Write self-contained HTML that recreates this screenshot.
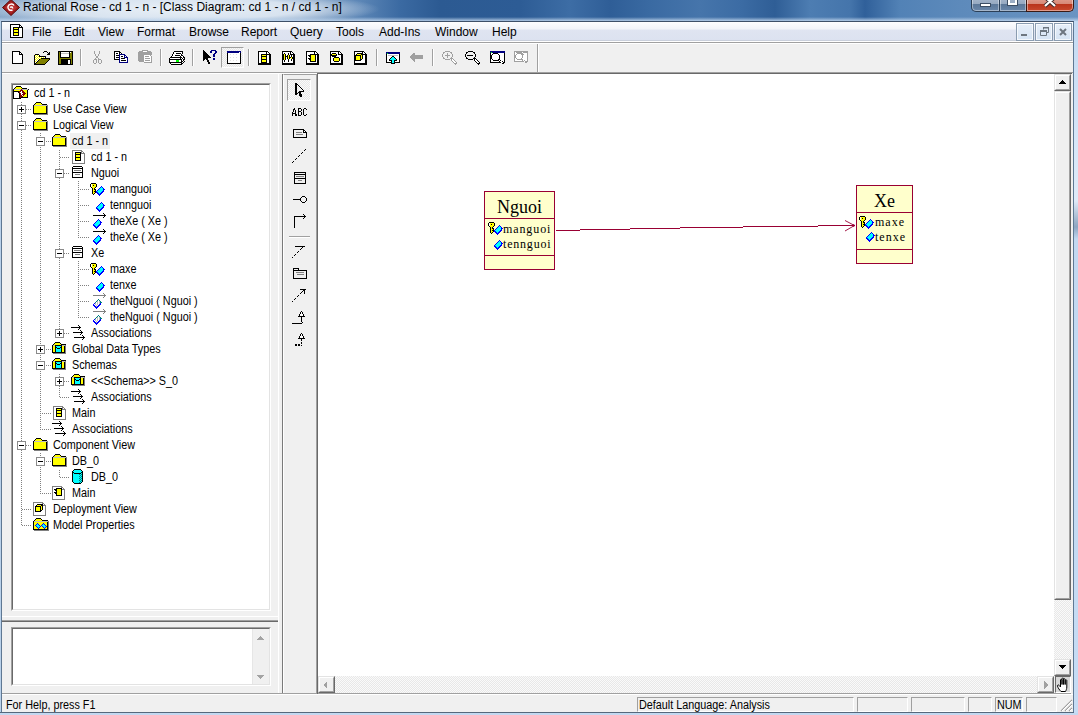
<!DOCTYPE html>
<html><head><meta charset="utf-8">
<style>
*{margin:0;padding:0;box-sizing:border-box}
html,body{width:1078px;height:715px;overflow:hidden;background:#f0f0f0;font-family:"Liberation Sans",sans-serif;position:relative}
.a{position:absolute;display:block}
.t{position:absolute;font-size:12px;line-height:16px;white-space:nowrap;color:#000;transform:scaleX(0.9);transform-origin:0 0}
.mi{position:absolute;top:23px;font-size:12px;line-height:18px;color:#000;white-space:nowrap}
.dot{position:absolute}
</style></head><body>
<div class="a" style="left:0;top:0;width:1078px;height:21px;background:linear-gradient(90deg,#8aa9ca 0px,#7d9ec4 300px,#5c86b6 360px,#3b6aa2 400px,#2c5a92 440px,#2d5c95 520px,#3d6da5 570px,#2f5e97 610px,#3a6aa2 650px,#4675ab 700px,#3c6ca4 740px,#2f5e96 775px,#4d7db2 810px,#4575ab 850px,#30609a 865px,#5282b6 900px,#5d8abb 960px,#6a94c2 1078px)"></div><div class="a" style="left:0;top:0;width:420px;height:21px;background:radial-gradient(ellipse 200px 18px at 180px 9px,rgba(236,242,248,.97) 0%,rgba(225,234,244,.9) 60%,rgba(200,218,238,0) 100%)"></div><div class="a" style="left:0;top:17px;width:1078px;height:4px;background:linear-gradient(rgba(200,220,240,0),rgba(190,212,236,.9))"></div><div class="a" style="left:23px;top:-2px;font-size:12px;line-height:18px;white-space:nowrap;color:#000">Rational Rose - cd 1 - n - [Class Diagram: cd 1 - n / cd 1 - n]</div><svg class="a" style="left:2px;top:-1px" width="18" height="17"><path d="M9 0.5 L17.5 8.5 L9 16.5 L0.5 8.5 Z" fill="#9c1c1c" stroke="#5a0a0a" stroke-width="1"/><path d="M9 3 L15 8.5 L9 14 L3 8.5 Z" fill="#b83030"/><path d="M12 6.5 C11 4.5 7 4.5 6 7.5 C5.3 10 8 12 10.5 11 M8 8.5 C9 7.5 11 8 10.5 9.5" stroke="#fff" stroke-width="1.5" fill="none"/></svg><div class="a" style="left:971px;top:-4px;width:29px;height:16px;border:1px solid #2b3f57;border-top:none;border-radius:0 0 0 5px;background:linear-gradient(#aabbd0 0,#97aac2 50%,#5a7697 52%,#6a87aa 100%);box-shadow:inset 0 0 0 1px rgba(255,255,255,.4)"></div><div class="a" style="left:999px;top:-4px;width:28px;height:16px;border:1px solid #2b3f57;border-top:none;background:linear-gradient(#aabbd0 0,#97aac2 50%,#5a7697 52%,#6a87aa 100%);box-shadow:inset 0 0 0 1px rgba(255,255,255,.4)"></div><div class="a" style="left:1026px;top:-4px;width:48px;height:16px;border:1px solid #3a1a14;border-top:none;border-radius:0 0 5px 0;background:linear-gradient(#e3a597 0,#d88a78 50%,#b8321a 52%,#c84a2e 100%);box-shadow:inset 0 0 0 1px rgba(255,255,255,.45)"></div><div class="a" style="left:980px;top:3px;width:11px;height:4px;background:#fff;border:1px solid #3c4e64"></div><div class="a" style="left:1008px;top:-3px;width:9px;height:8px;border:2px solid #fff;outline:1px solid #3c4e64"></div><svg class="a" style="left:1043px;top:-3px" width="14" height="11"><path d="M2 0 L7 4.5 L12 0 M2 9 L7 4.5 L12 9" stroke="#3a2a2a" stroke-width="4" fill="none"/><path d="M2 0 L7 4.5 L12 0 M2 9 L7 4.5 L12 9" stroke="#fff" stroke-width="2.2" fill="none"/></svg><div class="a" style="left:0;top:21px;width:2px;height:694px;background:linear-gradient(90deg,#b9d1ea 0,#b9d1ea 1px,#5f7893 1px)"></div><div class="a" style="left:1073px;top:21px;width:5px;height:694px;background:linear-gradient(90deg,#5f7893 0,#5f7893 1px,#c6dcf4 1px)"></div><div class="a" style="left:1074px;top:21px;width:4px;height:692px;background:linear-gradient(180deg,#c4daf2 0,#d6e6f8 120px,#dfeaf8 180px,#9fb4cc 200px,#8ea6c2 206px,#c2d8f0 218px,#c6dcf4 100%)"></div><div class="a" style="left:0;top:713px;width:1078px;height:2px;background:#c3d8f0"></div><div class="a" style="left:0;top:712px;width:1074px;height:1px;background:#56687c"></div><div class="a" style="left:1px;top:21px;width:1073px;height:1px;background:#3e5068;border-radius:2px 2px 0 0"></div><div class="a" style="left:2px;top:22px;width:1071px;height:19px;background:linear-gradient(#fdfdfe 0,#f2f4f9 35%,#dfe4f1 45%,#dce2f0 100%)"></div><div class="a" style="left:2px;top:40px;width:1071px;height:1px;background:#c9cfdb"></div><div class="a" style="left:2px;top:41px;width:1071px;height:1px;background:#ffffff"></div><div class="a" style="left:2px;top:42px;width:1071px;height:1px;background:#a0a0a0"></div><div class="a" style="left:2px;top:43px;width:1071px;height:1px;background:#ffffff"></div><svg class="a" style="left:10px;top:24px" width="13" height="14" shape-rendering="crispEdges"><rect x="0" y="0" width="10" height="1" fill="#000000"/><rect x="0" y="1" width="1" height="1" fill="#000000"/><rect x="1" y="1" width="8" height="1" fill="#ffffff"/><rect x="9" y="1" width="2" height="1" fill="#000000"/><rect x="0" y="2" width="1" height="1" fill="#000000"/><rect x="1" y="2" width="8" height="1" fill="#ffffff"/><rect x="9" y="2" width="1" height="1" fill="#000000"/><rect x="10" y="2" width="1" height="1" fill="#ffffff"/><rect x="11" y="2" width="1" height="1" fill="#000000"/><rect x="0" y="3" width="1" height="1" fill="#000000"/><rect x="1" y="3" width="2" height="1" fill="#ffffff"/><rect x="3" y="3" width="10" height="1" fill="#000000"/><rect x="0" y="4" width="1" height="1" fill="#000000"/><rect x="1" y="4" width="2" height="1" fill="#ffffff"/><rect x="3" y="4" width="1" height="1" fill="#000000"/><rect x="4" y="4" width="4" height="1" fill="#ffff00"/><rect x="8" y="4" width="1" height="1" fill="#000000"/><rect x="9" y="4" width="3" height="1" fill="#ffffff"/><rect x="12" y="4" width="1" height="1" fill="#000000"/><rect x="0" y="5" width="1" height="1" fill="#000000"/><rect x="1" y="5" width="2" height="1" fill="#ffffff"/><rect x="3" y="5" width="6" height="1" fill="#000000"/><rect x="9" y="5" width="3" height="1" fill="#ffffff"/><rect x="12" y="5" width="1" height="1" fill="#000000"/><rect x="0" y="6" width="1" height="1" fill="#000000"/><rect x="1" y="6" width="2" height="1" fill="#ffffff"/><rect x="3" y="6" width="1" height="1" fill="#000000"/><rect x="4" y="6" width="4" height="1" fill="#ffff00"/><rect x="8" y="6" width="1" height="1" fill="#000000"/><rect x="9" y="6" width="3" height="1" fill="#ffffff"/><rect x="12" y="6" width="1" height="1" fill="#000000"/><rect x="0" y="7" width="1" height="1" fill="#000000"/><rect x="1" y="7" width="2" height="1" fill="#ffffff"/><rect x="3" y="7" width="1" height="1" fill="#000000"/><rect x="4" y="7" width="4" height="1" fill="#ffff00"/><rect x="8" y="7" width="1" height="1" fill="#000000"/><rect x="9" y="7" width="3" height="1" fill="#ffffff"/><rect x="12" y="7" width="1" height="1" fill="#000000"/><rect x="0" y="8" width="1" height="1" fill="#000000"/><rect x="1" y="8" width="2" height="1" fill="#ffffff"/><rect x="3" y="8" width="6" height="1" fill="#000000"/><rect x="9" y="8" width="3" height="1" fill="#ffffff"/><rect x="12" y="8" width="1" height="1" fill="#000000"/><rect x="0" y="9" width="1" height="1" fill="#000000"/><rect x="1" y="9" width="2" height="1" fill="#ffffff"/><rect x="3" y="9" width="1" height="1" fill="#000000"/><rect x="4" y="9" width="4" height="1" fill="#ffff00"/><rect x="8" y="9" width="1" height="1" fill="#000000"/><rect x="9" y="9" width="3" height="1" fill="#ffffff"/><rect x="12" y="9" width="1" height="1" fill="#000000"/><rect x="0" y="10" width="1" height="1" fill="#000000"/><rect x="1" y="10" width="2" height="1" fill="#ffffff"/><rect x="3" y="10" width="1" height="1" fill="#000000"/><rect x="4" y="10" width="4" height="1" fill="#ffff00"/><rect x="8" y="10" width="1" height="1" fill="#000000"/><rect x="9" y="10" width="3" height="1" fill="#ffffff"/><rect x="12" y="10" width="1" height="1" fill="#000000"/><rect x="0" y="11" width="1" height="1" fill="#000000"/><rect x="1" y="11" width="2" height="1" fill="#ffffff"/><rect x="3" y="11" width="6" height="1" fill="#000000"/><rect x="9" y="11" width="3" height="1" fill="#ffffff"/><rect x="12" y="11" width="1" height="1" fill="#000000"/><rect x="0" y="12" width="1" height="1" fill="#000000"/><rect x="1" y="12" width="11" height="1" fill="#ffffff"/><rect x="12" y="12" width="1" height="1" fill="#000000"/><rect x="0" y="13" width="13" height="1" fill="#000000"/></svg><div class="mi" style="left:32px">File</div><div class="mi" style="left:64px">Edit</div><div class="mi" style="left:98px">View</div><div class="mi" style="left:137px">Format</div><div class="mi" style="left:189px">Browse</div><div class="mi" style="left:241px">Report</div><div class="mi" style="left:290px">Query</div><div class="mi" style="left:336px">Tools</div><div class="mi" style="left:379px">Add-Ins</div><div class="mi" style="left:435px">Window</div><div class="mi" style="left:492px">Help</div><div class="a" style="left:1016px;top:23px;width:18px;height:18px;border:1px solid #8a9cb0;background:linear-gradient(#e6eef8,#d6e4f4);box-shadow:inset 0 0 0 1px rgba(255,255,255,.7)"></div><div class="a" style="left:1035px;top:23px;width:18px;height:18px;border:1px solid #8a9cb0;background:linear-gradient(#e6eef8,#d6e4f4);box-shadow:inset 0 0 0 1px rgba(255,255,255,.7)"></div><div class="a" style="left:1054px;top:23px;width:18px;height:18px;border:1px solid #8a9cb0;background:linear-gradient(#e6eef8,#d6e4f4);box-shadow:inset 0 0 0 1px rgba(255,255,255,.7)"></div><div class="a" style="left:1021px;top:34px;width:6px;height:2px;background:#6d7680"></div><svg class="a" style="left:1040px;top:27px" width="9" height="9"><path d="M3.5 2.5 V0.5 H8.5 V5.5 H6.5 M0.5 3.5 H6.5 V8.5 H0.5 Z M0.5 4.5 H6.5" stroke="#6d7680" fill="none" stroke-width="1"/><rect x="0" y="3" width="7" height="2" fill="#6d7680"/><rect x="3" y="0" width="6" height="1.5" fill="#6d7680"/></svg><svg class="a" style="left:1059px;top:28px" width="8" height="8"><path d="M1 1 L7 7 M7 1 L1 7" stroke="#6d7680" stroke-width="2"/></svg><div class="a" style="left:2px;top:72px;width:1071px;height:1px;background:#a0a0a0"></div><div class="a" style="left:537px;top:44px;width:1px;height:28px;background:#a0a0a0"></div><div class="a" style="left:538px;top:44px;width:1px;height:28px;background:#ffffff"></div><div class="a" style="left:80px;top:49px;width:1px;height:17px;background:#a0a0a0"></div><div class="a" style="left:81px;top:49px;width:1px;height:17px;background:#ffffff"></div><div class="a" style="left:160px;top:49px;width:1px;height:17px;background:#a0a0a0"></div><div class="a" style="left:161px;top:49px;width:1px;height:17px;background:#ffffff"></div><div class="a" style="left:192px;top:49px;width:1px;height:17px;background:#a0a0a0"></div><div class="a" style="left:193px;top:49px;width:1px;height:17px;background:#ffffff"></div><div class="a" style="left:248px;top:49px;width:1px;height:17px;background:#a0a0a0"></div><div class="a" style="left:249px;top:49px;width:1px;height:17px;background:#ffffff"></div><div class="a" style="left:376px;top:49px;width:1px;height:17px;background:#a0a0a0"></div><div class="a" style="left:377px;top:49px;width:1px;height:17px;background:#ffffff"></div><div class="a" style="left:432px;top:49px;width:1px;height:17px;background:#a0a0a0"></div><div class="a" style="left:433px;top:49px;width:1px;height:17px;background:#ffffff"></div><div class="a" style="left:221px;top:47px;width:23px;height:21px;border-top:1px solid #a0a0a0;border-left:1px solid #a0a0a0;border-right:1px solid #fff;border-bottom:1px solid #fff;background-color:#f7f7f7;background-image:linear-gradient(45deg,#e6e6e6 25%,transparent 25%,transparent 75%,#e6e6e6 75%),linear-gradient(45deg,#e6e6e6 25%,transparent 25%,transparent 75%,#e6e6e6 75%);background-size:2px 2px;background-position:0 0,1px 1px"></div><svg class="a" style="left:12px;top:51px" width="11" height="13" shape-rendering="crispEdges"><rect x="0" y="0" width="8" height="1" fill="#000000"/><rect x="0" y="1" width="1" height="1" fill="#000000"/><rect x="1" y="1" width="6" height="1" fill="#ffffff"/><rect x="7" y="1" width="2" height="1" fill="#000000"/><rect x="0" y="2" width="1" height="1" fill="#000000"/><rect x="1" y="2" width="6" height="1" fill="#ffffff"/><rect x="7" y="2" width="1" height="1" fill="#000000"/><rect x="8" y="2" width="1" height="1" fill="#ffffff"/><rect x="9" y="2" width="1" height="1" fill="#000000"/><rect x="0" y="3" width="1" height="1" fill="#000000"/><rect x="1" y="3" width="6" height="1" fill="#ffffff"/><rect x="7" y="3" width="4" height="1" fill="#000000"/><rect x="0" y="4" width="1" height="1" fill="#000000"/><rect x="1" y="4" width="9" height="1" fill="#ffffff"/><rect x="10" y="4" width="1" height="1" fill="#000000"/><rect x="0" y="5" width="1" height="1" fill="#000000"/><rect x="1" y="5" width="9" height="1" fill="#ffffff"/><rect x="10" y="5" width="1" height="1" fill="#000000"/><rect x="0" y="6" width="1" height="1" fill="#000000"/><rect x="1" y="6" width="9" height="1" fill="#ffffff"/><rect x="10" y="6" width="1" height="1" fill="#000000"/><rect x="0" y="7" width="1" height="1" fill="#000000"/><rect x="1" y="7" width="9" height="1" fill="#ffffff"/><rect x="10" y="7" width="1" height="1" fill="#000000"/><rect x="0" y="8" width="1" height="1" fill="#000000"/><rect x="1" y="8" width="9" height="1" fill="#ffffff"/><rect x="10" y="8" width="1" height="1" fill="#000000"/><rect x="0" y="9" width="1" height="1" fill="#000000"/><rect x="1" y="9" width="9" height="1" fill="#ffffff"/><rect x="10" y="9" width="1" height="1" fill="#000000"/><rect x="0" y="10" width="1" height="1" fill="#000000"/><rect x="1" y="10" width="9" height="1" fill="#ffffff"/><rect x="10" y="10" width="1" height="1" fill="#000000"/><rect x="0" y="11" width="1" height="1" fill="#000000"/><rect x="1" y="11" width="9" height="1" fill="#ffffff"/><rect x="10" y="11" width="1" height="1" fill="#000000"/><rect x="0" y="12" width="11" height="1" fill="#000000"/></svg><svg class="a" style="left:34px;top:51px" width="16" height="14" shape-rendering="crispEdges"><rect x="10" y="0" width="3" height="1" fill="#000000"/><rect x="9" y="1" width="1" height="1" fill="#000000"/><rect x="13" y="1" width="1" height="1" fill="#000000"/><rect x="15" y="1" width="1" height="1" fill="#000000"/><rect x="14" y="2" width="2" height="1" fill="#000000"/><rect x="1" y="3" width="4" height="1" fill="#000000"/><rect x="13" y="3" width="3" height="1" fill="#000000"/><rect x="0" y="4" width="1" height="1" fill="#000000"/><rect x="1" y="4" width="1" height="1" fill="#ffff00"/><rect x="2" y="4" width="1" height="1" fill="#ffffff"/><rect x="3" y="4" width="1" height="1" fill="#ffff00"/><rect x="4" y="4" width="1" height="1" fill="#ffffff"/><rect x="5" y="4" width="1" height="1" fill="#000000"/><rect x="0" y="5" width="1" height="1" fill="#000000"/><rect x="1" y="5" width="1" height="1" fill="#ffffff"/><rect x="2" y="5" width="1" height="1" fill="#ffff00"/><rect x="3" y="5" width="1" height="1" fill="#ffffff"/><rect x="4" y="5" width="1" height="1" fill="#ffff00"/><rect x="5" y="5" width="7" height="1" fill="#000000"/><rect x="0" y="6" width="1" height="1" fill="#000000"/><rect x="1" y="6" width="1" height="1" fill="#ffff00"/><rect x="2" y="6" width="1" height="1" fill="#ffffff"/><rect x="3" y="6" width="1" height="1" fill="#ffff00"/><rect x="4" y="6" width="1" height="1" fill="#ffffff"/><rect x="5" y="6" width="1" height="1" fill="#ffff00"/><rect x="6" y="6" width="1" height="1" fill="#ffffff"/><rect x="7" y="6" width="1" height="1" fill="#ffff00"/><rect x="8" y="6" width="1" height="1" fill="#ffffff"/><rect x="9" y="6" width="1" height="1" fill="#ffff00"/><rect x="10" y="6" width="1" height="1" fill="#ffffff"/><rect x="11" y="6" width="1" height="1" fill="#000000"/><rect x="0" y="7" width="1" height="1" fill="#000000"/><rect x="1" y="7" width="1" height="1" fill="#ffffff"/><rect x="2" y="7" width="1" height="1" fill="#ffff00"/><rect x="3" y="7" width="1" height="1" fill="#ffffff"/><rect x="4" y="7" width="1" height="1" fill="#ffff00"/><rect x="5" y="7" width="1" height="1" fill="#ffffff"/><rect x="6" y="7" width="1" height="1" fill="#ffff00"/><rect x="7" y="7" width="9" height="1" fill="#000000"/><rect x="0" y="8" width="1" height="1" fill="#000000"/><rect x="1" y="8" width="1" height="1" fill="#ffff00"/><rect x="2" y="8" width="1" height="1" fill="#ffffff"/><rect x="3" y="8" width="1" height="1" fill="#ffff00"/><rect x="4" y="8" width="1" height="1" fill="#ffffff"/><rect x="5" y="8" width="1" height="1" fill="#000000"/><rect x="6" y="8" width="9" height="1" fill="#808000"/><rect x="15" y="8" width="1" height="1" fill="#000000"/><rect x="0" y="9" width="1" height="1" fill="#000000"/><rect x="1" y="9" width="1" height="1" fill="#ffffff"/><rect x="2" y="9" width="1" height="1" fill="#ffff00"/><rect x="3" y="9" width="1" height="1" fill="#ffffff"/><rect x="4" y="9" width="1" height="1" fill="#000000"/><rect x="5" y="9" width="9" height="1" fill="#808000"/><rect x="14" y="9" width="1" height="1" fill="#000000"/><rect x="0" y="10" width="1" height="1" fill="#000000"/><rect x="1" y="10" width="1" height="1" fill="#ffff00"/><rect x="2" y="10" width="1" height="1" fill="#ffffff"/><rect x="3" y="10" width="1" height="1" fill="#000000"/><rect x="4" y="10" width="9" height="1" fill="#808000"/><rect x="13" y="10" width="1" height="1" fill="#000000"/><rect x="0" y="11" width="1" height="1" fill="#000000"/><rect x="1" y="11" width="1" height="1" fill="#ffffff"/><rect x="2" y="11" width="1" height="1" fill="#000000"/><rect x="3" y="11" width="9" height="1" fill="#808000"/><rect x="12" y="11" width="1" height="1" fill="#000000"/><rect x="0" y="12" width="2" height="1" fill="#000000"/><rect x="2" y="12" width="9" height="1" fill="#808000"/><rect x="11" y="12" width="1" height="1" fill="#000000"/><rect x="0" y="13" width="11" height="1" fill="#000000"/></svg><svg class="a" style="left:58px;top:51px" width="15" height="14" shape-rendering="crispEdges"><rect x="0" y="0" width="15" height="1" fill="#000000"/><rect x="0" y="1" width="1" height="1" fill="#000000"/><rect x="1" y="1" width="1" height="1" fill="#808000"/><rect x="2" y="1" width="1" height="1" fill="#000000"/><rect x="3" y="1" width="8" height="1" fill="#ffffff"/><rect x="11" y="1" width="1" height="1" fill="#000000"/><rect x="12" y="1" width="1" height="1" fill="#ffffff"/><rect x="13" y="1" width="1" height="1" fill="#808000"/><rect x="14" y="1" width="1" height="1" fill="#000000"/><rect x="0" y="2" width="1" height="1" fill="#000000"/><rect x="1" y="2" width="1" height="1" fill="#808000"/><rect x="2" y="2" width="1" height="1" fill="#000000"/><rect x="3" y="2" width="8" height="1" fill="#c0c0c0"/><rect x="11" y="2" width="1" height="1" fill="#000000"/><rect x="12" y="2" width="2" height="1" fill="#808000"/><rect x="14" y="2" width="1" height="1" fill="#000000"/><rect x="0" y="3" width="1" height="1" fill="#000000"/><rect x="1" y="3" width="1" height="1" fill="#808000"/><rect x="2" y="3" width="1" height="1" fill="#000000"/><rect x="3" y="3" width="8" height="1" fill="#ffffff"/><rect x="11" y="3" width="1" height="1" fill="#000000"/><rect x="12" y="3" width="2" height="1" fill="#808000"/><rect x="14" y="3" width="1" height="1" fill="#000000"/><rect x="0" y="4" width="1" height="1" fill="#000000"/><rect x="1" y="4" width="1" height="1" fill="#808000"/><rect x="2" y="4" width="1" height="1" fill="#000000"/><rect x="3" y="4" width="8" height="1" fill="#ffffff"/><rect x="11" y="4" width="1" height="1" fill="#000000"/><rect x="12" y="4" width="2" height="1" fill="#808000"/><rect x="14" y="4" width="1" height="1" fill="#000000"/><rect x="0" y="5" width="1" height="1" fill="#000000"/><rect x="1" y="5" width="1" height="1" fill="#808000"/><rect x="2" y="5" width="1" height="1" fill="#000000"/><rect x="3" y="5" width="8" height="1" fill="#ffffff"/><rect x="11" y="5" width="1" height="1" fill="#000000"/><rect x="12" y="5" width="2" height="1" fill="#808000"/><rect x="14" y="5" width="1" height="1" fill="#000000"/><rect x="0" y="6" width="1" height="1" fill="#000000"/><rect x="1" y="6" width="1" height="1" fill="#808000"/><rect x="2" y="6" width="10" height="1" fill="#000000"/><rect x="12" y="6" width="2" height="1" fill="#808000"/><rect x="14" y="6" width="1" height="1" fill="#000000"/><rect x="0" y="7" width="1" height="1" fill="#000000"/><rect x="1" y="7" width="13" height="1" fill="#808000"/><rect x="14" y="7" width="1" height="1" fill="#000000"/><rect x="0" y="8" width="1" height="1" fill="#000000"/><rect x="1" y="8" width="2" height="1" fill="#808000"/><rect x="3" y="8" width="10" height="1" fill="#000000"/><rect x="13" y="8" width="1" height="1" fill="#808000"/><rect x="14" y="8" width="1" height="1" fill="#000000"/><rect x="0" y="9" width="1" height="1" fill="#000000"/><rect x="1" y="9" width="2" height="1" fill="#808000"/><rect x="3" y="9" width="7" height="1" fill="#000000"/><rect x="10" y="9" width="2" height="1" fill="#ffffff"/><rect x="12" y="9" width="1" height="1" fill="#000000"/><rect x="13" y="9" width="1" height="1" fill="#808000"/><rect x="14" y="9" width="1" height="1" fill="#000000"/><rect x="0" y="10" width="1" height="1" fill="#000000"/><rect x="1" y="10" width="2" height="1" fill="#808000"/><rect x="3" y="10" width="7" height="1" fill="#000000"/><rect x="10" y="10" width="2" height="1" fill="#ffffff"/><rect x="12" y="10" width="1" height="1" fill="#000000"/><rect x="13" y="10" width="1" height="1" fill="#808000"/><rect x="14" y="10" width="1" height="1" fill="#000000"/><rect x="0" y="11" width="1" height="1" fill="#000000"/><rect x="1" y="11" width="2" height="1" fill="#808000"/><rect x="3" y="11" width="7" height="1" fill="#000000"/><rect x="10" y="11" width="2" height="1" fill="#ffffff"/><rect x="12" y="11" width="1" height="1" fill="#000000"/><rect x="13" y="11" width="1" height="1" fill="#808000"/><rect x="14" y="11" width="1" height="1" fill="#000000"/><rect x="0" y="12" width="1" height="1" fill="#000000"/><rect x="1" y="12" width="2" height="1" fill="#808000"/><rect x="3" y="12" width="7" height="1" fill="#000000"/><rect x="10" y="12" width="2" height="1" fill="#ffffff"/><rect x="12" y="12" width="1" height="1" fill="#000000"/><rect x="13" y="12" width="1" height="1" fill="#808000"/><rect x="14" y="12" width="1" height="1" fill="#000000"/><rect x="0" y="13" width="15" height="1" fill="#000000"/></svg><svg class="a" style="left:93px;top:51px" width="9" height="14" shape-rendering="crispEdges"><rect x="1" y="0" width="1" height="1" fill="#a0a0a0"/><rect x="6" y="0" width="1" height="1" fill="#a0a0a0"/><rect x="1" y="1" width="1" height="1" fill="#a0a0a0"/><rect x="6" y="1" width="1" height="1" fill="#a0a0a0"/><rect x="1" y="2" width="1" height="1" fill="#a0a0a0"/><rect x="6" y="2" width="1" height="1" fill="#a0a0a0"/><rect x="2" y="3" width="1" height="1" fill="#a0a0a0"/><rect x="5" y="3" width="1" height="1" fill="#a0a0a0"/><rect x="2" y="4" width="1" height="1" fill="#a0a0a0"/><rect x="5" y="4" width="1" height="1" fill="#a0a0a0"/><rect x="3" y="5" width="2" height="1" fill="#a0a0a0"/><rect x="3" y="6" width="2" height="1" fill="#a0a0a0"/><rect x="2" y="7" width="1" height="1" fill="#a0a0a0"/><rect x="5" y="7" width="1" height="1" fill="#a0a0a0"/><rect x="1" y="8" width="3" height="1" fill="#a0a0a0"/><rect x="5" y="8" width="3" height="1" fill="#a0a0a0"/><rect x="0" y="9" width="1" height="1" fill="#a0a0a0"/><rect x="3" y="9" width="1" height="1" fill="#a0a0a0"/><rect x="5" y="9" width="1" height="1" fill="#a0a0a0"/><rect x="8" y="9" width="1" height="1" fill="#a0a0a0"/><rect x="0" y="10" width="1" height="1" fill="#a0a0a0"/><rect x="3" y="10" width="1" height="1" fill="#a0a0a0"/><rect x="5" y="10" width="1" height="1" fill="#a0a0a0"/><rect x="8" y="10" width="1" height="1" fill="#a0a0a0"/><rect x="0" y="11" width="1" height="1" fill="#a0a0a0"/><rect x="3" y="11" width="1" height="1" fill="#a0a0a0"/><rect x="5" y="11" width="1" height="1" fill="#a0a0a0"/><rect x="8" y="11" width="1" height="1" fill="#a0a0a0"/><rect x="1" y="12" width="2" height="1" fill="#a0a0a0"/><rect x="6" y="12" width="2" height="1" fill="#a0a0a0"/></svg><svg class="a" style="left:114px;top:51px" width="15" height="12" shape-rendering="crispEdges"><rect x="0" y="0" width="6" height="1" fill="#000000"/><rect x="0" y="1" width="1" height="1" fill="#000000"/><rect x="1" y="1" width="4" height="1" fill="#ffffff"/><rect x="5" y="1" width="2" height="1" fill="#000000"/><rect x="0" y="2" width="1" height="1" fill="#000000"/><rect x="1" y="2" width="1" height="1" fill="#ffffff"/><rect x="2" y="2" width="2" height="1" fill="#000000"/><rect x="4" y="2" width="1" height="1" fill="#ffffff"/><rect x="5" y="2" width="1" height="1" fill="#000000"/><rect x="6" y="2" width="1" height="1" fill="#ffffff"/><rect x="7" y="2" width="1" height="1" fill="#000000"/><rect x="0" y="3" width="1" height="1" fill="#000000"/><rect x="1" y="3" width="4" height="1" fill="#ffffff"/><rect x="5" y="3" width="6" height="1" fill="#000080"/><rect x="0" y="4" width="1" height="1" fill="#000000"/><rect x="1" y="4" width="1" height="1" fill="#ffffff"/><rect x="2" y="4" width="3" height="1" fill="#000000"/><rect x="5" y="4" width="1" height="1" fill="#000080"/><rect x="6" y="4" width="4" height="1" fill="#ffffff"/><rect x="10" y="4" width="2" height="1" fill="#000080"/><rect x="0" y="5" width="1" height="1" fill="#000000"/><rect x="1" y="5" width="4" height="1" fill="#ffffff"/><rect x="5" y="5" width="1" height="1" fill="#000080"/><rect x="6" y="5" width="1" height="1" fill="#ffffff"/><rect x="7" y="5" width="2" height="1" fill="#000000"/><rect x="9" y="5" width="1" height="1" fill="#ffffff"/><rect x="10" y="5" width="1" height="1" fill="#000080"/><rect x="11" y="5" width="1" height="1" fill="#ffffff"/><rect x="12" y="5" width="1" height="1" fill="#000080"/><rect x="0" y="6" width="1" height="1" fill="#000000"/><rect x="1" y="6" width="1" height="1" fill="#ffffff"/><rect x="2" y="6" width="3" height="1" fill="#000000"/><rect x="5" y="6" width="1" height="1" fill="#000080"/><rect x="6" y="6" width="4" height="1" fill="#ffffff"/><rect x="10" y="6" width="4" height="1" fill="#000080"/><rect x="0" y="7" width="1" height="1" fill="#000000"/><rect x="1" y="7" width="4" height="1" fill="#ffffff"/><rect x="5" y="7" width="1" height="1" fill="#000080"/><rect x="6" y="7" width="1" height="1" fill="#ffffff"/><rect x="7" y="7" width="4" height="1" fill="#000000"/><rect x="11" y="7" width="2" height="1" fill="#ffffff"/><rect x="13" y="7" width="1" height="1" fill="#000080"/><rect x="0" y="8" width="5" height="1" fill="#000000"/><rect x="5" y="8" width="1" height="1" fill="#000080"/><rect x="6" y="8" width="7" height="1" fill="#ffffff"/><rect x="13" y="8" width="1" height="1" fill="#000080"/><rect x="5" y="9" width="1" height="1" fill="#000080"/><rect x="6" y="9" width="1" height="1" fill="#ffffff"/><rect x="7" y="9" width="5" height="1" fill="#000000"/><rect x="12" y="9" width="1" height="1" fill="#ffffff"/><rect x="13" y="9" width="1" height="1" fill="#000080"/><rect x="5" y="10" width="1" height="1" fill="#000080"/><rect x="6" y="10" width="7" height="1" fill="#ffffff"/><rect x="13" y="10" width="1" height="1" fill="#000080"/><rect x="5" y="11" width="9" height="1" fill="#000080"/></svg><svg class="a" style="left:138px;top:50px" width="15" height="14" shape-rendering="crispEdges"><rect x="4" y="0" width="6" height="1" fill="#a0a0a0"/><rect x="1" y="1" width="4" height="1" fill="#a0a0a0"/><rect x="5" y="1" width="4" height="1" fill="#ffffff"/><rect x="9" y="1" width="4" height="1" fill="#a0a0a0"/><rect x="0" y="2" width="14" height="1" fill="#a0a0a0"/><rect x="0" y="3" width="14" height="1" fill="#a0a0a0"/><rect x="0" y="4" width="14" height="1" fill="#a0a0a0"/><rect x="0" y="5" width="6" height="1" fill="#a0a0a0"/><rect x="6" y="5" width="6" height="1" fill="#ffffff"/><rect x="12" y="5" width="1" height="1" fill="#a0a0a0"/><rect x="0" y="6" width="6" height="1" fill="#a0a0a0"/><rect x="6" y="6" width="1" height="1" fill="#ffffff"/><rect x="7" y="6" width="4" height="1" fill="#a0a0a0"/><rect x="11" y="6" width="2" height="1" fill="#ffffff"/><rect x="13" y="6" width="1" height="1" fill="#a0a0a0"/><rect x="0" y="7" width="6" height="1" fill="#a0a0a0"/><rect x="6" y="7" width="7" height="1" fill="#ffffff"/><rect x="13" y="7" width="1" height="1" fill="#a0a0a0"/><rect x="0" y="8" width="6" height="1" fill="#a0a0a0"/><rect x="6" y="8" width="1" height="1" fill="#ffffff"/><rect x="7" y="8" width="5" height="1" fill="#a0a0a0"/><rect x="12" y="8" width="1" height="1" fill="#ffffff"/><rect x="13" y="8" width="1" height="1" fill="#a0a0a0"/><rect x="0" y="9" width="6" height="1" fill="#a0a0a0"/><rect x="6" y="9" width="7" height="1" fill="#ffffff"/><rect x="13" y="9" width="1" height="1" fill="#a0a0a0"/><rect x="0" y="10" width="6" height="1" fill="#a0a0a0"/><rect x="6" y="10" width="1" height="1" fill="#ffffff"/><rect x="7" y="10" width="5" height="1" fill="#a0a0a0"/><rect x="12" y="10" width="1" height="1" fill="#ffffff"/><rect x="13" y="10" width="1" height="1" fill="#a0a0a0"/><rect x="1" y="11" width="5" height="1" fill="#a0a0a0"/><rect x="6" y="11" width="7" height="1" fill="#ffffff"/><rect x="13" y="11" width="1" height="1" fill="#a0a0a0"/><rect x="6" y="12" width="8" height="1" fill="#a0a0a0"/></svg><svg class="a" style="left:169px;top:51px" width="16" height="14" shape-rendering="crispEdges"><rect x="5" y="0" width="9" height="1" fill="#000000"/><rect x="4" y="1" width="1" height="1" fill="#000000"/><rect x="5" y="1" width="8" height="1" fill="#ffffff"/><rect x="13" y="1" width="1" height="1" fill="#000000"/><rect x="4" y="2" width="1" height="1" fill="#000000"/><rect x="5" y="2" width="2" height="1" fill="#ffffff"/><rect x="7" y="2" width="5" height="1" fill="#000000"/><rect x="12" y="2" width="1" height="1" fill="#ffffff"/><rect x="13" y="2" width="1" height="1" fill="#000000"/><rect x="3" y="3" width="1" height="1" fill="#000000"/><rect x="4" y="3" width="8" height="1" fill="#ffffff"/><rect x="12" y="3" width="1" height="1" fill="#000000"/><rect x="3" y="4" width="1" height="1" fill="#000000"/><rect x="4" y="4" width="2" height="1" fill="#ffffff"/><rect x="6" y="4" width="5" height="1" fill="#000000"/><rect x="11" y="4" width="1" height="1" fill="#ffffff"/><rect x="12" y="4" width="2" height="1" fill="#000000"/><rect x="2" y="5" width="1" height="1" fill="#000000"/><rect x="3" y="5" width="8" height="1" fill="#ffffff"/><rect x="11" y="5" width="1" height="1" fill="#000000"/><rect x="12" y="5" width="2" height="1" fill="#ffffff"/><rect x="14" y="5" width="1" height="1" fill="#000000"/><rect x="1" y="6" width="12" height="1" fill="#000000"/><rect x="13" y="6" width="1" height="1" fill="#ffffff"/><rect x="14" y="6" width="2" height="1" fill="#000000"/><rect x="0" y="7" width="1" height="1" fill="#000000"/><rect x="1" y="7" width="10" height="1" fill="#ffffff"/><rect x="11" y="7" width="1" height="1" fill="#000000"/><rect x="12" y="7" width="1" height="1" fill="#ffffff"/><rect x="13" y="7" width="1" height="1" fill="#000000"/><rect x="14" y="7" width="1" height="1" fill="#ffffff"/><rect x="15" y="7" width="1" height="1" fill="#000000"/><rect x="0" y="8" width="13" height="1" fill="#000000"/><rect x="13" y="8" width="1" height="1" fill="#ffffff"/><rect x="14" y="8" width="2" height="1" fill="#000000"/><rect x="0" y="9" width="1" height="1" fill="#000000"/><rect x="1" y="9" width="6" height="1" fill="#ffffff"/><rect x="7" y="9" width="3" height="1" fill="#00ff00"/><rect x="10" y="9" width="2" height="1" fill="#ffffff"/><rect x="12" y="9" width="1" height="1" fill="#000000"/><rect x="13" y="9" width="1" height="1" fill="#ffffff"/><rect x="14" y="9" width="1" height="1" fill="#000000"/><rect x="0" y="10" width="1" height="1" fill="#000000"/><rect x="1" y="10" width="6" height="1" fill="#ffffff"/><rect x="7" y="10" width="3" height="1" fill="#00ff00"/><rect x="10" y="10" width="2" height="1" fill="#ffffff"/><rect x="12" y="10" width="2" height="1" fill="#000000"/><rect x="14" y="10" width="1" height="1" fill="#ffffff"/><rect x="15" y="10" width="1" height="1" fill="#000000"/><rect x="0" y="11" width="13" height="1" fill="#000000"/><rect x="13" y="11" width="1" height="1" fill="#ffffff"/><rect x="14" y="11" width="1" height="1" fill="#000000"/><rect x="1" y="12" width="1" height="1" fill="#000000"/><rect x="2" y="12" width="10" height="1" fill="#ffffff"/><rect x="12" y="12" width="2" height="1" fill="#000000"/><rect x="2" y="13" width="11" height="1" fill="#000000"/></svg><svg class="a" style="left:203px;top:50px" width="15" height="14" shape-rendering="crispEdges"><rect x="0" y="0" width="1" height="1" fill="#000000"/><rect x="8" y="0" width="5" height="1" fill="#000080"/><rect x="0" y="1" width="2" height="1" fill="#000000"/><rect x="7" y="1" width="2" height="1" fill="#000080"/><rect x="12" y="1" width="2" height="1" fill="#000080"/><rect x="0" y="2" width="3" height="1" fill="#000000"/><rect x="7" y="2" width="2" height="1" fill="#000080"/><rect x="12" y="2" width="2" height="1" fill="#000080"/><rect x="0" y="3" width="4" height="1" fill="#000000"/><rect x="11" y="3" width="2" height="1" fill="#000080"/><rect x="0" y="4" width="5" height="1" fill="#000000"/><rect x="10" y="4" width="2" height="1" fill="#000080"/><rect x="0" y="5" width="6" height="1" fill="#000000"/><rect x="10" y="5" width="2" height="1" fill="#000080"/><rect x="0" y="6" width="7" height="1" fill="#000000"/><rect x="10" y="6" width="2" height="1" fill="#000080"/><rect x="0" y="7" width="8" height="1" fill="#000000"/><rect x="0" y="8" width="5" height="1" fill="#000000"/><rect x="10" y="8" width="2" height="1" fill="#000080"/><rect x="0" y="9" width="2" height="1" fill="#000000"/><rect x="3" y="9" width="2" height="1" fill="#000000"/><rect x="10" y="9" width="2" height="1" fill="#000080"/><rect x="0" y="10" width="1" height="1" fill="#000000"/><rect x="4" y="10" width="2" height="1" fill="#000000"/><rect x="4" y="11" width="2" height="1" fill="#000000"/><rect x="5" y="12" width="2" height="1" fill="#000000"/><rect x="5" y="13" width="2" height="1" fill="#000000"/></svg><svg class="a" style="left:227px;top:51px" width="14" height="13" shape-rendering="crispEdges"><rect x="0" y="0" width="14" height="1" fill="#000080"/><rect x="0" y="1" width="12" height="1" fill="#000080"/><rect x="12" y="1" width="1" height="1" fill="#ffffff"/><rect x="13" y="1" width="1" height="1" fill="#000080"/><rect x="0" y="2" width="1" height="1" fill="#000000"/><rect x="1" y="2" width="12" height="1" fill="#ffffff"/><rect x="13" y="2" width="1" height="1" fill="#000000"/><rect x="0" y="3" width="1" height="1" fill="#000000"/><rect x="1" y="3" width="2" height="1" fill="#ffffff"/><rect x="3" y="3" width="1" height="1" fill="#e0e0e0"/><rect x="4" y="3" width="2" height="1" fill="#ffffff"/><rect x="6" y="3" width="1" height="1" fill="#e0e0e0"/><rect x="7" y="3" width="2" height="1" fill="#ffffff"/><rect x="9" y="3" width="1" height="1" fill="#e0e0e0"/><rect x="10" y="3" width="3" height="1" fill="#ffffff"/><rect x="13" y="3" width="1" height="1" fill="#000000"/><rect x="0" y="4" width="1" height="1" fill="#000000"/><rect x="1" y="4" width="12" height="1" fill="#ffffff"/><rect x="13" y="4" width="1" height="1" fill="#000000"/><rect x="0" y="5" width="1" height="1" fill="#000000"/><rect x="1" y="5" width="12" height="1" fill="#ffffff"/><rect x="13" y="5" width="1" height="1" fill="#000000"/><rect x="0" y="6" width="1" height="1" fill="#000000"/><rect x="1" y="6" width="2" height="1" fill="#ffffff"/><rect x="3" y="6" width="1" height="1" fill="#e0e0e0"/><rect x="4" y="6" width="2" height="1" fill="#ffffff"/><rect x="6" y="6" width="1" height="1" fill="#e0e0e0"/><rect x="7" y="6" width="2" height="1" fill="#ffffff"/><rect x="9" y="6" width="1" height="1" fill="#e0e0e0"/><rect x="10" y="6" width="3" height="1" fill="#ffffff"/><rect x="13" y="6" width="1" height="1" fill="#000000"/><rect x="0" y="7" width="1" height="1" fill="#000000"/><rect x="1" y="7" width="12" height="1" fill="#ffffff"/><rect x="13" y="7" width="1" height="1" fill="#000000"/><rect x="0" y="8" width="1" height="1" fill="#000000"/><rect x="1" y="8" width="12" height="1" fill="#ffffff"/><rect x="13" y="8" width="1" height="1" fill="#000000"/><rect x="0" y="9" width="1" height="1" fill="#000000"/><rect x="1" y="9" width="2" height="1" fill="#ffffff"/><rect x="3" y="9" width="1" height="1" fill="#e0e0e0"/><rect x="4" y="9" width="2" height="1" fill="#ffffff"/><rect x="6" y="9" width="1" height="1" fill="#e0e0e0"/><rect x="7" y="9" width="2" height="1" fill="#ffffff"/><rect x="9" y="9" width="1" height="1" fill="#e0e0e0"/><rect x="10" y="9" width="3" height="1" fill="#ffffff"/><rect x="13" y="9" width="1" height="1" fill="#000000"/><rect x="0" y="10" width="1" height="1" fill="#000000"/><rect x="1" y="10" width="12" height="1" fill="#ffffff"/><rect x="13" y="10" width="1" height="1" fill="#000000"/><rect x="0" y="11" width="1" height="1" fill="#000000"/><rect x="1" y="11" width="12" height="1" fill="#ffffff"/><rect x="13" y="11" width="1" height="1" fill="#000000"/><rect x="0" y="12" width="14" height="1" fill="#000000"/></svg><svg class="a" style="left:258px;top:51px" width="13" height="14" shape-rendering="crispEdges"><rect x="0" y="0" width="10" height="1" fill="#000000"/><rect x="0" y="1" width="1" height="1" fill="#000000"/><rect x="1" y="1" width="7" height="1" fill="#ffffff"/><rect x="8" y="1" width="1" height="1" fill="#000000"/><rect x="9" y="1" width="1" height="1" fill="#ffffff"/><rect x="10" y="1" width="1" height="1" fill="#000000"/><rect x="0" y="2" width="1" height="1" fill="#000000"/><rect x="1" y="2" width="7" height="1" fill="#ffffff"/><rect x="8" y="2" width="1" height="1" fill="#000000"/><rect x="9" y="2" width="2" height="1" fill="#ffffff"/><rect x="11" y="2" width="1" height="1" fill="#000000"/><rect x="0" y="3" width="1" height="1" fill="#000000"/><rect x="1" y="3" width="2" height="1" fill="#ffffff"/><rect x="3" y="3" width="10" height="1" fill="#000000"/><rect x="0" y="4" width="1" height="1" fill="#000000"/><rect x="1" y="4" width="2" height="1" fill="#ffffff"/><rect x="3" y="4" width="1" height="1" fill="#000000"/><rect x="4" y="4" width="4" height="1" fill="#ffff00"/><rect x="8" y="4" width="1" height="1" fill="#000000"/><rect x="9" y="4" width="2" height="1" fill="#ffffff"/><rect x="11" y="4" width="2" height="1" fill="#000000"/><rect x="0" y="5" width="1" height="1" fill="#000000"/><rect x="1" y="5" width="2" height="1" fill="#ffffff"/><rect x="3" y="5" width="6" height="1" fill="#000000"/><rect x="9" y="5" width="2" height="1" fill="#ffffff"/><rect x="11" y="5" width="2" height="1" fill="#000000"/><rect x="0" y="6" width="1" height="1" fill="#000000"/><rect x="1" y="6" width="2" height="1" fill="#ffffff"/><rect x="3" y="6" width="1" height="1" fill="#000000"/><rect x="4" y="6" width="4" height="1" fill="#ffff00"/><rect x="8" y="6" width="1" height="1" fill="#000000"/><rect x="9" y="6" width="2" height="1" fill="#ffffff"/><rect x="11" y="6" width="2" height="1" fill="#000000"/><rect x="0" y="7" width="1" height="1" fill="#000000"/><rect x="1" y="7" width="2" height="1" fill="#ffffff"/><rect x="3" y="7" width="1" height="1" fill="#000000"/><rect x="4" y="7" width="4" height="1" fill="#ffff00"/><rect x="8" y="7" width="1" height="1" fill="#000000"/><rect x="9" y="7" width="2" height="1" fill="#ffffff"/><rect x="11" y="7" width="2" height="1" fill="#000000"/><rect x="0" y="8" width="1" height="1" fill="#000000"/><rect x="1" y="8" width="2" height="1" fill="#ffffff"/><rect x="3" y="8" width="6" height="1" fill="#000000"/><rect x="9" y="8" width="2" height="1" fill="#ffffff"/><rect x="11" y="8" width="2" height="1" fill="#000000"/><rect x="0" y="9" width="1" height="1" fill="#000000"/><rect x="1" y="9" width="2" height="1" fill="#ffffff"/><rect x="3" y="9" width="1" height="1" fill="#000000"/><rect x="4" y="9" width="4" height="1" fill="#ffff00"/><rect x="8" y="9" width="1" height="1" fill="#000000"/><rect x="9" y="9" width="2" height="1" fill="#ffffff"/><rect x="11" y="9" width="2" height="1" fill="#000000"/><rect x="0" y="10" width="1" height="1" fill="#000000"/><rect x="1" y="10" width="2" height="1" fill="#ffffff"/><rect x="3" y="10" width="1" height="1" fill="#000000"/><rect x="4" y="10" width="4" height="1" fill="#ffff00"/><rect x="8" y="10" width="1" height="1" fill="#000000"/><rect x="9" y="10" width="2" height="1" fill="#ffffff"/><rect x="11" y="10" width="2" height="1" fill="#000000"/><rect x="0" y="11" width="1" height="1" fill="#000000"/><rect x="1" y="11" width="2" height="1" fill="#ffffff"/><rect x="3" y="11" width="6" height="1" fill="#000000"/><rect x="9" y="11" width="2" height="1" fill="#ffffff"/><rect x="11" y="11" width="2" height="1" fill="#000000"/><rect x="0" y="12" width="13" height="1" fill="#000000"/><rect x="0" y="13" width="13" height="1" fill="#000000"/></svg><svg class="a" style="left:282px;top:51px" width="13" height="14" shape-rendering="crispEdges"><rect x="0" y="0" width="10" height="1" fill="#000000"/><rect x="0" y="1" width="1" height="1" fill="#000000"/><rect x="1" y="1" width="7" height="1" fill="#ffffff"/><rect x="8" y="1" width="1" height="1" fill="#000000"/><rect x="9" y="1" width="1" height="1" fill="#ffffff"/><rect x="10" y="1" width="1" height="1" fill="#000000"/><rect x="0" y="2" width="1" height="1" fill="#000000"/><rect x="1" y="2" width="1" height="1" fill="#ffffff"/><rect x="2" y="2" width="1" height="1" fill="#000000"/><rect x="3" y="2" width="3" height="1" fill="#ffffff"/><rect x="6" y="2" width="1" height="1" fill="#000000"/><rect x="7" y="2" width="1" height="1" fill="#ffffff"/><rect x="8" y="2" width="1" height="1" fill="#000000"/><rect x="9" y="2" width="2" height="1" fill="#ffffff"/><rect x="11" y="2" width="1" height="1" fill="#000000"/><rect x="0" y="3" width="2" height="1" fill="#000000"/><rect x="2" y="3" width="1" height="1" fill="#ffff00"/><rect x="3" y="3" width="1" height="1" fill="#000000"/><rect x="4" y="3" width="2" height="1" fill="#ffffff"/><rect x="6" y="3" width="1" height="1" fill="#000000"/><rect x="7" y="3" width="1" height="1" fill="#ffffff"/><rect x="8" y="3" width="5" height="1" fill="#000000"/><rect x="0" y="4" width="2" height="1" fill="#000000"/><rect x="2" y="4" width="1" height="1" fill="#ffff00"/><rect x="3" y="4" width="1" height="1" fill="#000000"/><rect x="4" y="4" width="1" height="1" fill="#ffffff"/><rect x="5" y="4" width="1" height="1" fill="#000000"/><rect x="6" y="4" width="1" height="1" fill="#ffff00"/><rect x="7" y="4" width="1" height="1" fill="#000000"/><rect x="8" y="4" width="1" height="1" fill="#ffffff"/><rect x="9" y="4" width="1" height="1" fill="#000000"/><rect x="10" y="4" width="1" height="1" fill="#ffffff"/><rect x="11" y="4" width="2" height="1" fill="#000000"/><rect x="0" y="5" width="2" height="1" fill="#000000"/><rect x="2" y="5" width="1" height="1" fill="#ffff00"/><rect x="3" y="5" width="3" height="1" fill="#000000"/><rect x="6" y="5" width="1" height="1" fill="#ffff00"/><rect x="7" y="5" width="1" height="1" fill="#000000"/><rect x="8" y="5" width="1" height="1" fill="#ffffff"/><rect x="9" y="5" width="1" height="1" fill="#000000"/><rect x="10" y="5" width="1" height="1" fill="#ffffff"/><rect x="11" y="5" width="2" height="1" fill="#000000"/><rect x="0" y="6" width="2" height="1" fill="#000000"/><rect x="2" y="6" width="1" height="1" fill="#ffff00"/><rect x="3" y="6" width="1" height="1" fill="#000000"/><rect x="4" y="6" width="1" height="1" fill="#ffffff"/><rect x="5" y="6" width="1" height="1" fill="#000000"/><rect x="6" y="6" width="1" height="1" fill="#ffff00"/><rect x="7" y="6" width="2" height="1" fill="#000000"/><rect x="9" y="6" width="1" height="1" fill="#ffff00"/><rect x="10" y="6" width="3" height="1" fill="#000000"/><rect x="0" y="7" width="2" height="1" fill="#000000"/><rect x="2" y="7" width="1" height="1" fill="#ffff00"/><rect x="3" y="7" width="1" height="1" fill="#000000"/><rect x="4" y="7" width="1" height="1" fill="#ffffff"/><rect x="5" y="7" width="1" height="1" fill="#000000"/><rect x="6" y="7" width="1" height="1" fill="#ffff00"/><rect x="7" y="7" width="1" height="1" fill="#000000"/><rect x="8" y="7" width="1" height="1" fill="#ffffff"/><rect x="9" y="7" width="1" height="1" fill="#ffff00"/><rect x="10" y="7" width="3" height="1" fill="#000000"/><rect x="0" y="8" width="2" height="1" fill="#000000"/><rect x="2" y="8" width="1" height="1" fill="#ffff00"/><rect x="3" y="8" width="1" height="1" fill="#000000"/><rect x="4" y="8" width="2" height="1" fill="#ffffff"/><rect x="6" y="8" width="1" height="1" fill="#000000"/><rect x="7" y="8" width="2" height="1" fill="#ffffff"/><rect x="9" y="8" width="1" height="1" fill="#000000"/><rect x="10" y="8" width="1" height="1" fill="#ffffff"/><rect x="11" y="8" width="2" height="1" fill="#000000"/><rect x="0" y="9" width="1" height="1" fill="#000000"/><rect x="1" y="9" width="1" height="1" fill="#ffffff"/><rect x="2" y="9" width="1" height="1" fill="#000000"/><rect x="3" y="9" width="3" height="1" fill="#ffffff"/><rect x="6" y="9" width="1" height="1" fill="#000000"/><rect x="7" y="9" width="2" height="1" fill="#ffffff"/><rect x="9" y="9" width="1" height="1" fill="#000000"/><rect x="10" y="9" width="1" height="1" fill="#ffffff"/><rect x="11" y="9" width="2" height="1" fill="#000000"/><rect x="0" y="10" width="1" height="1" fill="#000000"/><rect x="1" y="10" width="1" height="1" fill="#ffffff"/><rect x="2" y="10" width="1" height="1" fill="#000000"/><rect x="3" y="10" width="3" height="1" fill="#ffffff"/><rect x="6" y="10" width="1" height="1" fill="#000000"/><rect x="7" y="10" width="4" height="1" fill="#ffffff"/><rect x="11" y="10" width="2" height="1" fill="#000000"/><rect x="0" y="11" width="1" height="1" fill="#000000"/><rect x="1" y="11" width="10" height="1" fill="#ffffff"/><rect x="11" y="11" width="2" height="1" fill="#000000"/><rect x="0" y="12" width="13" height="1" fill="#000000"/><rect x="0" y="13" width="13" height="1" fill="#000000"/></svg><svg class="a" style="left:306px;top:51px" width="13" height="14" shape-rendering="crispEdges"><rect x="0" y="0" width="10" height="1" fill="#000000"/><rect x="0" y="1" width="1" height="1" fill="#000000"/><rect x="1" y="1" width="7" height="1" fill="#ffffff"/><rect x="8" y="1" width="1" height="1" fill="#000000"/><rect x="9" y="1" width="1" height="1" fill="#ffffff"/><rect x="10" y="1" width="1" height="1" fill="#000000"/><rect x="0" y="2" width="1" height="1" fill="#000000"/><rect x="1" y="2" width="7" height="1" fill="#ffffff"/><rect x="8" y="2" width="1" height="1" fill="#000000"/><rect x="9" y="2" width="2" height="1" fill="#ffffff"/><rect x="11" y="2" width="1" height="1" fill="#000000"/><rect x="0" y="3" width="1" height="1" fill="#000000"/><rect x="1" y="3" width="3" height="1" fill="#ffffff"/><rect x="4" y="3" width="9" height="1" fill="#000000"/><rect x="0" y="4" width="1" height="1" fill="#000000"/><rect x="1" y="4" width="1" height="1" fill="#ffffff"/><rect x="2" y="4" width="3" height="1" fill="#000000"/><rect x="5" y="4" width="4" height="1" fill="#ffff00"/><rect x="9" y="4" width="1" height="1" fill="#000000"/><rect x="10" y="4" width="1" height="1" fill="#ffffff"/><rect x="11" y="4" width="2" height="1" fill="#000000"/><rect x="0" y="5" width="1" height="1" fill="#000000"/><rect x="1" y="5" width="2" height="1" fill="#ffffff"/><rect x="3" y="5" width="2" height="1" fill="#000000"/><rect x="5" y="5" width="4" height="1" fill="#ffff00"/><rect x="9" y="5" width="1" height="1" fill="#000000"/><rect x="10" y="5" width="1" height="1" fill="#ffffff"/><rect x="11" y="5" width="2" height="1" fill="#000000"/><rect x="0" y="6" width="1" height="1" fill="#000000"/><rect x="1" y="6" width="3" height="1" fill="#ffffff"/><rect x="4" y="6" width="1" height="1" fill="#000000"/><rect x="5" y="6" width="4" height="1" fill="#ffff00"/><rect x="9" y="6" width="1" height="1" fill="#000000"/><rect x="10" y="6" width="1" height="1" fill="#ffffff"/><rect x="11" y="6" width="2" height="1" fill="#000000"/><rect x="0" y="7" width="1" height="1" fill="#000000"/><rect x="1" y="7" width="1" height="1" fill="#ffffff"/><rect x="2" y="7" width="3" height="1" fill="#000000"/><rect x="5" y="7" width="4" height="1" fill="#ffff00"/><rect x="9" y="7" width="1" height="1" fill="#000000"/><rect x="10" y="7" width="1" height="1" fill="#ffffff"/><rect x="11" y="7" width="2" height="1" fill="#000000"/><rect x="0" y="8" width="1" height="1" fill="#000000"/><rect x="1" y="8" width="2" height="1" fill="#ffffff"/><rect x="3" y="8" width="2" height="1" fill="#000000"/><rect x="5" y="8" width="4" height="1" fill="#ffff00"/><rect x="9" y="8" width="1" height="1" fill="#000000"/><rect x="10" y="8" width="1" height="1" fill="#ffffff"/><rect x="11" y="8" width="2" height="1" fill="#000000"/><rect x="0" y="9" width="1" height="1" fill="#000000"/><rect x="1" y="9" width="3" height="1" fill="#ffffff"/><rect x="4" y="9" width="1" height="1" fill="#000000"/><rect x="5" y="9" width="4" height="1" fill="#ffff00"/><rect x="9" y="9" width="1" height="1" fill="#000000"/><rect x="10" y="9" width="1" height="1" fill="#ffffff"/><rect x="11" y="9" width="2" height="1" fill="#000000"/><rect x="0" y="10" width="1" height="1" fill="#000000"/><rect x="1" y="10" width="3" height="1" fill="#ffffff"/><rect x="4" y="10" width="6" height="1" fill="#000000"/><rect x="10" y="10" width="1" height="1" fill="#ffffff"/><rect x="11" y="10" width="2" height="1" fill="#000000"/><rect x="0" y="11" width="1" height="1" fill="#000000"/><rect x="1" y="11" width="10" height="1" fill="#ffffff"/><rect x="11" y="11" width="2" height="1" fill="#000000"/><rect x="0" y="12" width="13" height="1" fill="#000000"/><rect x="0" y="13" width="13" height="1" fill="#000000"/></svg><svg class="a" style="left:330px;top:51px" width="13" height="14" shape-rendering="crispEdges"><rect x="0" y="0" width="10" height="1" fill="#000000"/><rect x="0" y="1" width="1" height="1" fill="#000000"/><rect x="1" y="1" width="7" height="1" fill="#ffffff"/><rect x="8" y="1" width="1" height="1" fill="#000000"/><rect x="9" y="1" width="1" height="1" fill="#ffffff"/><rect x="10" y="1" width="1" height="1" fill="#000000"/><rect x="0" y="2" width="1" height="1" fill="#000000"/><rect x="1" y="2" width="1" height="1" fill="#ffffff"/><rect x="2" y="2" width="4" height="1" fill="#000000"/><rect x="6" y="2" width="2" height="1" fill="#ffffff"/><rect x="8" y="2" width="1" height="1" fill="#000000"/><rect x="9" y="2" width="2" height="1" fill="#ffffff"/><rect x="11" y="2" width="1" height="1" fill="#000000"/><rect x="0" y="3" width="2" height="1" fill="#000000"/><rect x="2" y="3" width="4" height="1" fill="#ffff00"/><rect x="6" y="3" width="1" height="1" fill="#000000"/><rect x="7" y="3" width="1" height="1" fill="#ffffff"/><rect x="8" y="3" width="5" height="1" fill="#000000"/><rect x="0" y="4" width="7" height="1" fill="#000000"/><rect x="7" y="4" width="4" height="1" fill="#ffffff"/><rect x="11" y="4" width="2" height="1" fill="#000000"/><rect x="0" y="5" width="1" height="1" fill="#000000"/><rect x="1" y="5" width="1" height="1" fill="#ffffff"/><rect x="2" y="5" width="4" height="1" fill="#000000"/><rect x="6" y="5" width="5" height="1" fill="#ffffff"/><rect x="11" y="5" width="2" height="1" fill="#000000"/><rect x="0" y="6" width="1" height="1" fill="#000000"/><rect x="1" y="6" width="3" height="1" fill="#ffffff"/><rect x="4" y="6" width="5" height="1" fill="#000000"/><rect x="9" y="6" width="2" height="1" fill="#ffffff"/><rect x="11" y="6" width="2" height="1" fill="#000000"/><rect x="0" y="7" width="1" height="1" fill="#000000"/><rect x="1" y="7" width="2" height="1" fill="#ffffff"/><rect x="3" y="7" width="1" height="1" fill="#000000"/><rect x="4" y="7" width="5" height="1" fill="#ffff00"/><rect x="9" y="7" width="1" height="1" fill="#000000"/><rect x="10" y="7" width="1" height="1" fill="#ffffff"/><rect x="11" y="7" width="2" height="1" fill="#000000"/><rect x="0" y="8" width="1" height="1" fill="#000000"/><rect x="1" y="8" width="2" height="1" fill="#ffffff"/><rect x="3" y="8" width="1" height="1" fill="#000000"/><rect x="4" y="8" width="5" height="1" fill="#ffff00"/><rect x="9" y="8" width="1" height="1" fill="#000000"/><rect x="10" y="8" width="1" height="1" fill="#ffffff"/><rect x="11" y="8" width="2" height="1" fill="#000000"/><rect x="0" y="9" width="1" height="1" fill="#000000"/><rect x="1" y="9" width="2" height="1" fill="#ffffff"/><rect x="3" y="9" width="1" height="1" fill="#000000"/><rect x="4" y="9" width="5" height="1" fill="#ffff00"/><rect x="9" y="9" width="1" height="1" fill="#000000"/><rect x="10" y="9" width="1" height="1" fill="#ffffff"/><rect x="11" y="9" width="2" height="1" fill="#000000"/><rect x="0" y="10" width="1" height="1" fill="#000000"/><rect x="1" y="10" width="3" height="1" fill="#ffffff"/><rect x="4" y="10" width="5" height="1" fill="#000000"/><rect x="9" y="10" width="2" height="1" fill="#ffffff"/><rect x="11" y="10" width="2" height="1" fill="#000000"/><rect x="0" y="11" width="1" height="1" fill="#000000"/><rect x="1" y="11" width="10" height="1" fill="#ffffff"/><rect x="11" y="11" width="2" height="1" fill="#000000"/><rect x="0" y="12" width="13" height="1" fill="#000000"/><rect x="0" y="13" width="13" height="1" fill="#000000"/></svg><svg class="a" style="left:354px;top:51px" width="13" height="14" shape-rendering="crispEdges"><rect x="0" y="0" width="10" height="1" fill="#000000"/><rect x="0" y="1" width="1" height="1" fill="#000000"/><rect x="1" y="1" width="7" height="1" fill="#ffffff"/><rect x="8" y="1" width="1" height="1" fill="#000000"/><rect x="9" y="1" width="1" height="1" fill="#ffffff"/><rect x="10" y="1" width="1" height="1" fill="#000000"/><rect x="0" y="2" width="1" height="1" fill="#000000"/><rect x="1" y="2" width="2" height="1" fill="#ffffff"/><rect x="3" y="2" width="6" height="1" fill="#000000"/><rect x="9" y="2" width="2" height="1" fill="#ffffff"/><rect x="11" y="2" width="1" height="1" fill="#000000"/><rect x="0" y="3" width="1" height="1" fill="#000000"/><rect x="1" y="3" width="1" height="1" fill="#ffffff"/><rect x="2" y="3" width="1" height="1" fill="#000000"/><rect x="3" y="3" width="4" height="1" fill="#ffff00"/><rect x="7" y="3" width="6" height="1" fill="#000000"/><rect x="0" y="4" width="7" height="1" fill="#000000"/><rect x="7" y="4" width="1" height="1" fill="#ffff00"/><rect x="8" y="4" width="1" height="1" fill="#000000"/><rect x="9" y="4" width="2" height="1" fill="#ffffff"/><rect x="11" y="4" width="2" height="1" fill="#000000"/><rect x="0" y="5" width="2" height="1" fill="#000000"/><rect x="2" y="5" width="4" height="1" fill="#ffff00"/><rect x="6" y="5" width="1" height="1" fill="#000000"/><rect x="7" y="5" width="1" height="1" fill="#ffff00"/><rect x="8" y="5" width="1" height="1" fill="#000000"/><rect x="9" y="5" width="2" height="1" fill="#ffffff"/><rect x="11" y="5" width="2" height="1" fill="#000000"/><rect x="0" y="6" width="2" height="1" fill="#000000"/><rect x="2" y="6" width="4" height="1" fill="#ffff00"/><rect x="6" y="6" width="1" height="1" fill="#000000"/><rect x="7" y="6" width="1" height="1" fill="#ffff00"/><rect x="8" y="6" width="1" height="1" fill="#000000"/><rect x="9" y="6" width="2" height="1" fill="#ffffff"/><rect x="11" y="6" width="2" height="1" fill="#000000"/><rect x="0" y="7" width="2" height="1" fill="#000000"/><rect x="2" y="7" width="4" height="1" fill="#ffff00"/><rect x="6" y="7" width="1" height="1" fill="#000000"/><rect x="7" y="7" width="1" height="1" fill="#ffff00"/><rect x="8" y="7" width="1" height="1" fill="#000000"/><rect x="9" y="7" width="2" height="1" fill="#ffffff"/><rect x="11" y="7" width="2" height="1" fill="#000000"/><rect x="0" y="8" width="2" height="1" fill="#000000"/><rect x="2" y="8" width="4" height="1" fill="#ffff00"/><rect x="6" y="8" width="2" height="1" fill="#000000"/><rect x="8" y="8" width="3" height="1" fill="#ffffff"/><rect x="11" y="8" width="2" height="1" fill="#000000"/><rect x="0" y="9" width="7" height="1" fill="#000000"/><rect x="7" y="9" width="4" height="1" fill="#ffffff"/><rect x="11" y="9" width="2" height="1" fill="#000000"/><rect x="0" y="10" width="1" height="1" fill="#000000"/><rect x="1" y="10" width="10" height="1" fill="#ffffff"/><rect x="11" y="10" width="2" height="1" fill="#000000"/><rect x="0" y="11" width="1" height="1" fill="#000000"/><rect x="1" y="11" width="10" height="1" fill="#ffffff"/><rect x="11" y="11" width="2" height="1" fill="#000000"/><rect x="0" y="12" width="13" height="1" fill="#000000"/><rect x="0" y="13" width="13" height="1" fill="#000000"/></svg><svg class="a" style="left:386px;top:52px" width="14" height="12" shape-rendering="crispEdges"><rect x="0" y="0" width="14" height="1" fill="#000080"/><rect x="0" y="1" width="1" height="1" fill="#000080"/><rect x="1" y="1" width="1" height="1" fill="#00ff00"/><rect x="2" y="1" width="12" height="1" fill="#000080"/><rect x="0" y="2" width="1" height="1" fill="#000000"/><rect x="1" y="2" width="12" height="1" fill="#ffffff"/><rect x="13" y="2" width="1" height="1" fill="#000000"/><rect x="0" y="3" width="1" height="1" fill="#000000"/><rect x="1" y="3" width="1" height="1" fill="#ffffff"/><rect x="2" y="3" width="10" height="1" fill="#c0c0c0"/><rect x="12" y="3" width="1" height="1" fill="#ffffff"/><rect x="13" y="3" width="1" height="1" fill="#000000"/><rect x="0" y="4" width="1" height="1" fill="#000000"/><rect x="1" y="4" width="5" height="1" fill="#ffffff"/><rect x="6" y="4" width="2" height="1" fill="#000000"/><rect x="8" y="4" width="5" height="1" fill="#ffffff"/><rect x="13" y="4" width="1" height="1" fill="#000000"/><rect x="0" y="5" width="1" height="1" fill="#000000"/><rect x="1" y="5" width="4" height="1" fill="#ffffff"/><rect x="5" y="5" width="1" height="1" fill="#000000"/><rect x="6" y="5" width="2" height="1" fill="#00ffff"/><rect x="8" y="5" width="1" height="1" fill="#000000"/><rect x="9" y="5" width="4" height="1" fill="#ffffff"/><rect x="13" y="5" width="1" height="1" fill="#000000"/><rect x="0" y="6" width="1" height="1" fill="#000000"/><rect x="1" y="6" width="3" height="1" fill="#ffffff"/><rect x="4" y="6" width="1" height="1" fill="#000000"/><rect x="5" y="6" width="4" height="1" fill="#00ffff"/><rect x="9" y="6" width="1" height="1" fill="#000000"/><rect x="10" y="6" width="3" height="1" fill="#ffffff"/><rect x="13" y="6" width="1" height="1" fill="#000000"/><rect x="0" y="7" width="1" height="1" fill="#000000"/><rect x="1" y="7" width="2" height="1" fill="#ffffff"/><rect x="3" y="7" width="1" height="1" fill="#000000"/><rect x="4" y="7" width="6" height="1" fill="#00ffff"/><rect x="10" y="7" width="1" height="1" fill="#000000"/><rect x="11" y="7" width="2" height="1" fill="#ffffff"/><rect x="13" y="7" width="1" height="1" fill="#000000"/><rect x="0" y="8" width="1" height="1" fill="#000000"/><rect x="1" y="8" width="2" height="1" fill="#ffffff"/><rect x="3" y="8" width="3" height="1" fill="#000000"/><rect x="6" y="8" width="2" height="1" fill="#00ffff"/><rect x="8" y="8" width="3" height="1" fill="#000000"/><rect x="11" y="8" width="2" height="1" fill="#ffffff"/><rect x="13" y="8" width="1" height="1" fill="#000000"/><rect x="0" y="9" width="1" height="1" fill="#000000"/><rect x="1" y="9" width="4" height="1" fill="#ffffff"/><rect x="5" y="9" width="1" height="1" fill="#000000"/><rect x="6" y="9" width="2" height="1" fill="#00ffff"/><rect x="8" y="9" width="1" height="1" fill="#000000"/><rect x="9" y="9" width="4" height="1" fill="#ffffff"/><rect x="13" y="9" width="1" height="1" fill="#000000"/><rect x="0" y="10" width="6" height="1" fill="#000000"/><rect x="6" y="10" width="2" height="1" fill="#00ffff"/><rect x="8" y="10" width="6" height="1" fill="#000000"/><rect x="5" y="11" width="4" height="1" fill="#000000"/></svg><svg class="a" style="left:410px;top:53px" width="13" height="9" shape-rendering="crispEdges"><rect x="3" y="0" width="2" height="1" fill="#a0a0a0"/><rect x="2" y="1" width="3" height="1" fill="#a0a0a0"/><rect x="1" y="2" width="12" height="1" fill="#a0a0a0"/><rect x="0" y="3" width="13" height="1" fill="#a0a0a0"/><rect x="0" y="4" width="13" height="1" fill="#a0a0a0"/><rect x="1" y="5" width="12" height="1" fill="#a0a0a0"/><rect x="2" y="6" width="3" height="1" fill="#a0a0a0"/><rect x="3" y="7" width="2" height="1" fill="#a0a0a0"/><rect x="4" y="8" width="1" height="1" fill="#a0a0a0"/></svg><svg class="a" style="left:442px;top:51px" width="16" height="14" shape-rendering="crispEdges"><rect x="3" y="0" width="5" height="1" fill="#a0a0a0"/><rect x="1" y="1" width="2" height="1" fill="#a0a0a0"/><rect x="8" y="1" width="2" height="1" fill="#a0a0a0"/><rect x="1" y="2" width="1" height="1" fill="#a0a0a0"/><rect x="5" y="2" width="1" height="1" fill="#a0a0a0"/><rect x="9" y="2" width="1" height="1" fill="#a0a0a0"/><rect x="0" y="3" width="1" height="1" fill="#a0a0a0"/><rect x="5" y="3" width="1" height="1" fill="#a0a0a0"/><rect x="10" y="3" width="1" height="1" fill="#a0a0a0"/><rect x="0" y="4" width="1" height="1" fill="#a0a0a0"/><rect x="3" y="4" width="5" height="1" fill="#a0a0a0"/><rect x="10" y="4" width="1" height="1" fill="#a0a0a0"/><rect x="0" y="5" width="1" height="1" fill="#a0a0a0"/><rect x="5" y="5" width="1" height="1" fill="#a0a0a0"/><rect x="10" y="5" width="1" height="1" fill="#a0a0a0"/><rect x="1" y="6" width="1" height="1" fill="#a0a0a0"/><rect x="5" y="6" width="1" height="1" fill="#a0a0a0"/><rect x="9" y="6" width="1" height="1" fill="#a0a0a0"/><rect x="1" y="7" width="2" height="1" fill="#a0a0a0"/><rect x="8" y="7" width="3" height="1" fill="#a0a0a0"/><rect x="3" y="8" width="5" height="1" fill="#a0a0a0"/><rect x="9" y="8" width="1" height="1" fill="#a0a0a0"/><rect x="10" y="8" width="1" height="1" fill="#ffffff"/><rect x="11" y="8" width="1" height="1" fill="#a0a0a0"/><rect x="9" y="9" width="1" height="1" fill="#a0a0a0"/><rect x="10" y="9" width="2" height="1" fill="#ffffff"/><rect x="12" y="9" width="1" height="1" fill="#a0a0a0"/><rect x="10" y="10" width="1" height="1" fill="#a0a0a0"/><rect x="11" y="10" width="2" height="1" fill="#ffffff"/><rect x="13" y="10" width="1" height="1" fill="#a0a0a0"/><rect x="11" y="11" width="1" height="1" fill="#a0a0a0"/><rect x="12" y="11" width="2" height="1" fill="#ffffff"/><rect x="14" y="11" width="1" height="1" fill="#a0a0a0"/><rect x="12" y="12" width="3" height="1" fill="#a0a0a0"/><rect x="13" y="13" width="1" height="1" fill="#a0a0a0"/></svg><svg class="a" style="left:465px;top:51px" width="16" height="14" shape-rendering="crispEdges"><rect x="3" y="0" width="5" height="1" fill="#000000"/><rect x="1" y="1" width="2" height="1" fill="#000000"/><rect x="8" y="1" width="2" height="1" fill="#000000"/><rect x="1" y="2" width="1" height="1" fill="#000000"/><rect x="9" y="2" width="1" height="1" fill="#000000"/><rect x="0" y="3" width="1" height="1" fill="#000000"/><rect x="10" y="3" width="1" height="1" fill="#000000"/><rect x="0" y="4" width="1" height="1" fill="#000000"/><rect x="2" y="4" width="6" height="1" fill="#000000"/><rect x="10" y="4" width="1" height="1" fill="#000000"/><rect x="0" y="5" width="1" height="1" fill="#000000"/><rect x="10" y="5" width="1" height="1" fill="#000000"/><rect x="1" y="6" width="1" height="1" fill="#000000"/><rect x="9" y="6" width="1" height="1" fill="#000000"/><rect x="1" y="7" width="2" height="1" fill="#000000"/><rect x="8" y="7" width="3" height="1" fill="#000000"/><rect x="3" y="8" width="5" height="1" fill="#000000"/><rect x="9" y="8" width="1" height="1" fill="#000000"/><rect x="10" y="8" width="1" height="1" fill="#ffffff"/><rect x="11" y="8" width="1" height="1" fill="#000000"/><rect x="9" y="9" width="1" height="1" fill="#000000"/><rect x="10" y="9" width="2" height="1" fill="#ffffff"/><rect x="12" y="9" width="1" height="1" fill="#000000"/><rect x="10" y="10" width="1" height="1" fill="#000000"/><rect x="11" y="10" width="2" height="1" fill="#ffffff"/><rect x="13" y="10" width="1" height="1" fill="#000000"/><rect x="11" y="11" width="1" height="1" fill="#000000"/><rect x="12" y="11" width="2" height="1" fill="#ffffff"/><rect x="14" y="11" width="1" height="1" fill="#000000"/><rect x="12" y="12" width="3" height="1" fill="#000000"/><rect x="13" y="13" width="1" height="1" fill="#000000"/></svg><svg class="a" style="left:490px;top:51px" width="15" height="13" shape-rendering="crispEdges"><rect x="0" y="0" width="15" height="1" fill="#000080"/><rect x="0" y="1" width="1" height="1" fill="#000080"/><rect x="1" y="1" width="1" height="1" fill="#00ff00"/><rect x="2" y="1" width="13" height="1" fill="#000080"/><rect x="0" y="2" width="1" height="1" fill="#000000"/><rect x="1" y="2" width="2" height="1" fill="#ffffff"/><rect x="3" y="2" width="5" height="1" fill="#000000"/><rect x="8" y="2" width="6" height="1" fill="#ffffff"/><rect x="14" y="2" width="1" height="1" fill="#000000"/><rect x="0" y="3" width="1" height="1" fill="#000000"/><rect x="1" y="3" width="1" height="1" fill="#ffffff"/><rect x="2" y="3" width="1" height="1" fill="#000000"/><rect x="3" y="3" width="5" height="1" fill="#ffffff"/><rect x="8" y="3" width="1" height="1" fill="#000000"/><rect x="9" y="3" width="5" height="1" fill="#ffffff"/><rect x="14" y="3" width="1" height="1" fill="#000000"/><rect x="0" y="4" width="2" height="1" fill="#000000"/><rect x="2" y="4" width="7" height="1" fill="#ffffff"/><rect x="9" y="4" width="1" height="1" fill="#000000"/><rect x="10" y="4" width="4" height="1" fill="#ffffff"/><rect x="14" y="4" width="1" height="1" fill="#000000"/><rect x="0" y="5" width="2" height="1" fill="#000000"/><rect x="2" y="5" width="7" height="1" fill="#ffffff"/><rect x="9" y="5" width="1" height="1" fill="#000000"/><rect x="10" y="5" width="4" height="1" fill="#ffffff"/><rect x="14" y="5" width="1" height="1" fill="#000000"/><rect x="0" y="6" width="2" height="1" fill="#000000"/><rect x="2" y="6" width="7" height="1" fill="#ffffff"/><rect x="9" y="6" width="1" height="1" fill="#000000"/><rect x="10" y="6" width="4" height="1" fill="#ffffff"/><rect x="14" y="6" width="1" height="1" fill="#000000"/><rect x="0" y="7" width="2" height="1" fill="#000000"/><rect x="2" y="7" width="7" height="1" fill="#ffffff"/><rect x="9" y="7" width="1" height="1" fill="#000000"/><rect x="10" y="7" width="4" height="1" fill="#ffffff"/><rect x="14" y="7" width="1" height="1" fill="#000000"/><rect x="0" y="8" width="1" height="1" fill="#000000"/><rect x="1" y="8" width="1" height="1" fill="#ffffff"/><rect x="2" y="8" width="1" height="1" fill="#000000"/><rect x="3" y="8" width="5" height="1" fill="#ffffff"/><rect x="8" y="8" width="2" height="1" fill="#000000"/><rect x="10" y="8" width="4" height="1" fill="#ffffff"/><rect x="14" y="8" width="1" height="1" fill="#000000"/><rect x="0" y="9" width="1" height="1" fill="#000000"/><rect x="1" y="9" width="2" height="1" fill="#ffffff"/><rect x="3" y="9" width="6" height="1" fill="#000000"/><rect x="9" y="9" width="1" height="1" fill="#ffffff"/><rect x="10" y="9" width="1" height="1" fill="#000000"/><rect x="11" y="9" width="3" height="1" fill="#ffffff"/><rect x="14" y="9" width="1" height="1" fill="#000000"/><rect x="0" y="10" width="1" height="1" fill="#000000"/><rect x="1" y="10" width="8" height="1" fill="#ffffff"/><rect x="9" y="10" width="1" height="1" fill="#000000"/><rect x="10" y="10" width="2" height="1" fill="#ffffff"/><rect x="12" y="10" width="1" height="1" fill="#000000"/><rect x="13" y="10" width="1" height="1" fill="#ffffff"/><rect x="14" y="10" width="1" height="1" fill="#000000"/><rect x="0" y="11" width="11" height="1" fill="#000000"/><rect x="11" y="11" width="2" height="1" fill="#ffffff"/><rect x="13" y="11" width="2" height="1" fill="#000000"/><rect x="12" y="12" width="2" height="1" fill="#000000"/></svg><svg class="a" style="left:514px;top:51px" width="14" height="12" shape-rendering="crispEdges"><rect x="0" y="0" width="14" height="1" fill="#a0a0a0"/><rect x="0" y="1" width="1" height="1" fill="#a0a0a0"/><rect x="1" y="1" width="1" height="1" fill="#ffffff"/><rect x="2" y="1" width="6" height="1" fill="#a0a0a0"/><rect x="8" y="1" width="1" height="1" fill="#ffffff"/><rect x="9" y="1" width="5" height="1" fill="#a0a0a0"/><rect x="0" y="2" width="1" height="1" fill="#a0a0a0"/><rect x="1" y="2" width="2" height="1" fill="#ffffff"/><rect x="3" y="2" width="6" height="1" fill="#a0a0a0"/><rect x="9" y="2" width="4" height="1" fill="#ffffff"/><rect x="13" y="2" width="1" height="1" fill="#a0a0a0"/><rect x="0" y="3" width="1" height="1" fill="#a0a0a0"/><rect x="1" y="3" width="1" height="1" fill="#ffffff"/><rect x="2" y="3" width="1" height="1" fill="#a0a0a0"/><rect x="3" y="3" width="4" height="1" fill="#ffffff"/><rect x="7" y="3" width="3" height="1" fill="#a0a0a0"/><rect x="10" y="3" width="3" height="1" fill="#ffffff"/><rect x="13" y="3" width="1" height="1" fill="#a0a0a0"/><rect x="0" y="4" width="2" height="1" fill="#a0a0a0"/><rect x="2" y="4" width="6" height="1" fill="#ffffff"/><rect x="8" y="4" width="1" height="1" fill="#a0a0a0"/><rect x="9" y="4" width="4" height="1" fill="#ffffff"/><rect x="13" y="4" width="1" height="1" fill="#a0a0a0"/><rect x="0" y="5" width="2" height="1" fill="#a0a0a0"/><rect x="2" y="5" width="6" height="1" fill="#ffffff"/><rect x="8" y="5" width="1" height="1" fill="#a0a0a0"/><rect x="9" y="5" width="4" height="1" fill="#ffffff"/><rect x="13" y="5" width="1" height="1" fill="#a0a0a0"/><rect x="0" y="6" width="2" height="1" fill="#a0a0a0"/><rect x="2" y="6" width="6" height="1" fill="#ffffff"/><rect x="8" y="6" width="1" height="1" fill="#a0a0a0"/><rect x="9" y="6" width="4" height="1" fill="#ffffff"/><rect x="13" y="6" width="1" height="1" fill="#a0a0a0"/><rect x="0" y="7" width="1" height="1" fill="#a0a0a0"/><rect x="1" y="7" width="1" height="1" fill="#ffffff"/><rect x="2" y="7" width="1" height="1" fill="#a0a0a0"/><rect x="3" y="7" width="4" height="1" fill="#ffffff"/><rect x="7" y="7" width="1" height="1" fill="#a0a0a0"/><rect x="8" y="7" width="5" height="1" fill="#ffffff"/><rect x="13" y="7" width="1" height="1" fill="#a0a0a0"/><rect x="0" y="8" width="1" height="1" fill="#a0a0a0"/><rect x="1" y="8" width="2" height="1" fill="#ffffff"/><rect x="3" y="8" width="6" height="1" fill="#a0a0a0"/><rect x="9" y="8" width="4" height="1" fill="#ffffff"/><rect x="13" y="8" width="1" height="1" fill="#a0a0a0"/><rect x="0" y="9" width="1" height="1" fill="#a0a0a0"/><rect x="1" y="9" width="7" height="1" fill="#ffffff"/><rect x="8" y="9" width="1" height="1" fill="#a0a0a0"/><rect x="9" y="9" width="1" height="1" fill="#ffffff"/><rect x="10" y="9" width="1" height="1" fill="#a0a0a0"/><rect x="11" y="9" width="2" height="1" fill="#ffffff"/><rect x="13" y="9" width="1" height="1" fill="#a0a0a0"/><rect x="0" y="10" width="10" height="1" fill="#a0a0a0"/><rect x="10" y="10" width="1" height="1" fill="#ffffff"/><rect x="11" y="10" width="3" height="1" fill="#a0a0a0"/><rect x="11" y="11" width="2" height="1" fill="#a0a0a0"/></svg><div class="a" style="left:11px;top:83px;width:260px;height:528px;border-top:1px solid #a0a0a0;border-left:1px solid #a0a0a0;border-right:1px solid #fff;border-bottom:1px solid #fff"></div><div class="a" style="left:12px;top:84px;width:258px;height:526px;background:#fff;border-top:1px solid #696969;border-left:1px solid #696969;border-right:1px solid #e3e3e3;border-bottom:1px solid #e3e3e3"></div><div class="a" style="left:70px;top:133px;width:40px;height:16px;background:#f0f0f0"></div><div class="a" style="left:21px;top:102px;width:1px;height:15px;background:repeating-linear-gradient(180deg,#808080 0 1px,transparent 1px 2px)"></div><div class="a" style="left:22px;top:109px;width:10px;height:1px;background:repeating-linear-gradient(90deg,#808080 0 1px,transparent 1px 2px)"></div><div class="a" style="left:21px;top:118px;width:1px;height:15px;background:repeating-linear-gradient(180deg,#808080 0 1px,transparent 1px 2px)"></div><div class="a" style="left:22px;top:125px;width:10px;height:1px;background:repeating-linear-gradient(90deg,#808080 0 1px,transparent 1px 2px)"></div><div class="a" style="left:40px;top:133px;width:1px;height:16px;background:repeating-linear-gradient(180deg,#808080 0 1px,transparent 1px 2px)"></div><div class="a" style="left:42px;top:141px;width:9px;height:1px;background:repeating-linear-gradient(90deg,#808080 0 1px,transparent 1px 2px)"></div><div class="a" style="left:59px;top:150px;width:1px;height:15px;background:repeating-linear-gradient(180deg,#808080 0 1px,transparent 1px 2px)"></div><div class="a" style="left:60px;top:157px;width:10px;height:1px;background:repeating-linear-gradient(90deg,#808080 0 1px,transparent 1px 2px)"></div><div class="a" style="left:59px;top:166px;width:1px;height:15px;background:repeating-linear-gradient(180deg,#808080 0 1px,transparent 1px 2px)"></div><div class="a" style="left:60px;top:173px;width:10px;height:1px;background:repeating-linear-gradient(90deg,#808080 0 1px,transparent 1px 2px)"></div><div class="a" style="left:78px;top:181px;width:1px;height:16px;background:repeating-linear-gradient(180deg,#808080 0 1px,transparent 1px 2px)"></div><div class="a" style="left:80px;top:189px;width:9px;height:1px;background:repeating-linear-gradient(90deg,#808080 0 1px,transparent 1px 2px)"></div><div class="a" style="left:78px;top:197px;width:1px;height:16px;background:repeating-linear-gradient(180deg,#808080 0 1px,transparent 1px 2px)"></div><div class="a" style="left:80px;top:205px;width:10px;height:1px;background:repeating-linear-gradient(90deg,#808080 0 1px,transparent 1px 2px)"></div><div class="a" style="left:78px;top:213px;width:1px;height:16px;background:repeating-linear-gradient(180deg,#808080 0 1px,transparent 1px 2px)"></div><div class="a" style="left:80px;top:221px;width:10px;height:1px;background:repeating-linear-gradient(90deg,#808080 0 1px,transparent 1px 2px)"></div><div class="a" style="left:78px;top:229px;width:1px;height:9px;background:repeating-linear-gradient(180deg,#808080 0 1px,transparent 1px 2px)"></div><div class="a" style="left:80px;top:237px;width:10px;height:1px;background:repeating-linear-gradient(90deg,#808080 0 1px,transparent 1px 2px)"></div><div class="a" style="left:59px;top:246px;width:1px;height:15px;background:repeating-linear-gradient(180deg,#808080 0 1px,transparent 1px 2px)"></div><div class="a" style="left:60px;top:253px;width:10px;height:1px;background:repeating-linear-gradient(90deg,#808080 0 1px,transparent 1px 2px)"></div><div class="a" style="left:78px;top:261px;width:1px;height:16px;background:repeating-linear-gradient(180deg,#808080 0 1px,transparent 1px 2px)"></div><div class="a" style="left:80px;top:269px;width:9px;height:1px;background:repeating-linear-gradient(90deg,#808080 0 1px,transparent 1px 2px)"></div><div class="a" style="left:78px;top:277px;width:1px;height:16px;background:repeating-linear-gradient(180deg,#808080 0 1px,transparent 1px 2px)"></div><div class="a" style="left:80px;top:285px;width:10px;height:1px;background:repeating-linear-gradient(90deg,#808080 0 1px,transparent 1px 2px)"></div><div class="a" style="left:78px;top:293px;width:1px;height:16px;background:repeating-linear-gradient(180deg,#808080 0 1px,transparent 1px 2px)"></div><div class="a" style="left:80px;top:301px;width:10px;height:1px;background:repeating-linear-gradient(90deg,#808080 0 1px,transparent 1px 2px)"></div><div class="a" style="left:78px;top:309px;width:1px;height:9px;background:repeating-linear-gradient(180deg,#808080 0 1px,transparent 1px 2px)"></div><div class="a" style="left:80px;top:317px;width:10px;height:1px;background:repeating-linear-gradient(90deg,#808080 0 1px,transparent 1px 2px)"></div><div class="a" style="left:59px;top:326px;width:1px;height:8px;background:repeating-linear-gradient(180deg,#808080 0 1px,transparent 1px 2px)"></div><div class="a" style="left:60px;top:333px;width:10px;height:1px;background:repeating-linear-gradient(90deg,#808080 0 1px,transparent 1px 2px)"></div><div class="a" style="left:40px;top:341px;width:1px;height:16px;background:repeating-linear-gradient(180deg,#808080 0 1px,transparent 1px 2px)"></div><div class="a" style="left:42px;top:349px;width:9px;height:1px;background:repeating-linear-gradient(90deg,#808080 0 1px,transparent 1px 2px)"></div><div class="a" style="left:40px;top:357px;width:1px;height:16px;background:repeating-linear-gradient(180deg,#808080 0 1px,transparent 1px 2px)"></div><div class="a" style="left:42px;top:365px;width:9px;height:1px;background:repeating-linear-gradient(90deg,#808080 0 1px,transparent 1px 2px)"></div><div class="a" style="left:59px;top:374px;width:1px;height:15px;background:repeating-linear-gradient(180deg,#808080 0 1px,transparent 1px 2px)"></div><div class="a" style="left:60px;top:381px;width:10px;height:1px;background:repeating-linear-gradient(90deg,#808080 0 1px,transparent 1px 2px)"></div><div class="a" style="left:59px;top:390px;width:1px;height:8px;background:repeating-linear-gradient(180deg,#808080 0 1px,transparent 1px 2px)"></div><div class="a" style="left:60px;top:397px;width:10px;height:1px;background:repeating-linear-gradient(90deg,#808080 0 1px,transparent 1px 2px)"></div><div class="a" style="left:40px;top:405px;width:1px;height:16px;background:repeating-linear-gradient(180deg,#808080 0 1px,transparent 1px 2px)"></div><div class="a" style="left:42px;top:413px;width:9px;height:1px;background:repeating-linear-gradient(90deg,#808080 0 1px,transparent 1px 2px)"></div><div class="a" style="left:40px;top:421px;width:1px;height:9px;background:repeating-linear-gradient(180deg,#808080 0 1px,transparent 1px 2px)"></div><div class="a" style="left:42px;top:429px;width:9px;height:1px;background:repeating-linear-gradient(90deg,#808080 0 1px,transparent 1px 2px)"></div><div class="a" style="left:21px;top:438px;width:1px;height:15px;background:repeating-linear-gradient(180deg,#808080 0 1px,transparent 1px 2px)"></div><div class="a" style="left:22px;top:445px;width:10px;height:1px;background:repeating-linear-gradient(90deg,#808080 0 1px,transparent 1px 2px)"></div><div class="a" style="left:40px;top:453px;width:1px;height:16px;background:repeating-linear-gradient(180deg,#808080 0 1px,transparent 1px 2px)"></div><div class="a" style="left:42px;top:461px;width:9px;height:1px;background:repeating-linear-gradient(90deg,#808080 0 1px,transparent 1px 2px)"></div><div class="a" style="left:59px;top:470px;width:1px;height:8px;background:repeating-linear-gradient(180deg,#808080 0 1px,transparent 1px 2px)"></div><div class="a" style="left:60px;top:477px;width:10px;height:1px;background:repeating-linear-gradient(90deg,#808080 0 1px,transparent 1px 2px)"></div><div class="a" style="left:40px;top:485px;width:1px;height:9px;background:repeating-linear-gradient(180deg,#808080 0 1px,transparent 1px 2px)"></div><div class="a" style="left:42px;top:493px;width:9px;height:1px;background:repeating-linear-gradient(90deg,#808080 0 1px,transparent 1px 2px)"></div><div class="a" style="left:21px;top:502px;width:1px;height:15px;background:repeating-linear-gradient(180deg,#808080 0 1px,transparent 1px 2px)"></div><div class="a" style="left:22px;top:509px;width:10px;height:1px;background:repeating-linear-gradient(90deg,#808080 0 1px,transparent 1px 2px)"></div><div class="a" style="left:21px;top:518px;width:1px;height:8px;background:repeating-linear-gradient(180deg,#808080 0 1px,transparent 1px 2px)"></div><div class="a" style="left:22px;top:525px;width:10px;height:1px;background:repeating-linear-gradient(90deg,#808080 0 1px,transparent 1px 2px)"></div><div class="a" style="left:21px;top:134px;width:1px;height:303px;background:repeating-linear-gradient(180deg,#808080 0 1px,transparent 1px 2px)"></div><div class="a" style="left:40px;top:149px;width:1px;height:192px;background:repeating-linear-gradient(180deg,#808080 0 1px,transparent 1px 2px)"></div><div class="a" style="left:59px;top:182px;width:1px;height:63px;background:repeating-linear-gradient(180deg,#808080 0 1px,transparent 1px 2px)"></div><div class="a" style="left:59px;top:262px;width:1px;height:63px;background:repeating-linear-gradient(180deg,#808080 0 1px,transparent 1px 2px)"></div><div class="a" style="left:40px;top:373px;width:1px;height:32px;background:repeating-linear-gradient(180deg,#808080 0 1px,transparent 1px 2px)"></div><div class="a" style="left:21px;top:454px;width:1px;height:47px;background:repeating-linear-gradient(180deg,#808080 0 1px,transparent 1px 2px)"></div><div class="a" style="left:40px;top:469px;width:1px;height:16px;background:repeating-linear-gradient(180deg,#808080 0 1px,transparent 1px 2px)"></div><svg class="a" style="left:13px;top:86px" width="16" height="13" shape-rendering="crispEdges"><rect x="3" y="0" width="5" height="1" fill="#000000"/><rect x="2" y="1" width="1" height="1" fill="#000000"/><rect x="3" y="1" width="5" height="1" fill="#ffff00"/><rect x="8" y="1" width="1" height="1" fill="#000000"/><rect x="1" y="2" width="1" height="1" fill="#000000"/><rect x="2" y="2" width="7" height="1" fill="#ffff00"/><rect x="9" y="2" width="5" height="1" fill="#000000"/><rect x="0" y="3" width="1" height="1" fill="#000000"/><rect x="1" y="3" width="7" height="1" fill="#c0c0c0"/><rect x="8" y="3" width="1" height="1" fill="#800000"/><rect x="9" y="3" width="6" height="1" fill="#c0c0c0"/><rect x="15" y="3" width="1" height="1" fill="#000000"/><rect x="0" y="4" width="1" height="1" fill="#000000"/><rect x="1" y="4" width="6" height="1" fill="#ffff00"/><rect x="7" y="4" width="3" height="1" fill="#800000"/><rect x="10" y="4" width="4" height="1" fill="#ffff00"/><rect x="14" y="4" width="1" height="1" fill="#000000"/><rect x="0" y="5" width="6" height="1" fill="#000000"/><rect x="6" y="5" width="2" height="1" fill="#800000"/><rect x="8" y="5" width="1" height="1" fill="#ffffff"/><rect x="9" y="5" width="2" height="1" fill="#800000"/><rect x="11" y="5" width="3" height="1" fill="#ffff00"/><rect x="14" y="5" width="1" height="1" fill="#000000"/><rect x="0" y="6" width="1" height="1" fill="#000000"/><rect x="1" y="6" width="4" height="1" fill="#ffffff"/><rect x="5" y="6" width="1" height="1" fill="#000000"/><rect x="6" y="6" width="1" height="1" fill="#800000"/><rect x="7" y="6" width="2" height="1" fill="#ffffff"/><rect x="9" y="6" width="3" height="1" fill="#800000"/><rect x="12" y="6" width="2" height="1" fill="#ffff00"/><rect x="14" y="6" width="1" height="1" fill="#000000"/><rect x="0" y="7" width="1" height="1" fill="#000000"/><rect x="1" y="7" width="5" height="1" fill="#ffffff"/><rect x="6" y="7" width="1" height="1" fill="#000000"/><rect x="7" y="7" width="1" height="1" fill="#800000"/><rect x="8" y="7" width="2" height="1" fill="#ffffff"/><rect x="10" y="7" width="3" height="1" fill="#800000"/><rect x="13" y="7" width="1" height="1" fill="#ffff00"/><rect x="14" y="7" width="1" height="1" fill="#000000"/><rect x="0" y="8" width="1" height="1" fill="#000000"/><rect x="1" y="8" width="5" height="1" fill="#ffffff"/><rect x="6" y="8" width="1" height="1" fill="#000000"/><rect x="7" y="8" width="1" height="1" fill="#800000"/><rect x="8" y="8" width="1" height="1" fill="#ffffff"/><rect x="9" y="8" width="3" height="1" fill="#800000"/><rect x="12" y="8" width="2" height="1" fill="#ffff00"/><rect x="14" y="8" width="1" height="1" fill="#000000"/><rect x="0" y="9" width="1" height="1" fill="#000000"/><rect x="1" y="9" width="5" height="1" fill="#ffffff"/><rect x="6" y="9" width="1" height="1" fill="#000000"/><rect x="7" y="9" width="2" height="1" fill="#800000"/><rect x="9" y="9" width="1" height="1" fill="#ffffff"/><rect x="10" y="9" width="1" height="1" fill="#800000"/><rect x="11" y="9" width="3" height="1" fill="#ffff00"/><rect x="14" y="9" width="1" height="1" fill="#000000"/><rect x="0" y="10" width="1" height="1" fill="#000000"/><rect x="1" y="10" width="5" height="1" fill="#ffffff"/><rect x="6" y="10" width="1" height="1" fill="#000000"/><rect x="7" y="10" width="3" height="1" fill="#800000"/><rect x="10" y="10" width="4" height="1" fill="#ffff00"/><rect x="14" y="10" width="1" height="1" fill="#000000"/><rect x="0" y="11" width="1" height="1" fill="#000000"/><rect x="1" y="11" width="5" height="1" fill="#ffffff"/><rect x="6" y="11" width="1" height="1" fill="#000000"/><rect x="7" y="11" width="1" height="1" fill="#800000"/><rect x="8" y="11" width="7" height="1" fill="#000000"/><rect x="0" y="12" width="8" height="1" fill="#000000"/></svg><div class="t" style="left:34px;top:85px">cd 1 - n</div><div class="a" style="left:17px;top:105px;width:9px;height:9px;background:#fff;border:1px solid #8a8a8a"></div><div class="a" style="left:19px;top:109px;width:5px;height:1px;background:#000"></div><div class="a" style="left:21px;top:107px;width:1px;height:5px;background:#000"></div><svg class="a" style="left:33px;top:102px" width="15" height="13" shape-rendering="crispEdges"><rect x="3" y="0" width="5" height="1" fill="#000000"/><rect x="2" y="1" width="1" height="1" fill="#000000"/><rect x="3" y="1" width="5" height="1" fill="#ffff00"/><rect x="8" y="1" width="1" height="1" fill="#000000"/><rect x="1" y="2" width="1" height="1" fill="#000000"/><rect x="2" y="2" width="7" height="1" fill="#ffff00"/><rect x="9" y="2" width="5" height="1" fill="#000000"/><rect x="0" y="3" width="1" height="1" fill="#000000"/><rect x="1" y="3" width="13" height="1" fill="#c0c0c0"/><rect x="14" y="3" width="1" height="1" fill="#808080"/><rect x="0" y="4" width="1" height="1" fill="#000000"/><rect x="1" y="4" width="12" height="1" fill="#ffff00"/><rect x="13" y="4" width="1" height="1" fill="#000000"/><rect x="14" y="4" width="1" height="1" fill="#808080"/><rect x="0" y="5" width="1" height="1" fill="#000000"/><rect x="1" y="5" width="12" height="1" fill="#ffff00"/><rect x="13" y="5" width="1" height="1" fill="#000000"/><rect x="14" y="5" width="1" height="1" fill="#808080"/><rect x="0" y="6" width="1" height="1" fill="#000000"/><rect x="1" y="6" width="12" height="1" fill="#ffff00"/><rect x="13" y="6" width="1" height="1" fill="#000000"/><rect x="14" y="6" width="1" height="1" fill="#808080"/><rect x="0" y="7" width="1" height="1" fill="#000000"/><rect x="1" y="7" width="12" height="1" fill="#ffff00"/><rect x="13" y="7" width="1" height="1" fill="#000000"/><rect x="14" y="7" width="1" height="1" fill="#808080"/><rect x="0" y="8" width="1" height="1" fill="#000000"/><rect x="1" y="8" width="12" height="1" fill="#ffff00"/><rect x="13" y="8" width="1" height="1" fill="#000000"/><rect x="14" y="8" width="1" height="1" fill="#808080"/><rect x="0" y="9" width="1" height="1" fill="#000000"/><rect x="1" y="9" width="12" height="1" fill="#ffff00"/><rect x="13" y="9" width="1" height="1" fill="#000000"/><rect x="14" y="9" width="1" height="1" fill="#808080"/><rect x="0" y="10" width="1" height="1" fill="#000000"/><rect x="1" y="10" width="12" height="1" fill="#ffff00"/><rect x="13" y="10" width="1" height="1" fill="#000000"/><rect x="14" y="10" width="1" height="1" fill="#808080"/><rect x="0" y="11" width="14" height="1" fill="#000000"/><rect x="14" y="11" width="1" height="1" fill="#808080"/><rect x="1" y="12" width="14" height="1" fill="#808080"/></svg><div class="t" style="left:53px;top:101px">Use Case View</div><div class="a" style="left:17px;top:121px;width:9px;height:9px;background:#fff;border:1px solid #8a8a8a"></div><div class="a" style="left:19px;top:125px;width:5px;height:1px;background:#000"></div><svg class="a" style="left:33px;top:118px" width="15" height="13" shape-rendering="crispEdges"><rect x="3" y="0" width="5" height="1" fill="#000000"/><rect x="2" y="1" width="1" height="1" fill="#000000"/><rect x="3" y="1" width="5" height="1" fill="#ffff00"/><rect x="8" y="1" width="1" height="1" fill="#000000"/><rect x="1" y="2" width="1" height="1" fill="#000000"/><rect x="2" y="2" width="7" height="1" fill="#ffff00"/><rect x="9" y="2" width="5" height="1" fill="#000000"/><rect x="0" y="3" width="1" height="1" fill="#000000"/><rect x="1" y="3" width="13" height="1" fill="#c0c0c0"/><rect x="14" y="3" width="1" height="1" fill="#808080"/><rect x="0" y="4" width="1" height="1" fill="#000000"/><rect x="1" y="4" width="12" height="1" fill="#ffff00"/><rect x="13" y="4" width="1" height="1" fill="#000000"/><rect x="14" y="4" width="1" height="1" fill="#808080"/><rect x="0" y="5" width="1" height="1" fill="#000000"/><rect x="1" y="5" width="12" height="1" fill="#ffff00"/><rect x="13" y="5" width="1" height="1" fill="#000000"/><rect x="14" y="5" width="1" height="1" fill="#808080"/><rect x="0" y="6" width="1" height="1" fill="#000000"/><rect x="1" y="6" width="12" height="1" fill="#ffff00"/><rect x="13" y="6" width="1" height="1" fill="#000000"/><rect x="14" y="6" width="1" height="1" fill="#808080"/><rect x="0" y="7" width="1" height="1" fill="#000000"/><rect x="1" y="7" width="12" height="1" fill="#ffff00"/><rect x="13" y="7" width="1" height="1" fill="#000000"/><rect x="14" y="7" width="1" height="1" fill="#808080"/><rect x="0" y="8" width="1" height="1" fill="#000000"/><rect x="1" y="8" width="12" height="1" fill="#ffff00"/><rect x="13" y="8" width="1" height="1" fill="#000000"/><rect x="14" y="8" width="1" height="1" fill="#808080"/><rect x="0" y="9" width="1" height="1" fill="#000000"/><rect x="1" y="9" width="12" height="1" fill="#ffff00"/><rect x="13" y="9" width="1" height="1" fill="#000000"/><rect x="14" y="9" width="1" height="1" fill="#808080"/><rect x="0" y="10" width="1" height="1" fill="#000000"/><rect x="1" y="10" width="12" height="1" fill="#ffff00"/><rect x="13" y="10" width="1" height="1" fill="#000000"/><rect x="14" y="10" width="1" height="1" fill="#808080"/><rect x="0" y="11" width="14" height="1" fill="#000000"/><rect x="14" y="11" width="1" height="1" fill="#808080"/><rect x="1" y="12" width="14" height="1" fill="#808080"/></svg><div class="t" style="left:53px;top:117px">Logical View</div><div class="a" style="left:36px;top:137px;width:9px;height:9px;background:#fff;border:1px solid #8a8a8a"></div><div class="a" style="left:38px;top:141px;width:5px;height:1px;background:#000"></div><svg class="a" style="left:52px;top:134px" width="15" height="13" shape-rendering="crispEdges"><rect x="3" y="0" width="5" height="1" fill="#000000"/><rect x="2" y="1" width="1" height="1" fill="#000000"/><rect x="3" y="1" width="5" height="1" fill="#ffff00"/><rect x="8" y="1" width="1" height="1" fill="#000000"/><rect x="1" y="2" width="1" height="1" fill="#000000"/><rect x="2" y="2" width="7" height="1" fill="#ffff00"/><rect x="9" y="2" width="5" height="1" fill="#000000"/><rect x="0" y="3" width="1" height="1" fill="#000000"/><rect x="1" y="3" width="13" height="1" fill="#c0c0c0"/><rect x="14" y="3" width="1" height="1" fill="#808080"/><rect x="0" y="4" width="1" height="1" fill="#000000"/><rect x="1" y="4" width="12" height="1" fill="#ffff00"/><rect x="13" y="4" width="1" height="1" fill="#000000"/><rect x="14" y="4" width="1" height="1" fill="#808080"/><rect x="0" y="5" width="1" height="1" fill="#000000"/><rect x="1" y="5" width="12" height="1" fill="#ffff00"/><rect x="13" y="5" width="1" height="1" fill="#000000"/><rect x="14" y="5" width="1" height="1" fill="#808080"/><rect x="0" y="6" width="1" height="1" fill="#000000"/><rect x="1" y="6" width="12" height="1" fill="#ffff00"/><rect x="13" y="6" width="1" height="1" fill="#000000"/><rect x="14" y="6" width="1" height="1" fill="#808080"/><rect x="0" y="7" width="1" height="1" fill="#000000"/><rect x="1" y="7" width="12" height="1" fill="#ffff00"/><rect x="13" y="7" width="1" height="1" fill="#000000"/><rect x="14" y="7" width="1" height="1" fill="#808080"/><rect x="0" y="8" width="1" height="1" fill="#000000"/><rect x="1" y="8" width="12" height="1" fill="#ffff00"/><rect x="13" y="8" width="1" height="1" fill="#000000"/><rect x="14" y="8" width="1" height="1" fill="#808080"/><rect x="0" y="9" width="1" height="1" fill="#000000"/><rect x="1" y="9" width="12" height="1" fill="#ffff00"/><rect x="13" y="9" width="1" height="1" fill="#000000"/><rect x="14" y="9" width="1" height="1" fill="#808080"/><rect x="0" y="10" width="1" height="1" fill="#000000"/><rect x="1" y="10" width="12" height="1" fill="#ffff00"/><rect x="13" y="10" width="1" height="1" fill="#000000"/><rect x="14" y="10" width="1" height="1" fill="#808080"/><rect x="0" y="11" width="14" height="1" fill="#000000"/><rect x="14" y="11" width="1" height="1" fill="#808080"/><rect x="1" y="12" width="14" height="1" fill="#808080"/></svg><div class="t" style="left:72px;top:133px">cd 1 - n</div><svg class="a" style="left:72px;top:150px" width="13" height="14" shape-rendering="crispEdges"><rect x="0" y="0" width="10" height="1" fill="#808080"/><rect x="0" y="1" width="1" height="1" fill="#808080"/><rect x="1" y="1" width="8" height="1" fill="#ffffff"/><rect x="9" y="1" width="2" height="1" fill="#808080"/><rect x="0" y="2" width="1" height="1" fill="#808080"/><rect x="1" y="2" width="2" height="1" fill="#ffffff"/><rect x="3" y="2" width="6" height="1" fill="#000000"/><rect x="9" y="2" width="1" height="1" fill="#808080"/><rect x="10" y="2" width="1" height="1" fill="#ffffff"/><rect x="11" y="2" width="1" height="1" fill="#808080"/><rect x="0" y="3" width="1" height="1" fill="#808080"/><rect x="1" y="3" width="2" height="1" fill="#ffffff"/><rect x="3" y="3" width="1" height="1" fill="#000000"/><rect x="4" y="3" width="4" height="1" fill="#ffff00"/><rect x="8" y="3" width="1" height="1" fill="#000000"/><rect x="9" y="3" width="4" height="1" fill="#808080"/><rect x="0" y="4" width="1" height="1" fill="#808080"/><rect x="1" y="4" width="2" height="1" fill="#ffffff"/><rect x="3" y="4" width="6" height="1" fill="#000000"/><rect x="9" y="4" width="3" height="1" fill="#ffffff"/><rect x="12" y="4" width="1" height="1" fill="#808080"/><rect x="0" y="5" width="1" height="1" fill="#808080"/><rect x="1" y="5" width="2" height="1" fill="#ffffff"/><rect x="3" y="5" width="1" height="1" fill="#000000"/><rect x="4" y="5" width="4" height="1" fill="#ffff00"/><rect x="8" y="5" width="1" height="1" fill="#000000"/><rect x="9" y="5" width="3" height="1" fill="#ffffff"/><rect x="12" y="5" width="1" height="1" fill="#808080"/><rect x="0" y="6" width="1" height="1" fill="#808080"/><rect x="1" y="6" width="2" height="1" fill="#ffffff"/><rect x="3" y="6" width="1" height="1" fill="#000000"/><rect x="4" y="6" width="4" height="1" fill="#ffff00"/><rect x="8" y="6" width="1" height="1" fill="#000000"/><rect x="9" y="6" width="3" height="1" fill="#ffffff"/><rect x="12" y="6" width="1" height="1" fill="#808080"/><rect x="0" y="7" width="1" height="1" fill="#808080"/><rect x="1" y="7" width="2" height="1" fill="#ffffff"/><rect x="3" y="7" width="6" height="1" fill="#000000"/><rect x="9" y="7" width="3" height="1" fill="#ffffff"/><rect x="12" y="7" width="1" height="1" fill="#808080"/><rect x="0" y="8" width="1" height="1" fill="#808080"/><rect x="1" y="8" width="2" height="1" fill="#ffffff"/><rect x="3" y="8" width="1" height="1" fill="#000000"/><rect x="4" y="8" width="4" height="1" fill="#ffff00"/><rect x="8" y="8" width="1" height="1" fill="#000000"/><rect x="9" y="8" width="3" height="1" fill="#ffffff"/><rect x="12" y="8" width="1" height="1" fill="#808080"/><rect x="0" y="9" width="1" height="1" fill="#808080"/><rect x="1" y="9" width="2" height="1" fill="#ffffff"/><rect x="3" y="9" width="1" height="1" fill="#000000"/><rect x="4" y="9" width="4" height="1" fill="#ffff00"/><rect x="8" y="9" width="1" height="1" fill="#000000"/><rect x="9" y="9" width="3" height="1" fill="#ffffff"/><rect x="12" y="9" width="1" height="1" fill="#808080"/><rect x="0" y="10" width="1" height="1" fill="#808080"/><rect x="1" y="10" width="2" height="1" fill="#ffffff"/><rect x="3" y="10" width="6" height="1" fill="#000000"/><rect x="9" y="10" width="3" height="1" fill="#ffffff"/><rect x="12" y="10" width="1" height="1" fill="#808080"/><rect x="0" y="11" width="1" height="1" fill="#808080"/><rect x="1" y="11" width="11" height="1" fill="#ffffff"/><rect x="12" y="11" width="1" height="1" fill="#808080"/><rect x="0" y="12" width="1" height="1" fill="#808080"/><rect x="1" y="12" width="11" height="1" fill="#ffffff"/><rect x="12" y="12" width="1" height="1" fill="#808080"/><rect x="0" y="13" width="13" height="1" fill="#808080"/></svg><div class="t" style="left:91px;top:149px">cd 1 - n</div><div class="a" style="left:55px;top:169px;width:9px;height:9px;background:#fff;border:1px solid #8a8a8a"></div><div class="a" style="left:57px;top:173px;width:5px;height:1px;background:#000"></div><svg class="a" style="left:72px;top:166px" width="11" height="12" shape-rendering="crispEdges"><rect x="1" y="0" width="9" height="1" fill="#000000"/><rect x="0" y="1" width="1" height="1" fill="#000000"/><rect x="10" y="1" width="1" height="1" fill="#000000"/><rect x="0" y="2" width="11" height="1" fill="#000000"/><rect x="0" y="3" width="1" height="1" fill="#000000"/><rect x="10" y="3" width="1" height="1" fill="#000000"/><rect x="0" y="4" width="1" height="1" fill="#000000"/><rect x="2" y="4" width="7" height="1" fill="#808080"/><rect x="10" y="4" width="1" height="1" fill="#000000"/><rect x="0" y="5" width="1" height="1" fill="#000000"/><rect x="10" y="5" width="1" height="1" fill="#000000"/><rect x="0" y="6" width="11" height="1" fill="#000000"/><rect x="0" y="7" width="1" height="1" fill="#000000"/><rect x="10" y="7" width="1" height="1" fill="#000000"/><rect x="0" y="8" width="1" height="1" fill="#000000"/><rect x="3" y="8" width="5" height="1" fill="#808080"/><rect x="10" y="8" width="1" height="1" fill="#000000"/><rect x="0" y="9" width="1" height="1" fill="#000000"/><rect x="10" y="9" width="1" height="1" fill="#000000"/><rect x="0" y="10" width="1" height="1" fill="#000000"/><rect x="10" y="10" width="1" height="1" fill="#000000"/><rect x="0" y="11" width="11" height="1" fill="#000000"/></svg><div class="t" style="left:91px;top:165px">Nguoi</div><svg class="a" style="left:90px;top:183px" width="15" height="13" shape-rendering="crispEdges"><rect x="1" y="0" width="5" height="1" fill="#000000"/><rect x="0" y="1" width="1" height="1" fill="#000000"/><rect x="1" y="1" width="1" height="1" fill="#ffffff"/><rect x="2" y="1" width="4" height="1" fill="#ffff00"/><rect x="6" y="1" width="1" height="1" fill="#000000"/><rect x="0" y="2" width="1" height="1" fill="#000000"/><rect x="1" y="2" width="1" height="1" fill="#ffffff"/><rect x="2" y="2" width="1" height="1" fill="#ffff00"/><rect x="3" y="2" width="1" height="1" fill="#000000"/><rect x="4" y="2" width="2" height="1" fill="#ffff00"/><rect x="6" y="2" width="1" height="1" fill="#000000"/><rect x="0" y="3" width="1" height="1" fill="#000000"/><rect x="1" y="3" width="1" height="1" fill="#ffffff"/><rect x="2" y="3" width="4" height="1" fill="#ffff00"/><rect x="6" y="3" width="1" height="1" fill="#000000"/><rect x="11" y="3" width="1" height="1" fill="#0000ff"/><rect x="1" y="4" width="1" height="1" fill="#000000"/><rect x="2" y="4" width="3" height="1" fill="#ffff00"/><rect x="5" y="4" width="1" height="1" fill="#000000"/><rect x="10" y="4" width="1" height="1" fill="#0000ff"/><rect x="11" y="4" width="1" height="1" fill="#00ffff"/><rect x="12" y="4" width="1" height="1" fill="#0000ff"/><rect x="2" y="5" width="1" height="1" fill="#000000"/><rect x="3" y="5" width="1" height="1" fill="#ffff00"/><rect x="4" y="5" width="1" height="1" fill="#000000"/><rect x="9" y="5" width="1" height="1" fill="#0000ff"/><rect x="10" y="5" width="3" height="1" fill="#00ffff"/><rect x="13" y="5" width="1" height="1" fill="#0000ff"/><rect x="2" y="6" width="1" height="1" fill="#000000"/><rect x="3" y="6" width="1" height="1" fill="#ffff00"/><rect x="4" y="6" width="2" height="1" fill="#000000"/><rect x="8" y="6" width="1" height="1" fill="#0000ff"/><rect x="9" y="6" width="4" height="1" fill="#00ffff"/><rect x="13" y="6" width="2" height="1" fill="#0000ff"/><rect x="2" y="7" width="1" height="1" fill="#000000"/><rect x="3" y="7" width="2" height="1" fill="#ffff00"/><rect x="5" y="7" width="1" height="1" fill="#000000"/><rect x="7" y="7" width="1" height="1" fill="#0000ff"/><rect x="8" y="7" width="5" height="1" fill="#00ffff"/><rect x="13" y="7" width="1" height="1" fill="#0000ff"/><rect x="2" y="8" width="1" height="1" fill="#000000"/><rect x="3" y="8" width="1" height="1" fill="#ffff00"/><rect x="4" y="8" width="2" height="1" fill="#000000"/><rect x="6" y="8" width="1" height="1" fill="#0000ff"/><rect x="7" y="8" width="5" height="1" fill="#00ffff"/><rect x="12" y="8" width="2" height="1" fill="#0000ff"/><rect x="2" y="9" width="1" height="1" fill="#000000"/><rect x="3" y="9" width="2" height="1" fill="#ffff00"/><rect x="5" y="9" width="1" height="1" fill="#000000"/><rect x="6" y="9" width="2" height="1" fill="#0000ff"/><rect x="8" y="9" width="3" height="1" fill="#00ffff"/><rect x="11" y="9" width="2" height="1" fill="#0000ff"/><rect x="2" y="10" width="1" height="1" fill="#000000"/><rect x="3" y="10" width="1" height="1" fill="#ffff00"/><rect x="4" y="10" width="1" height="1" fill="#000000"/><rect x="7" y="10" width="2" height="1" fill="#0000ff"/><rect x="9" y="10" width="1" height="1" fill="#00ffff"/><rect x="10" y="10" width="2" height="1" fill="#0000ff"/><rect x="3" y="11" width="1" height="1" fill="#000000"/><rect x="8" y="11" width="3" height="1" fill="#0000ff"/><rect x="9" y="12" width="1" height="1" fill="#0000ff"/></svg><div class="t" style="left:110px;top:181px">manguoi</div><svg class="a" style="left:96px;top:202px" width="9" height="10" shape-rendering="crispEdges"><rect x="5" y="0" width="1" height="1" fill="#0000ff"/><rect x="4" y="1" width="1" height="1" fill="#0000ff"/><rect x="5" y="1" width="1" height="1" fill="#00ffff"/><rect x="6" y="1" width="1" height="1" fill="#0000ff"/><rect x="3" y="2" width="1" height="1" fill="#0000ff"/><rect x="4" y="2" width="3" height="1" fill="#00ffff"/><rect x="7" y="2" width="1" height="1" fill="#0000ff"/><rect x="2" y="3" width="1" height="1" fill="#0000ff"/><rect x="3" y="3" width="4" height="1" fill="#00ffff"/><rect x="7" y="3" width="2" height="1" fill="#0000ff"/><rect x="1" y="4" width="1" height="1" fill="#0000ff"/><rect x="2" y="4" width="5" height="1" fill="#00ffff"/><rect x="7" y="4" width="1" height="1" fill="#0000ff"/><rect x="0" y="5" width="1" height="1" fill="#0000ff"/><rect x="1" y="5" width="5" height="1" fill="#00ffff"/><rect x="6" y="5" width="2" height="1" fill="#0000ff"/><rect x="0" y="6" width="2" height="1" fill="#0000ff"/><rect x="2" y="6" width="3" height="1" fill="#00ffff"/><rect x="5" y="6" width="2" height="1" fill="#0000ff"/><rect x="1" y="7" width="2" height="1" fill="#0000ff"/><rect x="3" y="7" width="1" height="1" fill="#00ffff"/><rect x="4" y="7" width="2" height="1" fill="#0000ff"/><rect x="2" y="8" width="3" height="1" fill="#0000ff"/><rect x="3" y="9" width="1" height="1" fill="#0000ff"/></svg><div class="t" style="left:110px;top:197px">tennguoi</div><svg class="a" style="left:93px;top:213px" width="13" height="16" shape-rendering="crispEdges"><rect x="10" y="0" width="1" height="1" fill="#000000"/><rect x="11" y="1" width="1" height="1" fill="#000000"/><rect x="0" y="2" width="13" height="1" fill="#000000"/><rect x="11" y="3" width="1" height="1" fill="#000000"/><rect x="10" y="4" width="1" height="1" fill="#000000"/><rect x="5" y="6" width="1" height="1" fill="#0000ff"/><rect x="4" y="7" width="1" height="1" fill="#0000ff"/><rect x="5" y="7" width="1" height="1" fill="#00ffff"/><rect x="6" y="7" width="1" height="1" fill="#0000ff"/><rect x="3" y="8" width="1" height="1" fill="#0000ff"/><rect x="4" y="8" width="3" height="1" fill="#00ffff"/><rect x="7" y="8" width="1" height="1" fill="#0000ff"/><rect x="2" y="9" width="1" height="1" fill="#0000ff"/><rect x="3" y="9" width="4" height="1" fill="#00ffff"/><rect x="7" y="9" width="2" height="1" fill="#0000ff"/><rect x="1" y="10" width="1" height="1" fill="#0000ff"/><rect x="2" y="10" width="5" height="1" fill="#00ffff"/><rect x="7" y="10" width="1" height="1" fill="#0000ff"/><rect x="0" y="11" width="1" height="1" fill="#0000ff"/><rect x="1" y="11" width="5" height="1" fill="#00ffff"/><rect x="6" y="11" width="2" height="1" fill="#0000ff"/><rect x="0" y="12" width="2" height="1" fill="#0000ff"/><rect x="2" y="12" width="3" height="1" fill="#00ffff"/><rect x="5" y="12" width="2" height="1" fill="#0000ff"/><rect x="1" y="13" width="2" height="1" fill="#0000ff"/><rect x="3" y="13" width="1" height="1" fill="#00ffff"/><rect x="4" y="13" width="2" height="1" fill="#0000ff"/><rect x="2" y="14" width="3" height="1" fill="#0000ff"/><rect x="3" y="15" width="1" height="1" fill="#0000ff"/></svg><div class="t" style="left:110px;top:213px">theXe ( Xe )</div><svg class="a" style="left:93px;top:229px" width="13" height="16" shape-rendering="crispEdges"><rect x="10" y="0" width="1" height="1" fill="#000000"/><rect x="11" y="1" width="1" height="1" fill="#000000"/><rect x="0" y="2" width="13" height="1" fill="#000000"/><rect x="11" y="3" width="1" height="1" fill="#000000"/><rect x="10" y="4" width="1" height="1" fill="#000000"/><rect x="5" y="6" width="1" height="1" fill="#0000ff"/><rect x="4" y="7" width="1" height="1" fill="#0000ff"/><rect x="5" y="7" width="1" height="1" fill="#00ffff"/><rect x="6" y="7" width="1" height="1" fill="#0000ff"/><rect x="3" y="8" width="1" height="1" fill="#0000ff"/><rect x="4" y="8" width="3" height="1" fill="#00ffff"/><rect x="7" y="8" width="1" height="1" fill="#0000ff"/><rect x="2" y="9" width="1" height="1" fill="#0000ff"/><rect x="3" y="9" width="4" height="1" fill="#00ffff"/><rect x="7" y="9" width="2" height="1" fill="#0000ff"/><rect x="1" y="10" width="1" height="1" fill="#0000ff"/><rect x="2" y="10" width="5" height="1" fill="#00ffff"/><rect x="7" y="10" width="1" height="1" fill="#0000ff"/><rect x="0" y="11" width="1" height="1" fill="#0000ff"/><rect x="1" y="11" width="5" height="1" fill="#00ffff"/><rect x="6" y="11" width="2" height="1" fill="#0000ff"/><rect x="0" y="12" width="2" height="1" fill="#0000ff"/><rect x="2" y="12" width="3" height="1" fill="#00ffff"/><rect x="5" y="12" width="2" height="1" fill="#0000ff"/><rect x="1" y="13" width="2" height="1" fill="#0000ff"/><rect x="3" y="13" width="1" height="1" fill="#00ffff"/><rect x="4" y="13" width="2" height="1" fill="#0000ff"/><rect x="2" y="14" width="3" height="1" fill="#0000ff"/><rect x="3" y="15" width="1" height="1" fill="#0000ff"/></svg><div class="t" style="left:110px;top:229px">theXe ( Xe )</div><div class="a" style="left:55px;top:249px;width:9px;height:9px;background:#fff;border:1px solid #8a8a8a"></div><div class="a" style="left:57px;top:253px;width:5px;height:1px;background:#000"></div><svg class="a" style="left:72px;top:246px" width="11" height="12" shape-rendering="crispEdges"><rect x="1" y="0" width="9" height="1" fill="#000000"/><rect x="0" y="1" width="1" height="1" fill="#000000"/><rect x="10" y="1" width="1" height="1" fill="#000000"/><rect x="0" y="2" width="11" height="1" fill="#000000"/><rect x="0" y="3" width="1" height="1" fill="#000000"/><rect x="10" y="3" width="1" height="1" fill="#000000"/><rect x="0" y="4" width="1" height="1" fill="#000000"/><rect x="2" y="4" width="7" height="1" fill="#808080"/><rect x="10" y="4" width="1" height="1" fill="#000000"/><rect x="0" y="5" width="1" height="1" fill="#000000"/><rect x="10" y="5" width="1" height="1" fill="#000000"/><rect x="0" y="6" width="11" height="1" fill="#000000"/><rect x="0" y="7" width="1" height="1" fill="#000000"/><rect x="10" y="7" width="1" height="1" fill="#000000"/><rect x="0" y="8" width="1" height="1" fill="#000000"/><rect x="3" y="8" width="5" height="1" fill="#808080"/><rect x="10" y="8" width="1" height="1" fill="#000000"/><rect x="0" y="9" width="1" height="1" fill="#000000"/><rect x="10" y="9" width="1" height="1" fill="#000000"/><rect x="0" y="10" width="1" height="1" fill="#000000"/><rect x="10" y="10" width="1" height="1" fill="#000000"/><rect x="0" y="11" width="11" height="1" fill="#000000"/></svg><div class="t" style="left:91px;top:245px">Xe</div><svg class="a" style="left:90px;top:263px" width="15" height="13" shape-rendering="crispEdges"><rect x="1" y="0" width="5" height="1" fill="#000000"/><rect x="0" y="1" width="1" height="1" fill="#000000"/><rect x="1" y="1" width="1" height="1" fill="#ffffff"/><rect x="2" y="1" width="4" height="1" fill="#ffff00"/><rect x="6" y="1" width="1" height="1" fill="#000000"/><rect x="0" y="2" width="1" height="1" fill="#000000"/><rect x="1" y="2" width="1" height="1" fill="#ffffff"/><rect x="2" y="2" width="1" height="1" fill="#ffff00"/><rect x="3" y="2" width="1" height="1" fill="#000000"/><rect x="4" y="2" width="2" height="1" fill="#ffff00"/><rect x="6" y="2" width="1" height="1" fill="#000000"/><rect x="0" y="3" width="1" height="1" fill="#000000"/><rect x="1" y="3" width="1" height="1" fill="#ffffff"/><rect x="2" y="3" width="4" height="1" fill="#ffff00"/><rect x="6" y="3" width="1" height="1" fill="#000000"/><rect x="11" y="3" width="1" height="1" fill="#0000ff"/><rect x="1" y="4" width="1" height="1" fill="#000000"/><rect x="2" y="4" width="3" height="1" fill="#ffff00"/><rect x="5" y="4" width="1" height="1" fill="#000000"/><rect x="10" y="4" width="1" height="1" fill="#0000ff"/><rect x="11" y="4" width="1" height="1" fill="#00ffff"/><rect x="12" y="4" width="1" height="1" fill="#0000ff"/><rect x="2" y="5" width="1" height="1" fill="#000000"/><rect x="3" y="5" width="1" height="1" fill="#ffff00"/><rect x="4" y="5" width="1" height="1" fill="#000000"/><rect x="9" y="5" width="1" height="1" fill="#0000ff"/><rect x="10" y="5" width="3" height="1" fill="#00ffff"/><rect x="13" y="5" width="1" height="1" fill="#0000ff"/><rect x="2" y="6" width="1" height="1" fill="#000000"/><rect x="3" y="6" width="1" height="1" fill="#ffff00"/><rect x="4" y="6" width="2" height="1" fill="#000000"/><rect x="8" y="6" width="1" height="1" fill="#0000ff"/><rect x="9" y="6" width="4" height="1" fill="#00ffff"/><rect x="13" y="6" width="2" height="1" fill="#0000ff"/><rect x="2" y="7" width="1" height="1" fill="#000000"/><rect x="3" y="7" width="2" height="1" fill="#ffff00"/><rect x="5" y="7" width="1" height="1" fill="#000000"/><rect x="7" y="7" width="1" height="1" fill="#0000ff"/><rect x="8" y="7" width="5" height="1" fill="#00ffff"/><rect x="13" y="7" width="1" height="1" fill="#0000ff"/><rect x="2" y="8" width="1" height="1" fill="#000000"/><rect x="3" y="8" width="1" height="1" fill="#ffff00"/><rect x="4" y="8" width="2" height="1" fill="#000000"/><rect x="6" y="8" width="1" height="1" fill="#0000ff"/><rect x="7" y="8" width="5" height="1" fill="#00ffff"/><rect x="12" y="8" width="2" height="1" fill="#0000ff"/><rect x="2" y="9" width="1" height="1" fill="#000000"/><rect x="3" y="9" width="2" height="1" fill="#ffff00"/><rect x="5" y="9" width="1" height="1" fill="#000000"/><rect x="6" y="9" width="2" height="1" fill="#0000ff"/><rect x="8" y="9" width="3" height="1" fill="#00ffff"/><rect x="11" y="9" width="2" height="1" fill="#0000ff"/><rect x="2" y="10" width="1" height="1" fill="#000000"/><rect x="3" y="10" width="1" height="1" fill="#ffff00"/><rect x="4" y="10" width="1" height="1" fill="#000000"/><rect x="7" y="10" width="2" height="1" fill="#0000ff"/><rect x="9" y="10" width="1" height="1" fill="#00ffff"/><rect x="10" y="10" width="2" height="1" fill="#0000ff"/><rect x="3" y="11" width="1" height="1" fill="#000000"/><rect x="8" y="11" width="3" height="1" fill="#0000ff"/><rect x="9" y="12" width="1" height="1" fill="#0000ff"/></svg><div class="t" style="left:110px;top:261px">maxe</div><svg class="a" style="left:96px;top:282px" width="9" height="10" shape-rendering="crispEdges"><rect x="5" y="0" width="1" height="1" fill="#0000ff"/><rect x="4" y="1" width="1" height="1" fill="#0000ff"/><rect x="5" y="1" width="1" height="1" fill="#00ffff"/><rect x="6" y="1" width="1" height="1" fill="#0000ff"/><rect x="3" y="2" width="1" height="1" fill="#0000ff"/><rect x="4" y="2" width="3" height="1" fill="#00ffff"/><rect x="7" y="2" width="1" height="1" fill="#0000ff"/><rect x="2" y="3" width="1" height="1" fill="#0000ff"/><rect x="3" y="3" width="4" height="1" fill="#00ffff"/><rect x="7" y="3" width="2" height="1" fill="#0000ff"/><rect x="1" y="4" width="1" height="1" fill="#0000ff"/><rect x="2" y="4" width="5" height="1" fill="#00ffff"/><rect x="7" y="4" width="1" height="1" fill="#0000ff"/><rect x="0" y="5" width="1" height="1" fill="#0000ff"/><rect x="1" y="5" width="5" height="1" fill="#00ffff"/><rect x="6" y="5" width="2" height="1" fill="#0000ff"/><rect x="0" y="6" width="2" height="1" fill="#0000ff"/><rect x="2" y="6" width="3" height="1" fill="#00ffff"/><rect x="5" y="6" width="2" height="1" fill="#0000ff"/><rect x="1" y="7" width="2" height="1" fill="#0000ff"/><rect x="3" y="7" width="1" height="1" fill="#00ffff"/><rect x="4" y="7" width="2" height="1" fill="#0000ff"/><rect x="2" y="8" width="3" height="1" fill="#0000ff"/><rect x="3" y="9" width="1" height="1" fill="#0000ff"/></svg><div class="t" style="left:110px;top:277px">tenxe</div><svg class="a" style="left:93px;top:293px" width="13" height="16" shape-rendering="crispEdges"><rect x="10" y="0" width="1" height="1" fill="#808080"/><rect x="11" y="1" width="1" height="1" fill="#808080"/><rect x="0" y="2" width="13" height="1" fill="#808080"/><rect x="11" y="3" width="1" height="1" fill="#808080"/><rect x="10" y="4" width="1" height="1" fill="#808080"/><rect x="5" y="6" width="1" height="1" fill="#008080"/><rect x="4" y="7" width="1" height="1" fill="#008080"/><rect x="5" y="7" width="1" height="1" fill="#ffffff"/><rect x="6" y="7" width="1" height="1" fill="#008080"/><rect x="3" y="8" width="1" height="1" fill="#008080"/><rect x="4" y="8" width="1" height="1" fill="#c0c0c0"/><rect x="5" y="8" width="1" height="1" fill="#ffffff"/><rect x="6" y="8" width="1" height="1" fill="#c0c0c0"/><rect x="7" y="8" width="1" height="1" fill="#008080"/><rect x="2" y="9" width="1" height="1" fill="#008080"/><rect x="3" y="9" width="1" height="1" fill="#ffffff"/><rect x="4" y="9" width="1" height="1" fill="#c0c0c0"/><rect x="5" y="9" width="1" height="1" fill="#ffffff"/><rect x="6" y="9" width="1" height="1" fill="#c0c0c0"/><rect x="7" y="9" width="2" height="1" fill="#008080"/><rect x="1" y="10" width="1" height="1" fill="#0000ff"/><rect x="2" y="10" width="1" height="1" fill="#c0c0c0"/><rect x="3" y="10" width="1" height="1" fill="#ffffff"/><rect x="4" y="10" width="1" height="1" fill="#c0c0c0"/><rect x="5" y="10" width="1" height="1" fill="#ffffff"/><rect x="6" y="10" width="1" height="1" fill="#c0c0c0"/><rect x="7" y="10" width="1" height="1" fill="#0000ff"/><rect x="0" y="11" width="1" height="1" fill="#0000ff"/><rect x="1" y="11" width="1" height="1" fill="#ffffff"/><rect x="2" y="11" width="1" height="1" fill="#c0c0c0"/><rect x="3" y="11" width="1" height="1" fill="#ffffff"/><rect x="4" y="11" width="1" height="1" fill="#c0c0c0"/><rect x="5" y="11" width="1" height="1" fill="#ffffff"/><rect x="6" y="11" width="2" height="1" fill="#0000ff"/><rect x="0" y="12" width="2" height="1" fill="#0000ff"/><rect x="2" y="12" width="1" height="1" fill="#ffffff"/><rect x="3" y="12" width="1" height="1" fill="#c0c0c0"/><rect x="4" y="12" width="1" height="1" fill="#ffffff"/><rect x="5" y="12" width="2" height="1" fill="#0000ff"/><rect x="1" y="13" width="2" height="1" fill="#0000ff"/><rect x="3" y="13" width="1" height="1" fill="#c0c0c0"/><rect x="4" y="13" width="2" height="1" fill="#0000ff"/><rect x="2" y="14" width="3" height="1" fill="#0000ff"/><rect x="3" y="15" width="1" height="1" fill="#0000ff"/></svg><div class="t" style="left:110px;top:293px">theNguoi ( Nguoi )</div><svg class="a" style="left:93px;top:309px" width="13" height="16" shape-rendering="crispEdges"><rect x="10" y="0" width="1" height="1" fill="#808080"/><rect x="11" y="1" width="1" height="1" fill="#808080"/><rect x="0" y="2" width="13" height="1" fill="#808080"/><rect x="11" y="3" width="1" height="1" fill="#808080"/><rect x="10" y="4" width="1" height="1" fill="#808080"/><rect x="5" y="6" width="1" height="1" fill="#008080"/><rect x="4" y="7" width="1" height="1" fill="#008080"/><rect x="5" y="7" width="1" height="1" fill="#ffffff"/><rect x="6" y="7" width="1" height="1" fill="#008080"/><rect x="3" y="8" width="1" height="1" fill="#008080"/><rect x="4" y="8" width="1" height="1" fill="#c0c0c0"/><rect x="5" y="8" width="1" height="1" fill="#ffffff"/><rect x="6" y="8" width="1" height="1" fill="#c0c0c0"/><rect x="7" y="8" width="1" height="1" fill="#008080"/><rect x="2" y="9" width="1" height="1" fill="#008080"/><rect x="3" y="9" width="1" height="1" fill="#ffffff"/><rect x="4" y="9" width="1" height="1" fill="#c0c0c0"/><rect x="5" y="9" width="1" height="1" fill="#ffffff"/><rect x="6" y="9" width="1" height="1" fill="#c0c0c0"/><rect x="7" y="9" width="2" height="1" fill="#008080"/><rect x="1" y="10" width="1" height="1" fill="#0000ff"/><rect x="2" y="10" width="1" height="1" fill="#c0c0c0"/><rect x="3" y="10" width="1" height="1" fill="#ffffff"/><rect x="4" y="10" width="1" height="1" fill="#c0c0c0"/><rect x="5" y="10" width="1" height="1" fill="#ffffff"/><rect x="6" y="10" width="1" height="1" fill="#c0c0c0"/><rect x="7" y="10" width="1" height="1" fill="#0000ff"/><rect x="0" y="11" width="1" height="1" fill="#0000ff"/><rect x="1" y="11" width="1" height="1" fill="#ffffff"/><rect x="2" y="11" width="1" height="1" fill="#c0c0c0"/><rect x="3" y="11" width="1" height="1" fill="#ffffff"/><rect x="4" y="11" width="1" height="1" fill="#c0c0c0"/><rect x="5" y="11" width="1" height="1" fill="#ffffff"/><rect x="6" y="11" width="2" height="1" fill="#0000ff"/><rect x="0" y="12" width="2" height="1" fill="#0000ff"/><rect x="2" y="12" width="1" height="1" fill="#ffffff"/><rect x="3" y="12" width="1" height="1" fill="#c0c0c0"/><rect x="4" y="12" width="1" height="1" fill="#ffffff"/><rect x="5" y="12" width="2" height="1" fill="#0000ff"/><rect x="1" y="13" width="2" height="1" fill="#0000ff"/><rect x="3" y="13" width="1" height="1" fill="#c0c0c0"/><rect x="4" y="13" width="2" height="1" fill="#0000ff"/><rect x="2" y="14" width="3" height="1" fill="#0000ff"/><rect x="3" y="15" width="1" height="1" fill="#0000ff"/></svg><div class="t" style="left:110px;top:309px">theNguoi ( Nguoi )</div><div class="a" style="left:55px;top:329px;width:9px;height:9px;background:#fff;border:1px solid #8a8a8a"></div><div class="a" style="left:57px;top:333px;width:5px;height:1px;background:#000"></div><div class="a" style="left:59px;top:331px;width:1px;height:5px;background:#000"></div><svg class="a" style="left:71px;top:325px" width="14" height="15" shape-rendering="crispEdges"><rect x="7" y="0" width="1" height="1" fill="#000000"/><rect x="8" y="1" width="1" height="1" fill="#000000"/><rect x="0" y="2" width="10" height="1" fill="#000000"/><rect x="8" y="3" width="1" height="1" fill="#000000"/><rect x="7" y="4" width="1" height="1" fill="#000000"/><rect x="9" y="5" width="1" height="1" fill="#000000"/><rect x="10" y="6" width="1" height="1" fill="#000000"/><rect x="2" y="7" width="10" height="1" fill="#000000"/><rect x="10" y="8" width="1" height="1" fill="#000000"/><rect x="9" y="9" width="1" height="1" fill="#000000"/><rect x="11" y="10" width="1" height="1" fill="#000000"/><rect x="12" y="11" width="1" height="1" fill="#000000"/><rect x="3" y="12" width="11" height="1" fill="#000000"/><rect x="12" y="13" width="1" height="1" fill="#000000"/><rect x="11" y="14" width="1" height="1" fill="#000000"/></svg><div class="t" style="left:91px;top:325px">Associations</div><div class="a" style="left:36px;top:345px;width:9px;height:9px;background:#fff;border:1px solid #8a8a8a"></div><div class="a" style="left:38px;top:349px;width:5px;height:1px;background:#000"></div><div class="a" style="left:40px;top:347px;width:1px;height:5px;background:#000"></div><svg class="a" style="left:52px;top:342px" width="14" height="12" shape-rendering="crispEdges"><rect x="3" y="0" width="5" height="1" fill="#000000"/><rect x="2" y="1" width="1" height="1" fill="#000000"/><rect x="3" y="1" width="5" height="1" fill="#ffff00"/><rect x="8" y="1" width="1" height="1" fill="#000000"/><rect x="1" y="2" width="1" height="1" fill="#000000"/><rect x="2" y="2" width="7" height="1" fill="#ffff00"/><rect x="9" y="2" width="5" height="1" fill="#000000"/><rect x="0" y="3" width="1" height="1" fill="#000000"/><rect x="1" y="3" width="2" height="1" fill="#c0c0c0"/><rect x="3" y="3" width="7" height="1" fill="#000000"/><rect x="10" y="3" width="3" height="1" fill="#c0c0c0"/><rect x="13" y="3" width="1" height="1" fill="#808080"/><rect x="0" y="4" width="1" height="1" fill="#000000"/><rect x="1" y="4" width="2" height="1" fill="#ffff00"/><rect x="3" y="4" width="1" height="1" fill="#000000"/><rect x="4" y="4" width="5" height="1" fill="#00ffff"/><rect x="9" y="4" width="1" height="1" fill="#000000"/><rect x="10" y="4" width="2" height="1" fill="#ffff00"/><rect x="12" y="4" width="1" height="1" fill="#000000"/><rect x="13" y="4" width="1" height="1" fill="#808080"/><rect x="0" y="5" width="1" height="1" fill="#000000"/><rect x="1" y="5" width="2" height="1" fill="#ffff00"/><rect x="3" y="5" width="2" height="1" fill="#000000"/><rect x="5" y="5" width="3" height="1" fill="#00ffff"/><rect x="8" y="5" width="2" height="1" fill="#000000"/><rect x="10" y="5" width="2" height="1" fill="#ffff00"/><rect x="12" y="5" width="1" height="1" fill="#000000"/><rect x="13" y="5" width="1" height="1" fill="#808080"/><rect x="0" y="6" width="1" height="1" fill="#000000"/><rect x="1" y="6" width="2" height="1" fill="#ffff00"/><rect x="3" y="6" width="1" height="1" fill="#000000"/><rect x="4" y="6" width="1" height="1" fill="#00ffff"/><rect x="5" y="6" width="3" height="1" fill="#000000"/><rect x="8" y="6" width="1" height="1" fill="#00ffff"/><rect x="9" y="6" width="1" height="1" fill="#000000"/><rect x="10" y="6" width="2" height="1" fill="#ffff00"/><rect x="12" y="6" width="1" height="1" fill="#000000"/><rect x="13" y="6" width="1" height="1" fill="#808080"/><rect x="0" y="7" width="1" height="1" fill="#000000"/><rect x="1" y="7" width="2" height="1" fill="#ffff00"/><rect x="3" y="7" width="1" height="1" fill="#000000"/><rect x="4" y="7" width="5" height="1" fill="#00ffff"/><rect x="9" y="7" width="1" height="1" fill="#000000"/><rect x="10" y="7" width="2" height="1" fill="#ffff00"/><rect x="12" y="7" width="1" height="1" fill="#000000"/><rect x="13" y="7" width="1" height="1" fill="#808080"/><rect x="0" y="8" width="1" height="1" fill="#000000"/><rect x="1" y="8" width="2" height="1" fill="#ffff00"/><rect x="3" y="8" width="1" height="1" fill="#000000"/><rect x="4" y="8" width="5" height="1" fill="#00ffff"/><rect x="9" y="8" width="1" height="1" fill="#000000"/><rect x="10" y="8" width="2" height="1" fill="#ffff00"/><rect x="12" y="8" width="1" height="1" fill="#000000"/><rect x="13" y="8" width="1" height="1" fill="#808080"/><rect x="0" y="9" width="1" height="1" fill="#000000"/><rect x="1" y="9" width="2" height="1" fill="#ffff00"/><rect x="3" y="9" width="1" height="1" fill="#000000"/><rect x="4" y="9" width="5" height="1" fill="#00ffff"/><rect x="9" y="9" width="1" height="1" fill="#000000"/><rect x="10" y="9" width="2" height="1" fill="#ffff00"/><rect x="12" y="9" width="1" height="1" fill="#000000"/><rect x="13" y="9" width="1" height="1" fill="#808080"/><rect x="0" y="10" width="13" height="1" fill="#000000"/><rect x="13" y="10" width="1" height="1" fill="#808080"/><rect x="1" y="11" width="13" height="1" fill="#808080"/></svg><div class="t" style="left:72px;top:341px">Global Data Types</div><div class="a" style="left:36px;top:361px;width:9px;height:9px;background:#fff;border:1px solid #8a8a8a"></div><div class="a" style="left:38px;top:365px;width:5px;height:1px;background:#000"></div><svg class="a" style="left:52px;top:358px" width="14" height="12" shape-rendering="crispEdges"><rect x="3" y="0" width="5" height="1" fill="#000000"/><rect x="2" y="1" width="1" height="1" fill="#000000"/><rect x="3" y="1" width="5" height="1" fill="#ffff00"/><rect x="8" y="1" width="1" height="1" fill="#000000"/><rect x="1" y="2" width="1" height="1" fill="#000000"/><rect x="2" y="2" width="7" height="1" fill="#ffff00"/><rect x="9" y="2" width="5" height="1" fill="#000000"/><rect x="0" y="3" width="1" height="1" fill="#000000"/><rect x="1" y="3" width="2" height="1" fill="#c0c0c0"/><rect x="3" y="3" width="7" height="1" fill="#000000"/><rect x="10" y="3" width="3" height="1" fill="#c0c0c0"/><rect x="13" y="3" width="1" height="1" fill="#808080"/><rect x="0" y="4" width="1" height="1" fill="#000000"/><rect x="1" y="4" width="2" height="1" fill="#ffff00"/><rect x="3" y="4" width="1" height="1" fill="#000000"/><rect x="4" y="4" width="5" height="1" fill="#00ffff"/><rect x="9" y="4" width="1" height="1" fill="#000000"/><rect x="10" y="4" width="2" height="1" fill="#ffff00"/><rect x="12" y="4" width="1" height="1" fill="#000000"/><rect x="13" y="4" width="1" height="1" fill="#808080"/><rect x="0" y="5" width="1" height="1" fill="#000000"/><rect x="1" y="5" width="2" height="1" fill="#ffff00"/><rect x="3" y="5" width="2" height="1" fill="#000000"/><rect x="5" y="5" width="3" height="1" fill="#00ffff"/><rect x="8" y="5" width="2" height="1" fill="#000000"/><rect x="10" y="5" width="2" height="1" fill="#ffff00"/><rect x="12" y="5" width="1" height="1" fill="#000000"/><rect x="13" y="5" width="1" height="1" fill="#808080"/><rect x="0" y="6" width="1" height="1" fill="#000000"/><rect x="1" y="6" width="2" height="1" fill="#ffff00"/><rect x="3" y="6" width="1" height="1" fill="#000000"/><rect x="4" y="6" width="1" height="1" fill="#00ffff"/><rect x="5" y="6" width="3" height="1" fill="#000000"/><rect x="8" y="6" width="1" height="1" fill="#00ffff"/><rect x="9" y="6" width="1" height="1" fill="#000000"/><rect x="10" y="6" width="2" height="1" fill="#ffff00"/><rect x="12" y="6" width="1" height="1" fill="#000000"/><rect x="13" y="6" width="1" height="1" fill="#808080"/><rect x="0" y="7" width="1" height="1" fill="#000000"/><rect x="1" y="7" width="2" height="1" fill="#ffff00"/><rect x="3" y="7" width="1" height="1" fill="#000000"/><rect x="4" y="7" width="5" height="1" fill="#00ffff"/><rect x="9" y="7" width="1" height="1" fill="#000000"/><rect x="10" y="7" width="2" height="1" fill="#ffff00"/><rect x="12" y="7" width="1" height="1" fill="#000000"/><rect x="13" y="7" width="1" height="1" fill="#808080"/><rect x="0" y="8" width="1" height="1" fill="#000000"/><rect x="1" y="8" width="2" height="1" fill="#ffff00"/><rect x="3" y="8" width="1" height="1" fill="#000000"/><rect x="4" y="8" width="5" height="1" fill="#00ffff"/><rect x="9" y="8" width="1" height="1" fill="#000000"/><rect x="10" y="8" width="2" height="1" fill="#ffff00"/><rect x="12" y="8" width="1" height="1" fill="#000000"/><rect x="13" y="8" width="1" height="1" fill="#808080"/><rect x="0" y="9" width="1" height="1" fill="#000000"/><rect x="1" y="9" width="2" height="1" fill="#ffff00"/><rect x="3" y="9" width="1" height="1" fill="#000000"/><rect x="4" y="9" width="5" height="1" fill="#00ffff"/><rect x="9" y="9" width="1" height="1" fill="#000000"/><rect x="10" y="9" width="2" height="1" fill="#ffff00"/><rect x="12" y="9" width="1" height="1" fill="#000000"/><rect x="13" y="9" width="1" height="1" fill="#808080"/><rect x="0" y="10" width="13" height="1" fill="#000000"/><rect x="13" y="10" width="1" height="1" fill="#808080"/><rect x="1" y="11" width="13" height="1" fill="#808080"/></svg><div class="t" style="left:72px;top:357px">Schemas</div><div class="a" style="left:55px;top:377px;width:9px;height:9px;background:#fff;border:1px solid #8a8a8a"></div><div class="a" style="left:57px;top:381px;width:5px;height:1px;background:#000"></div><div class="a" style="left:59px;top:379px;width:1px;height:5px;background:#000"></div><svg class="a" style="left:71px;top:374px" width="14" height="12" shape-rendering="crispEdges"><rect x="3" y="0" width="5" height="1" fill="#000000"/><rect x="2" y="1" width="1" height="1" fill="#000000"/><rect x="3" y="1" width="5" height="1" fill="#ffff00"/><rect x="8" y="1" width="1" height="1" fill="#000000"/><rect x="1" y="2" width="1" height="1" fill="#000000"/><rect x="2" y="2" width="7" height="1" fill="#ffff00"/><rect x="9" y="2" width="5" height="1" fill="#000000"/><rect x="0" y="3" width="1" height="1" fill="#000000"/><rect x="1" y="3" width="2" height="1" fill="#c0c0c0"/><rect x="3" y="3" width="7" height="1" fill="#000000"/><rect x="10" y="3" width="3" height="1" fill="#c0c0c0"/><rect x="13" y="3" width="1" height="1" fill="#808080"/><rect x="0" y="4" width="1" height="1" fill="#000000"/><rect x="1" y="4" width="2" height="1" fill="#ffff00"/><rect x="3" y="4" width="1" height="1" fill="#000000"/><rect x="4" y="4" width="5" height="1" fill="#00ffff"/><rect x="9" y="4" width="1" height="1" fill="#000000"/><rect x="10" y="4" width="2" height="1" fill="#ffff00"/><rect x="12" y="4" width="1" height="1" fill="#000000"/><rect x="13" y="4" width="1" height="1" fill="#808080"/><rect x="0" y="5" width="1" height="1" fill="#000000"/><rect x="1" y="5" width="2" height="1" fill="#ffff00"/><rect x="3" y="5" width="2" height="1" fill="#000000"/><rect x="5" y="5" width="3" height="1" fill="#00ffff"/><rect x="8" y="5" width="2" height="1" fill="#000000"/><rect x="10" y="5" width="2" height="1" fill="#ffff00"/><rect x="12" y="5" width="1" height="1" fill="#000000"/><rect x="13" y="5" width="1" height="1" fill="#808080"/><rect x="0" y="6" width="1" height="1" fill="#000000"/><rect x="1" y="6" width="2" height="1" fill="#ffff00"/><rect x="3" y="6" width="1" height="1" fill="#000000"/><rect x="4" y="6" width="1" height="1" fill="#00ffff"/><rect x="5" y="6" width="3" height="1" fill="#000000"/><rect x="8" y="6" width="1" height="1" fill="#00ffff"/><rect x="9" y="6" width="1" height="1" fill="#000000"/><rect x="10" y="6" width="2" height="1" fill="#ffff00"/><rect x="12" y="6" width="1" height="1" fill="#000000"/><rect x="13" y="6" width="1" height="1" fill="#808080"/><rect x="0" y="7" width="1" height="1" fill="#000000"/><rect x="1" y="7" width="2" height="1" fill="#ffff00"/><rect x="3" y="7" width="1" height="1" fill="#000000"/><rect x="4" y="7" width="5" height="1" fill="#00ffff"/><rect x="9" y="7" width="1" height="1" fill="#000000"/><rect x="10" y="7" width="2" height="1" fill="#ffff00"/><rect x="12" y="7" width="1" height="1" fill="#000000"/><rect x="13" y="7" width="1" height="1" fill="#808080"/><rect x="0" y="8" width="1" height="1" fill="#000000"/><rect x="1" y="8" width="2" height="1" fill="#ffff00"/><rect x="3" y="8" width="1" height="1" fill="#000000"/><rect x="4" y="8" width="5" height="1" fill="#00ffff"/><rect x="9" y="8" width="1" height="1" fill="#000000"/><rect x="10" y="8" width="2" height="1" fill="#ffff00"/><rect x="12" y="8" width="1" height="1" fill="#000000"/><rect x="13" y="8" width="1" height="1" fill="#808080"/><rect x="0" y="9" width="1" height="1" fill="#000000"/><rect x="1" y="9" width="2" height="1" fill="#ffff00"/><rect x="3" y="9" width="1" height="1" fill="#000000"/><rect x="4" y="9" width="5" height="1" fill="#00ffff"/><rect x="9" y="9" width="1" height="1" fill="#000000"/><rect x="10" y="9" width="2" height="1" fill="#ffff00"/><rect x="12" y="9" width="1" height="1" fill="#000000"/><rect x="13" y="9" width="1" height="1" fill="#808080"/><rect x="0" y="10" width="13" height="1" fill="#000000"/><rect x="13" y="10" width="1" height="1" fill="#808080"/><rect x="1" y="11" width="13" height="1" fill="#808080"/></svg><div class="t" style="left:91px;top:373px">&lt;&lt;Schema&gt;&gt; S_0</div><svg class="a" style="left:71px;top:389px" width="14" height="15" shape-rendering="crispEdges"><rect x="7" y="0" width="1" height="1" fill="#000000"/><rect x="8" y="1" width="1" height="1" fill="#000000"/><rect x="0" y="2" width="10" height="1" fill="#000000"/><rect x="8" y="3" width="1" height="1" fill="#000000"/><rect x="7" y="4" width="1" height="1" fill="#000000"/><rect x="9" y="5" width="1" height="1" fill="#000000"/><rect x="10" y="6" width="1" height="1" fill="#000000"/><rect x="2" y="7" width="10" height="1" fill="#000000"/><rect x="10" y="8" width="1" height="1" fill="#000000"/><rect x="9" y="9" width="1" height="1" fill="#000000"/><rect x="11" y="10" width="1" height="1" fill="#000000"/><rect x="12" y="11" width="1" height="1" fill="#000000"/><rect x="3" y="12" width="11" height="1" fill="#000000"/><rect x="12" y="13" width="1" height="1" fill="#000000"/><rect x="11" y="14" width="1" height="1" fill="#000000"/></svg><div class="t" style="left:91px;top:389px">Associations</div><svg class="a" style="left:53px;top:406px" width="13" height="14" shape-rendering="crispEdges"><rect x="0" y="0" width="10" height="1" fill="#808080"/><rect x="0" y="1" width="1" height="1" fill="#808080"/><rect x="1" y="1" width="8" height="1" fill="#ffffff"/><rect x="9" y="1" width="2" height="1" fill="#808080"/><rect x="0" y="2" width="1" height="1" fill="#808080"/><rect x="1" y="2" width="2" height="1" fill="#ffffff"/><rect x="3" y="2" width="6" height="1" fill="#000000"/><rect x="9" y="2" width="1" height="1" fill="#808080"/><rect x="10" y="2" width="1" height="1" fill="#ffffff"/><rect x="11" y="2" width="1" height="1" fill="#808080"/><rect x="0" y="3" width="1" height="1" fill="#808080"/><rect x="1" y="3" width="2" height="1" fill="#ffffff"/><rect x="3" y="3" width="1" height="1" fill="#000000"/><rect x="4" y="3" width="4" height="1" fill="#ffff00"/><rect x="8" y="3" width="1" height="1" fill="#000000"/><rect x="9" y="3" width="4" height="1" fill="#808080"/><rect x="0" y="4" width="1" height="1" fill="#808080"/><rect x="1" y="4" width="2" height="1" fill="#ffffff"/><rect x="3" y="4" width="6" height="1" fill="#000000"/><rect x="9" y="4" width="3" height="1" fill="#ffffff"/><rect x="12" y="4" width="1" height="1" fill="#808080"/><rect x="0" y="5" width="1" height="1" fill="#808080"/><rect x="1" y="5" width="2" height="1" fill="#ffffff"/><rect x="3" y="5" width="1" height="1" fill="#000000"/><rect x="4" y="5" width="4" height="1" fill="#ffff00"/><rect x="8" y="5" width="1" height="1" fill="#000000"/><rect x="9" y="5" width="3" height="1" fill="#ffffff"/><rect x="12" y="5" width="1" height="1" fill="#808080"/><rect x="0" y="6" width="1" height="1" fill="#808080"/><rect x="1" y="6" width="2" height="1" fill="#ffffff"/><rect x="3" y="6" width="1" height="1" fill="#000000"/><rect x="4" y="6" width="4" height="1" fill="#ffff00"/><rect x="8" y="6" width="1" height="1" fill="#000000"/><rect x="9" y="6" width="3" height="1" fill="#ffffff"/><rect x="12" y="6" width="1" height="1" fill="#808080"/><rect x="0" y="7" width="1" height="1" fill="#808080"/><rect x="1" y="7" width="2" height="1" fill="#ffffff"/><rect x="3" y="7" width="6" height="1" fill="#000000"/><rect x="9" y="7" width="3" height="1" fill="#ffffff"/><rect x="12" y="7" width="1" height="1" fill="#808080"/><rect x="0" y="8" width="1" height="1" fill="#808080"/><rect x="1" y="8" width="2" height="1" fill="#ffffff"/><rect x="3" y="8" width="1" height="1" fill="#000000"/><rect x="4" y="8" width="4" height="1" fill="#ffff00"/><rect x="8" y="8" width="1" height="1" fill="#000000"/><rect x="9" y="8" width="3" height="1" fill="#ffffff"/><rect x="12" y="8" width="1" height="1" fill="#808080"/><rect x="0" y="9" width="1" height="1" fill="#808080"/><rect x="1" y="9" width="2" height="1" fill="#ffffff"/><rect x="3" y="9" width="1" height="1" fill="#000000"/><rect x="4" y="9" width="4" height="1" fill="#ffff00"/><rect x="8" y="9" width="1" height="1" fill="#000000"/><rect x="9" y="9" width="3" height="1" fill="#ffffff"/><rect x="12" y="9" width="1" height="1" fill="#808080"/><rect x="0" y="10" width="1" height="1" fill="#808080"/><rect x="1" y="10" width="2" height="1" fill="#ffffff"/><rect x="3" y="10" width="6" height="1" fill="#000000"/><rect x="9" y="10" width="3" height="1" fill="#ffffff"/><rect x="12" y="10" width="1" height="1" fill="#808080"/><rect x="0" y="11" width="1" height="1" fill="#808080"/><rect x="1" y="11" width="11" height="1" fill="#ffffff"/><rect x="12" y="11" width="1" height="1" fill="#808080"/><rect x="0" y="12" width="1" height="1" fill="#808080"/><rect x="1" y="12" width="11" height="1" fill="#ffffff"/><rect x="12" y="12" width="1" height="1" fill="#808080"/><rect x="0" y="13" width="13" height="1" fill="#808080"/></svg><div class="t" style="left:72px;top:405px">Main</div><svg class="a" style="left:52px;top:421px" width="14" height="15" shape-rendering="crispEdges"><rect x="7" y="0" width="1" height="1" fill="#000000"/><rect x="8" y="1" width="1" height="1" fill="#000000"/><rect x="0" y="2" width="10" height="1" fill="#000000"/><rect x="8" y="3" width="1" height="1" fill="#000000"/><rect x="7" y="4" width="1" height="1" fill="#000000"/><rect x="9" y="5" width="1" height="1" fill="#000000"/><rect x="10" y="6" width="1" height="1" fill="#000000"/><rect x="2" y="7" width="10" height="1" fill="#000000"/><rect x="10" y="8" width="1" height="1" fill="#000000"/><rect x="9" y="9" width="1" height="1" fill="#000000"/><rect x="11" y="10" width="1" height="1" fill="#000000"/><rect x="12" y="11" width="1" height="1" fill="#000000"/><rect x="3" y="12" width="11" height="1" fill="#000000"/><rect x="12" y="13" width="1" height="1" fill="#000000"/><rect x="11" y="14" width="1" height="1" fill="#000000"/></svg><div class="t" style="left:72px;top:421px">Associations</div><div class="a" style="left:17px;top:441px;width:9px;height:9px;background:#fff;border:1px solid #8a8a8a"></div><div class="a" style="left:19px;top:445px;width:5px;height:1px;background:#000"></div><svg class="a" style="left:33px;top:438px" width="15" height="13" shape-rendering="crispEdges"><rect x="3" y="0" width="5" height="1" fill="#000000"/><rect x="2" y="1" width="1" height="1" fill="#000000"/><rect x="3" y="1" width="5" height="1" fill="#ffff00"/><rect x="8" y="1" width="1" height="1" fill="#000000"/><rect x="1" y="2" width="1" height="1" fill="#000000"/><rect x="2" y="2" width="7" height="1" fill="#ffff00"/><rect x="9" y="2" width="5" height="1" fill="#000000"/><rect x="0" y="3" width="1" height="1" fill="#000000"/><rect x="1" y="3" width="13" height="1" fill="#c0c0c0"/><rect x="14" y="3" width="1" height="1" fill="#808080"/><rect x="0" y="4" width="1" height="1" fill="#000000"/><rect x="1" y="4" width="12" height="1" fill="#ffff00"/><rect x="13" y="4" width="1" height="1" fill="#000000"/><rect x="14" y="4" width="1" height="1" fill="#808080"/><rect x="0" y="5" width="1" height="1" fill="#000000"/><rect x="1" y="5" width="12" height="1" fill="#ffff00"/><rect x="13" y="5" width="1" height="1" fill="#000000"/><rect x="14" y="5" width="1" height="1" fill="#808080"/><rect x="0" y="6" width="1" height="1" fill="#000000"/><rect x="1" y="6" width="12" height="1" fill="#ffff00"/><rect x="13" y="6" width="1" height="1" fill="#000000"/><rect x="14" y="6" width="1" height="1" fill="#808080"/><rect x="0" y="7" width="1" height="1" fill="#000000"/><rect x="1" y="7" width="12" height="1" fill="#ffff00"/><rect x="13" y="7" width="1" height="1" fill="#000000"/><rect x="14" y="7" width="1" height="1" fill="#808080"/><rect x="0" y="8" width="1" height="1" fill="#000000"/><rect x="1" y="8" width="12" height="1" fill="#ffff00"/><rect x="13" y="8" width="1" height="1" fill="#000000"/><rect x="14" y="8" width="1" height="1" fill="#808080"/><rect x="0" y="9" width="1" height="1" fill="#000000"/><rect x="1" y="9" width="12" height="1" fill="#ffff00"/><rect x="13" y="9" width="1" height="1" fill="#000000"/><rect x="14" y="9" width="1" height="1" fill="#808080"/><rect x="0" y="10" width="1" height="1" fill="#000000"/><rect x="1" y="10" width="12" height="1" fill="#ffff00"/><rect x="13" y="10" width="1" height="1" fill="#000000"/><rect x="14" y="10" width="1" height="1" fill="#808080"/><rect x="0" y="11" width="14" height="1" fill="#000000"/><rect x="14" y="11" width="1" height="1" fill="#808080"/><rect x="1" y="12" width="14" height="1" fill="#808080"/></svg><div class="t" style="left:53px;top:437px">Component View</div><div class="a" style="left:36px;top:457px;width:9px;height:9px;background:#fff;border:1px solid #8a8a8a"></div><div class="a" style="left:38px;top:461px;width:5px;height:1px;background:#000"></div><svg class="a" style="left:52px;top:454px" width="15" height="13" shape-rendering="crispEdges"><rect x="3" y="0" width="5" height="1" fill="#000000"/><rect x="2" y="1" width="1" height="1" fill="#000000"/><rect x="3" y="1" width="5" height="1" fill="#ffff00"/><rect x="8" y="1" width="1" height="1" fill="#000000"/><rect x="1" y="2" width="1" height="1" fill="#000000"/><rect x="2" y="2" width="7" height="1" fill="#ffff00"/><rect x="9" y="2" width="5" height="1" fill="#000000"/><rect x="0" y="3" width="1" height="1" fill="#000000"/><rect x="1" y="3" width="13" height="1" fill="#c0c0c0"/><rect x="14" y="3" width="1" height="1" fill="#808080"/><rect x="0" y="4" width="1" height="1" fill="#000000"/><rect x="1" y="4" width="12" height="1" fill="#ffff00"/><rect x="13" y="4" width="1" height="1" fill="#000000"/><rect x="14" y="4" width="1" height="1" fill="#808080"/><rect x="0" y="5" width="1" height="1" fill="#000000"/><rect x="1" y="5" width="12" height="1" fill="#ffff00"/><rect x="13" y="5" width="1" height="1" fill="#000000"/><rect x="14" y="5" width="1" height="1" fill="#808080"/><rect x="0" y="6" width="1" height="1" fill="#000000"/><rect x="1" y="6" width="12" height="1" fill="#ffff00"/><rect x="13" y="6" width="1" height="1" fill="#000000"/><rect x="14" y="6" width="1" height="1" fill="#808080"/><rect x="0" y="7" width="1" height="1" fill="#000000"/><rect x="1" y="7" width="12" height="1" fill="#ffff00"/><rect x="13" y="7" width="1" height="1" fill="#000000"/><rect x="14" y="7" width="1" height="1" fill="#808080"/><rect x="0" y="8" width="1" height="1" fill="#000000"/><rect x="1" y="8" width="12" height="1" fill="#ffff00"/><rect x="13" y="8" width="1" height="1" fill="#000000"/><rect x="14" y="8" width="1" height="1" fill="#808080"/><rect x="0" y="9" width="1" height="1" fill="#000000"/><rect x="1" y="9" width="12" height="1" fill="#ffff00"/><rect x="13" y="9" width="1" height="1" fill="#000000"/><rect x="14" y="9" width="1" height="1" fill="#808080"/><rect x="0" y="10" width="1" height="1" fill="#000000"/><rect x="1" y="10" width="12" height="1" fill="#ffff00"/><rect x="13" y="10" width="1" height="1" fill="#000000"/><rect x="14" y="10" width="1" height="1" fill="#808080"/><rect x="0" y="11" width="14" height="1" fill="#000000"/><rect x="14" y="11" width="1" height="1" fill="#808080"/><rect x="1" y="12" width="14" height="1" fill="#808080"/></svg><div class="t" style="left:72px;top:453px">DB_0</div><svg class="a" style="left:72px;top:469px" width="11" height="15" shape-rendering="crispEdges"><rect x="2" y="0" width="7" height="1" fill="#000000"/><rect x="1" y="1" width="1" height="1" fill="#000000"/><rect x="2" y="1" width="7" height="1" fill="#00ffff"/><rect x="9" y="1" width="1" height="1" fill="#000000"/><rect x="0" y="2" width="1" height="1" fill="#000000"/><rect x="1" y="2" width="9" height="1" fill="#00ffff"/><rect x="10" y="2" width="1" height="1" fill="#000000"/><rect x="0" y="3" width="2" height="1" fill="#000000"/><rect x="2" y="3" width="7" height="1" fill="#00ffff"/><rect x="9" y="3" width="2" height="1" fill="#000000"/><rect x="0" y="4" width="1" height="1" fill="#000000"/><rect x="1" y="4" width="1" height="1" fill="#00ffff"/><rect x="2" y="4" width="7" height="1" fill="#000000"/><rect x="9" y="4" width="1" height="1" fill="#00ffff"/><rect x="10" y="4" width="1" height="1" fill="#000000"/><rect x="0" y="5" width="1" height="1" fill="#000000"/><rect x="1" y="5" width="6" height="1" fill="#00ffff"/><rect x="7" y="5" width="1" height="1" fill="#008080"/><rect x="8" y="5" width="1" height="1" fill="#00ffff"/><rect x="9" y="5" width="1" height="1" fill="#008080"/><rect x="10" y="5" width="1" height="1" fill="#000000"/><rect x="0" y="6" width="1" height="1" fill="#000000"/><rect x="1" y="6" width="7" height="1" fill="#00ffff"/><rect x="8" y="6" width="1" height="1" fill="#008080"/><rect x="9" y="6" width="1" height="1" fill="#00ffff"/><rect x="10" y="6" width="1" height="1" fill="#000000"/><rect x="0" y="7" width="1" height="1" fill="#000000"/><rect x="1" y="7" width="6" height="1" fill="#00ffff"/><rect x="7" y="7" width="1" height="1" fill="#008080"/><rect x="8" y="7" width="1" height="1" fill="#00ffff"/><rect x="9" y="7" width="1" height="1" fill="#008080"/><rect x="10" y="7" width="1" height="1" fill="#000000"/><rect x="0" y="8" width="1" height="1" fill="#000000"/><rect x="1" y="8" width="7" height="1" fill="#00ffff"/><rect x="8" y="8" width="1" height="1" fill="#008080"/><rect x="9" y="8" width="1" height="1" fill="#00ffff"/><rect x="10" y="8" width="1" height="1" fill="#000000"/><rect x="0" y="9" width="1" height="1" fill="#000000"/><rect x="1" y="9" width="6" height="1" fill="#00ffff"/><rect x="7" y="9" width="1" height="1" fill="#008080"/><rect x="8" y="9" width="1" height="1" fill="#00ffff"/><rect x="9" y="9" width="1" height="1" fill="#008080"/><rect x="10" y="9" width="1" height="1" fill="#000000"/><rect x="0" y="10" width="1" height="1" fill="#000000"/><rect x="1" y="10" width="7" height="1" fill="#00ffff"/><rect x="8" y="10" width="1" height="1" fill="#008080"/><rect x="9" y="10" width="1" height="1" fill="#00ffff"/><rect x="10" y="10" width="1" height="1" fill="#000000"/><rect x="0" y="11" width="1" height="1" fill="#000000"/><rect x="1" y="11" width="6" height="1" fill="#00ffff"/><rect x="7" y="11" width="1" height="1" fill="#008080"/><rect x="8" y="11" width="1" height="1" fill="#00ffff"/><rect x="9" y="11" width="1" height="1" fill="#008080"/><rect x="10" y="11" width="1" height="1" fill="#000000"/><rect x="0" y="12" width="1" height="1" fill="#000000"/><rect x="1" y="12" width="7" height="1" fill="#00ffff"/><rect x="8" y="12" width="1" height="1" fill="#008080"/><rect x="9" y="12" width="1" height="1" fill="#00ffff"/><rect x="10" y="12" width="1" height="1" fill="#000000"/><rect x="1" y="13" width="1" height="1" fill="#000000"/><rect x="2" y="13" width="5" height="1" fill="#00ffff"/><rect x="7" y="13" width="1" height="1" fill="#008080"/><rect x="8" y="13" width="1" height="1" fill="#00ffff"/><rect x="9" y="13" width="1" height="1" fill="#000000"/><rect x="2" y="14" width="7" height="1" fill="#000000"/></svg><div class="t" style="left:91px;top:469px">DB_0</div><svg class="a" style="left:52px;top:486px" width="13" height="14" shape-rendering="crispEdges"><rect x="0" y="0" width="10" height="1" fill="#808080"/><rect x="0" y="1" width="1" height="1" fill="#808080"/><rect x="1" y="1" width="8" height="1" fill="#ffffff"/><rect x="9" y="1" width="2" height="1" fill="#808080"/><rect x="0" y="2" width="1" height="1" fill="#808080"/><rect x="1" y="2" width="3" height="1" fill="#ffffff"/><rect x="4" y="2" width="6" height="1" fill="#000000"/><rect x="10" y="2" width="1" height="1" fill="#ffffff"/><rect x="11" y="2" width="1" height="1" fill="#808080"/><rect x="0" y="3" width="1" height="1" fill="#808080"/><rect x="1" y="3" width="1" height="1" fill="#ffffff"/><rect x="2" y="3" width="3" height="1" fill="#000000"/><rect x="5" y="3" width="4" height="1" fill="#ffff00"/><rect x="9" y="3" width="1" height="1" fill="#000000"/><rect x="10" y="3" width="3" height="1" fill="#808080"/><rect x="0" y="4" width="1" height="1" fill="#808080"/><rect x="1" y="4" width="2" height="1" fill="#ffffff"/><rect x="3" y="4" width="2" height="1" fill="#000000"/><rect x="5" y="4" width="4" height="1" fill="#ffff00"/><rect x="9" y="4" width="1" height="1" fill="#000000"/><rect x="10" y="4" width="2" height="1" fill="#ffffff"/><rect x="12" y="4" width="1" height="1" fill="#808080"/><rect x="0" y="5" width="1" height="1" fill="#808080"/><rect x="1" y="5" width="3" height="1" fill="#ffffff"/><rect x="4" y="5" width="1" height="1" fill="#000000"/><rect x="5" y="5" width="4" height="1" fill="#ffff00"/><rect x="9" y="5" width="1" height="1" fill="#000000"/><rect x="10" y="5" width="2" height="1" fill="#ffffff"/><rect x="12" y="5" width="1" height="1" fill="#808080"/><rect x="0" y="6" width="1" height="1" fill="#808080"/><rect x="1" y="6" width="1" height="1" fill="#ffffff"/><rect x="2" y="6" width="3" height="1" fill="#000000"/><rect x="5" y="6" width="4" height="1" fill="#ffff00"/><rect x="9" y="6" width="1" height="1" fill="#000000"/><rect x="10" y="6" width="2" height="1" fill="#ffffff"/><rect x="12" y="6" width="1" height="1" fill="#808080"/><rect x="0" y="7" width="1" height="1" fill="#808080"/><rect x="1" y="7" width="2" height="1" fill="#ffffff"/><rect x="3" y="7" width="2" height="1" fill="#000000"/><rect x="5" y="7" width="4" height="1" fill="#ffff00"/><rect x="9" y="7" width="1" height="1" fill="#000000"/><rect x="10" y="7" width="2" height="1" fill="#ffffff"/><rect x="12" y="7" width="1" height="1" fill="#808080"/><rect x="0" y="8" width="1" height="1" fill="#808080"/><rect x="1" y="8" width="3" height="1" fill="#ffffff"/><rect x="4" y="8" width="1" height="1" fill="#000000"/><rect x="5" y="8" width="4" height="1" fill="#ffff00"/><rect x="9" y="8" width="1" height="1" fill="#000000"/><rect x="10" y="8" width="2" height="1" fill="#ffffff"/><rect x="12" y="8" width="1" height="1" fill="#808080"/><rect x="0" y="9" width="1" height="1" fill="#808080"/><rect x="1" y="9" width="3" height="1" fill="#ffffff"/><rect x="4" y="9" width="6" height="1" fill="#000000"/><rect x="10" y="9" width="2" height="1" fill="#ffffff"/><rect x="12" y="9" width="1" height="1" fill="#808080"/><rect x="0" y="10" width="1" height="1" fill="#808080"/><rect x="1" y="10" width="11" height="1" fill="#ffffff"/><rect x="12" y="10" width="1" height="1" fill="#808080"/><rect x="0" y="11" width="1" height="1" fill="#808080"/><rect x="1" y="11" width="11" height="1" fill="#ffffff"/><rect x="12" y="11" width="1" height="1" fill="#808080"/><rect x="0" y="12" width="1" height="1" fill="#808080"/><rect x="1" y="12" width="11" height="1" fill="#ffffff"/><rect x="12" y="12" width="1" height="1" fill="#808080"/><rect x="0" y="13" width="13" height="1" fill="#808080"/></svg><div class="t" style="left:72px;top:485px">Main</div><svg class="a" style="left:33px;top:502px" width="13" height="14" shape-rendering="crispEdges"><rect x="0" y="0" width="10" height="1" fill="#808080"/><rect x="0" y="1" width="1" height="1" fill="#808080"/><rect x="1" y="1" width="8" height="1" fill="#ffffff"/><rect x="9" y="1" width="2" height="1" fill="#808080"/><rect x="0" y="2" width="1" height="1" fill="#808080"/><rect x="1" y="2" width="3" height="1" fill="#ffffff"/><rect x="4" y="2" width="6" height="1" fill="#000000"/><rect x="10" y="2" width="1" height="1" fill="#ffffff"/><rect x="11" y="2" width="1" height="1" fill="#808080"/><rect x="0" y="3" width="1" height="1" fill="#808080"/><rect x="1" y="3" width="2" height="1" fill="#ffffff"/><rect x="3" y="3" width="1" height="1" fill="#000000"/><rect x="4" y="3" width="4" height="1" fill="#ffff00"/><rect x="8" y="3" width="2" height="1" fill="#000000"/><rect x="10" y="3" width="3" height="1" fill="#808080"/><rect x="0" y="4" width="1" height="1" fill="#808080"/><rect x="1" y="4" width="1" height="1" fill="#ffffff"/><rect x="2" y="4" width="6" height="1" fill="#000000"/><rect x="8" y="4" width="1" height="1" fill="#ffff00"/><rect x="9" y="4" width="1" height="1" fill="#000000"/><rect x="10" y="4" width="2" height="1" fill="#ffffff"/><rect x="12" y="4" width="1" height="1" fill="#808080"/><rect x="0" y="5" width="1" height="1" fill="#808080"/><rect x="1" y="5" width="1" height="1" fill="#ffffff"/><rect x="2" y="5" width="1" height="1" fill="#000000"/><rect x="3" y="5" width="4" height="1" fill="#ffff00"/><rect x="7" y="5" width="1" height="1" fill="#000000"/><rect x="8" y="5" width="1" height="1" fill="#ffff00"/><rect x="9" y="5" width="1" height="1" fill="#000000"/><rect x="10" y="5" width="2" height="1" fill="#ffffff"/><rect x="12" y="5" width="1" height="1" fill="#808080"/><rect x="0" y="6" width="1" height="1" fill="#808080"/><rect x="1" y="6" width="1" height="1" fill="#ffffff"/><rect x="2" y="6" width="1" height="1" fill="#000000"/><rect x="3" y="6" width="4" height="1" fill="#ffff00"/><rect x="7" y="6" width="1" height="1" fill="#000000"/><rect x="8" y="6" width="1" height="1" fill="#ffff00"/><rect x="9" y="6" width="1" height="1" fill="#000000"/><rect x="10" y="6" width="2" height="1" fill="#ffffff"/><rect x="12" y="6" width="1" height="1" fill="#808080"/><rect x="0" y="7" width="1" height="1" fill="#808080"/><rect x="1" y="7" width="1" height="1" fill="#ffffff"/><rect x="2" y="7" width="1" height="1" fill="#000000"/><rect x="3" y="7" width="4" height="1" fill="#ffff00"/><rect x="7" y="7" width="1" height="1" fill="#000000"/><rect x="8" y="7" width="1" height="1" fill="#ffff00"/><rect x="9" y="7" width="1" height="1" fill="#000000"/><rect x="10" y="7" width="2" height="1" fill="#ffffff"/><rect x="12" y="7" width="1" height="1" fill="#808080"/><rect x="0" y="8" width="1" height="1" fill="#808080"/><rect x="1" y="8" width="1" height="1" fill="#ffffff"/><rect x="2" y="8" width="1" height="1" fill="#000000"/><rect x="3" y="8" width="4" height="1" fill="#ffff00"/><rect x="7" y="8" width="2" height="1" fill="#000000"/><rect x="9" y="8" width="3" height="1" fill="#ffffff"/><rect x="12" y="8" width="1" height="1" fill="#808080"/><rect x="0" y="9" width="1" height="1" fill="#808080"/><rect x="1" y="9" width="1" height="1" fill="#ffffff"/><rect x="2" y="9" width="6" height="1" fill="#000000"/><rect x="8" y="9" width="4" height="1" fill="#ffffff"/><rect x="12" y="9" width="1" height="1" fill="#808080"/><rect x="0" y="10" width="1" height="1" fill="#808080"/><rect x="1" y="10" width="11" height="1" fill="#ffffff"/><rect x="12" y="10" width="1" height="1" fill="#808080"/><rect x="0" y="11" width="1" height="1" fill="#808080"/><rect x="1" y="11" width="11" height="1" fill="#ffffff"/><rect x="12" y="11" width="1" height="1" fill="#808080"/><rect x="0" y="12" width="1" height="1" fill="#808080"/><rect x="1" y="12" width="11" height="1" fill="#ffffff"/><rect x="12" y="12" width="1" height="1" fill="#808080"/><rect x="0" y="13" width="13" height="1" fill="#808080"/></svg><div class="t" style="left:53px;top:501px">Deployment View</div><svg class="a" style="left:33px;top:518px" width="16" height="13" shape-rendering="crispEdges"><rect x="3" y="0" width="5" height="1" fill="#000000"/><rect x="2" y="1" width="1" height="1" fill="#000000"/><rect x="3" y="1" width="5" height="1" fill="#ffff00"/><rect x="8" y="1" width="1" height="1" fill="#000000"/><rect x="1" y="2" width="1" height="1" fill="#000000"/><rect x="2" y="2" width="7" height="1" fill="#ffff00"/><rect x="9" y="2" width="6" height="1" fill="#000000"/><rect x="0" y="3" width="1" height="1" fill="#000000"/><rect x="1" y="3" width="14" height="1" fill="#c0c0c0"/><rect x="15" y="3" width="1" height="1" fill="#808080"/><rect x="0" y="4" width="1" height="1" fill="#000000"/><rect x="1" y="4" width="13" height="1" fill="#ffff00"/><rect x="14" y="4" width="1" height="1" fill="#000000"/><rect x="15" y="4" width="1" height="1" fill="#808080"/><rect x="0" y="5" width="1" height="1" fill="#000000"/><rect x="1" y="5" width="3" height="1" fill="#ffff00"/><rect x="4" y="5" width="1" height="1" fill="#0000ff"/><rect x="5" y="5" width="5" height="1" fill="#ffff00"/><rect x="10" y="5" width="1" height="1" fill="#0000ff"/><rect x="11" y="5" width="3" height="1" fill="#ffff00"/><rect x="14" y="5" width="1" height="1" fill="#000000"/><rect x="15" y="5" width="1" height="1" fill="#808080"/><rect x="0" y="6" width="1" height="1" fill="#000000"/><rect x="1" y="6" width="2" height="1" fill="#ffff00"/><rect x="3" y="6" width="1" height="1" fill="#0000ff"/><rect x="4" y="6" width="1" height="1" fill="#00ffff"/><rect x="5" y="6" width="1" height="1" fill="#0000ff"/><rect x="6" y="6" width="3" height="1" fill="#ffff00"/><rect x="9" y="6" width="1" height="1" fill="#0000ff"/><rect x="10" y="6" width="1" height="1" fill="#00ffff"/><rect x="11" y="6" width="1" height="1" fill="#0000ff"/><rect x="12" y="6" width="2" height="1" fill="#ffff00"/><rect x="14" y="6" width="1" height="1" fill="#000000"/><rect x="15" y="6" width="1" height="1" fill="#808080"/><rect x="0" y="7" width="1" height="1" fill="#000000"/><rect x="1" y="7" width="1" height="1" fill="#ffff00"/><rect x="2" y="7" width="1" height="1" fill="#0000ff"/><rect x="3" y="7" width="3" height="1" fill="#00ffff"/><rect x="6" y="7" width="1" height="1" fill="#0000ff"/><rect x="7" y="7" width="1" height="1" fill="#ffff00"/><rect x="8" y="7" width="1" height="1" fill="#0000ff"/><rect x="9" y="7" width="3" height="1" fill="#00ffff"/><rect x="12" y="7" width="1" height="1" fill="#0000ff"/><rect x="13" y="7" width="1" height="1" fill="#ffff00"/><rect x="14" y="7" width="1" height="1" fill="#000000"/><rect x="15" y="7" width="1" height="1" fill="#808080"/><rect x="0" y="8" width="1" height="1" fill="#000000"/><rect x="1" y="8" width="2" height="1" fill="#ffff00"/><rect x="3" y="8" width="1" height="1" fill="#0000ff"/><rect x="4" y="8" width="3" height="1" fill="#00ffff"/><rect x="7" y="8" width="1" height="1" fill="#0000ff"/><rect x="8" y="8" width="1" height="1" fill="#ffff00"/><rect x="9" y="8" width="1" height="1" fill="#0000ff"/><rect x="10" y="8" width="3" height="1" fill="#00ffff"/><rect x="13" y="8" width="1" height="1" fill="#0000ff"/><rect x="14" y="8" width="1" height="1" fill="#000000"/><rect x="15" y="8" width="1" height="1" fill="#808080"/><rect x="0" y="9" width="1" height="1" fill="#000000"/><rect x="1" y="9" width="3" height="1" fill="#ffff00"/><rect x="4" y="9" width="1" height="1" fill="#0000ff"/><rect x="5" y="9" width="1" height="1" fill="#00ffff"/><rect x="6" y="9" width="1" height="1" fill="#0000ff"/><rect x="7" y="9" width="3" height="1" fill="#ffff00"/><rect x="10" y="9" width="1" height="1" fill="#0000ff"/><rect x="11" y="9" width="1" height="1" fill="#00ffff"/><rect x="12" y="9" width="1" height="1" fill="#0000ff"/><rect x="13" y="9" width="1" height="1" fill="#ffff00"/><rect x="14" y="9" width="1" height="1" fill="#000000"/><rect x="15" y="9" width="1" height="1" fill="#808080"/><rect x="0" y="10" width="1" height="1" fill="#000000"/><rect x="1" y="10" width="4" height="1" fill="#ffff00"/><rect x="5" y="10" width="1" height="1" fill="#0000ff"/><rect x="6" y="10" width="5" height="1" fill="#ffff00"/><rect x="11" y="10" width="1" height="1" fill="#0000ff"/><rect x="12" y="10" width="2" height="1" fill="#ffff00"/><rect x="14" y="10" width="1" height="1" fill="#000000"/><rect x="15" y="10" width="1" height="1" fill="#808080"/><rect x="0" y="11" width="15" height="1" fill="#000000"/><rect x="15" y="11" width="1" height="1" fill="#808080"/><rect x="1" y="12" width="15" height="1" fill="#808080"/></svg><div class="t" style="left:53px;top:517px">Model Properties</div><div class="a" style="left:2px;top:616px;width:276px;height:1px;background:#fff"></div><div class="a" style="left:2px;top:620px;width:276px;height:1px;background:#a0a0a0"></div><div class="a" style="left:2px;top:621px;width:276px;height:1px;background:#696969"></div><div class="a" style="left:11px;top:627px;width:260px;height:59px;border-top:1px solid #a0a0a0;border-left:1px solid #a0a0a0;border-right:1px solid #fff;border-bottom:1px solid #fff"></div><div class="a" style="left:12px;top:628px;width:258px;height:57px;background:#fff;border-top:1px solid #696969;border-left:1px solid #696969;border-right:1px solid #e3e3e3;border-bottom:1px solid #e3e3e3"></div><div class="a" style="left:252px;top:629px;width:17px;height:55px;background:#f0f0f0;border-left:1px solid #e6e6e6"></div><svg class="a" style="left:256px;top:636px" width="8" height="4"><polygon points="0,4 8,4 4,0" fill="#a3a3a3" shape-rendering="crispEdges"/></svg><svg class="a" style="left:256px;top:675px" width="8" height="4"><polygon points="0,0 8,0 4,4" fill="#a3a3a3" shape-rendering="crispEdges"/></svg><div class="a" style="left:2px;top:73px;width:315px;height:1px;background:#fff"></div><div class="a" style="left:278px;top:74px;width:1px;height:619px;background:#fff"></div><div class="a" style="left:282px;top:74px;width:1px;height:619px;background:#7a7a7a"></div><div class="a" style="left:283px;top:74px;width:34px;height:619px;border-top:1px solid #a0a0a0;border-left:1px solid #fff;border-right:1px solid #a0a0a0"></div><div class="a" style="left:2px;top:693px;width:1071px;height:1px;background:#a0a0a0"></div><div class="a" style="left:2px;top:694px;width:1071px;height:1px;background:#fff"></div><div class="a" style="left:287px;top:79px;width:24px;height:22px;border-top:1px solid #a0a0a0;border-left:1px solid #a0a0a0;border-right:1px solid #fff;border-bottom:1px solid #fff;background-color:#fafafa;background-image:linear-gradient(45deg,#e8e8e8 25%,transparent 25%,transparent 75%,#e8e8e8 75%),linear-gradient(45deg,#e8e8e8 25%,transparent 25%,transparent 75%,#e8e8e8 75%);background-size:2px 2px;background-position:0 0,1px 1px;"></div><svg class="a" style="left:295px;top:83px" width="9" height="14" shape-rendering="crispEdges"><rect x="0" y="0" width="2" height="1" fill="#000000"/><rect x="0" y="1" width="3" height="1" fill="#000000"/><rect x="0" y="2" width="2" height="1" fill="#000000"/><rect x="3" y="2" width="1" height="1" fill="#000000"/><rect x="0" y="3" width="2" height="1" fill="#000000"/><rect x="4" y="3" width="1" height="1" fill="#000000"/><rect x="0" y="4" width="2" height="1" fill="#000000"/><rect x="5" y="4" width="1" height="1" fill="#000000"/><rect x="0" y="5" width="2" height="1" fill="#000000"/><rect x="6" y="5" width="1" height="1" fill="#000000"/><rect x="0" y="6" width="2" height="1" fill="#000000"/><rect x="7" y="6" width="1" height="1" fill="#000000"/><rect x="0" y="7" width="2" height="1" fill="#000000"/><rect x="8" y="7" width="1" height="1" fill="#000000"/><rect x="0" y="8" width="2" height="1" fill="#000000"/><rect x="4" y="8" width="5" height="1" fill="#000000"/><rect x="0" y="9" width="2" height="1" fill="#000000"/><rect x="3" y="9" width="3" height="1" fill="#000000"/><rect x="0" y="10" width="3" height="1" fill="#000000"/><rect x="4" y="10" width="2" height="1" fill="#000000"/><rect x="0" y="11" width="2" height="1" fill="#000000"/><rect x="4" y="11" width="3" height="1" fill="#000000"/><rect x="4" y="12" width="3" height="1" fill="#000000"/><rect x="5" y="13" width="2" height="1" fill="#000000"/></svg><svg class="a" style="left:292px;top:108px" width="15" height="8" shape-rendering="crispEdges"><rect x="2" y="0" width="1" height="1" fill="#000000"/><rect x="6" y="0" width="3" height="1" fill="#000000"/><rect x="12" y="0" width="2" height="1" fill="#000000"/><rect x="1" y="1" width="2" height="1" fill="#000000"/><rect x="6" y="1" width="1" height="1" fill="#000000"/><rect x="9" y="1" width="1" height="1" fill="#000000"/><rect x="11" y="1" width="1" height="1" fill="#000000"/><rect x="14" y="1" width="1" height="1" fill="#000000"/><rect x="1" y="2" width="1" height="1" fill="#000000"/><rect x="3" y="2" width="1" height="1" fill="#000000"/><rect x="6" y="2" width="1" height="1" fill="#000000"/><rect x="9" y="2" width="1" height="1" fill="#000000"/><rect x="11" y="2" width="1" height="1" fill="#000000"/><rect x="1" y="3" width="1" height="1" fill="#000000"/><rect x="3" y="3" width="1" height="1" fill="#000000"/><rect x="6" y="3" width="3" height="1" fill="#000000"/><rect x="11" y="3" width="1" height="1" fill="#000000"/><rect x="0" y="4" width="1" height="1" fill="#000000"/><rect x="3" y="4" width="1" height="1" fill="#000000"/><rect x="6" y="4" width="1" height="1" fill="#000000"/><rect x="9" y="4" width="1" height="1" fill="#000000"/><rect x="11" y="4" width="1" height="1" fill="#000000"/><rect x="0" y="5" width="4" height="1" fill="#000000"/><rect x="6" y="5" width="1" height="1" fill="#000000"/><rect x="9" y="5" width="1" height="1" fill="#000000"/><rect x="11" y="5" width="1" height="1" fill="#000000"/><rect x="0" y="6" width="1" height="1" fill="#000000"/><rect x="3" y="6" width="2" height="1" fill="#000000"/><rect x="6" y="6" width="1" height="1" fill="#000000"/><rect x="9" y="6" width="1" height="1" fill="#000000"/><rect x="11" y="6" width="1" height="1" fill="#000000"/><rect x="14" y="6" width="1" height="1" fill="#000000"/><rect x="0" y="7" width="1" height="1" fill="#000000"/><rect x="3" y="7" width="2" height="1" fill="#000000"/><rect x="6" y="7" width="3" height="1" fill="#000000"/><rect x="12" y="7" width="2" height="1" fill="#000000"/></svg><svg class="a" style="left:293px;top:129px" width="14" height="9" shape-rendering="crispEdges"><rect x="0" y="0" width="11" height="1" fill="#000000"/><rect x="0" y="1" width="1" height="1" fill="#000000"/><rect x="10" y="1" width="2" height="1" fill="#000000"/><rect x="0" y="2" width="1" height="1" fill="#000000"/><rect x="10" y="2" width="1" height="1" fill="#000000"/><rect x="11" y="2" width="1" height="1" fill="#ffffff"/><rect x="12" y="2" width="1" height="1" fill="#000000"/><rect x="0" y="3" width="1" height="1" fill="#000000"/><rect x="3" y="3" width="6" height="1" fill="#808080"/><rect x="10" y="3" width="4" height="1" fill="#000000"/><rect x="0" y="4" width="1" height="1" fill="#000000"/><rect x="13" y="4" width="1" height="1" fill="#000000"/><rect x="0" y="5" width="1" height="1" fill="#000000"/><rect x="3" y="5" width="7" height="1" fill="#808080"/><rect x="13" y="5" width="1" height="1" fill="#000000"/><rect x="0" y="6" width="1" height="1" fill="#000000"/><rect x="13" y="6" width="1" height="1" fill="#000000"/><rect x="0" y="7" width="1" height="1" fill="#000000"/><rect x="13" y="7" width="1" height="1" fill="#000000"/><rect x="0" y="8" width="14" height="1" fill="#000000"/></svg><svg class="a" style="left:292px;top:149px" width="14" height="14" shape-rendering="crispEdges"><rect x="13" y="0" width="1" height="1" fill="#000000"/><rect x="12" y="1" width="1" height="1" fill="#000000"/><rect x="10" y="3" width="1" height="1" fill="#000000"/><rect x="9" y="4" width="1" height="1" fill="#000000"/><rect x="7" y="6" width="1" height="1" fill="#000000"/><rect x="6" y="7" width="1" height="1" fill="#000000"/><rect x="4" y="9" width="1" height="1" fill="#000000"/><rect x="3" y="10" width="1" height="1" fill="#000000"/><rect x="1" y="12" width="1" height="1" fill="#000000"/><rect x="0" y="13" width="1" height="1" fill="#000000"/></svg><svg class="a" style="left:294px;top:172px" width="12" height="12" shape-rendering="crispEdges"><rect x="0" y="0" width="12" height="1" fill="#000000"/><rect x="0" y="1" width="1" height="1" fill="#000000"/><rect x="11" y="1" width="1" height="1" fill="#000000"/><rect x="0" y="2" width="12" height="1" fill="#000000"/><rect x="0" y="3" width="1" height="1" fill="#000000"/><rect x="11" y="3" width="1" height="1" fill="#000000"/><rect x="0" y="4" width="1" height="1" fill="#000000"/><rect x="2" y="4" width="8" height="1" fill="#808080"/><rect x="11" y="4" width="1" height="1" fill="#000000"/><rect x="0" y="5" width="1" height="1" fill="#000000"/><rect x="11" y="5" width="1" height="1" fill="#000000"/><rect x="0" y="6" width="12" height="1" fill="#000000"/><rect x="0" y="7" width="1" height="1" fill="#000000"/><rect x="11" y="7" width="1" height="1" fill="#000000"/><rect x="0" y="8" width="1" height="1" fill="#000000"/><rect x="4" y="8" width="4" height="1" fill="#808080"/><rect x="11" y="8" width="1" height="1" fill="#000000"/><rect x="0" y="9" width="1" height="1" fill="#000000"/><rect x="11" y="9" width="1" height="1" fill="#000000"/><rect x="0" y="10" width="1" height="1" fill="#000000"/><rect x="11" y="10" width="1" height="1" fill="#000000"/><rect x="0" y="11" width="12" height="1" fill="#000000"/></svg><svg class="a" style="left:293px;top:196px" width="14" height="7" shape-rendering="crispEdges"><rect x="9" y="0" width="3" height="1" fill="#000000"/><rect x="8" y="1" width="1" height="1" fill="#000000"/><rect x="12" y="1" width="1" height="1" fill="#000000"/><rect x="7" y="2" width="1" height="1" fill="#000000"/><rect x="13" y="2" width="1" height="1" fill="#000000"/><rect x="0" y="3" width="8" height="1" fill="#000000"/><rect x="13" y="3" width="1" height="1" fill="#000000"/><rect x="7" y="4" width="1" height="1" fill="#000000"/><rect x="13" y="4" width="1" height="1" fill="#000000"/><rect x="8" y="5" width="1" height="1" fill="#000000"/><rect x="12" y="5" width="1" height="1" fill="#000000"/><rect x="9" y="6" width="3" height="1" fill="#000000"/></svg><svg class="a" style="left:294px;top:214px" width="12" height="14" shape-rendering="crispEdges"><rect x="9" y="0" width="1" height="1" fill="#000000"/><rect x="10" y="1" width="1" height="1" fill="#000000"/><rect x="0" y="2" width="12" height="1" fill="#000000"/><rect x="0" y="3" width="1" height="1" fill="#000000"/><rect x="10" y="3" width="1" height="1" fill="#000000"/><rect x="0" y="4" width="1" height="1" fill="#000000"/><rect x="9" y="4" width="1" height="1" fill="#000000"/><rect x="0" y="5" width="1" height="1" fill="#000000"/><rect x="0" y="6" width="1" height="1" fill="#000000"/><rect x="0" y="7" width="1" height="1" fill="#000000"/><rect x="0" y="8" width="1" height="1" fill="#000000"/><rect x="0" y="9" width="1" height="1" fill="#000000"/><rect x="0" y="10" width="1" height="1" fill="#000000"/><rect x="0" y="11" width="1" height="1" fill="#000000"/><rect x="0" y="12" width="1" height="1" fill="#000000"/><rect x="0" y="13" width="1" height="1" fill="#000000"/></svg><div class="a" style="left:289px;top:236px;width:21px;height:1px;background:#a0a0a0"></div><div class="a" style="left:289px;top:237px;width:21px;height:1px;background:#fff"></div><svg class="a" style="left:292px;top:246px" width="13" height="12" shape-rendering="crispEdges"><rect x="3" y="0" width="10" height="1" fill="#000000"/><rect x="10" y="1" width="1" height="1" fill="#000000"/><rect x="9" y="2" width="1" height="1" fill="#000000"/><rect x="8" y="3" width="1" height="1" fill="#000000"/><rect x="6" y="5" width="1" height="1" fill="#000000"/><rect x="5" y="6" width="1" height="1" fill="#000000"/><rect x="3" y="8" width="1" height="1" fill="#000000"/><rect x="2" y="9" width="1" height="1" fill="#000000"/><rect x="0" y="11" width="1" height="1" fill="#000000"/></svg><svg class="a" style="left:293px;top:268px" width="14" height="11" shape-rendering="crispEdges"><rect x="0" y="0" width="6" height="1" fill="#000000"/><rect x="0" y="1" width="1" height="1" fill="#000000"/><rect x="5" y="1" width="1" height="1" fill="#000000"/><rect x="0" y="2" width="14" height="1" fill="#000000"/><rect x="0" y="3" width="1" height="1" fill="#000000"/><rect x="13" y="3" width="1" height="1" fill="#000000"/><rect x="0" y="4" width="1" height="1" fill="#000000"/><rect x="3" y="4" width="8" height="1" fill="#808080"/><rect x="13" y="4" width="1" height="1" fill="#000000"/><rect x="0" y="5" width="1" height="1" fill="#000000"/><rect x="13" y="5" width="1" height="1" fill="#000000"/><rect x="0" y="6" width="1" height="1" fill="#000000"/><rect x="4" y="6" width="7" height="1" fill="#808080"/><rect x="13" y="6" width="1" height="1" fill="#000000"/><rect x="0" y="7" width="1" height="1" fill="#000000"/><rect x="13" y="7" width="1" height="1" fill="#000000"/><rect x="0" y="8" width="1" height="1" fill="#000000"/><rect x="13" y="8" width="1" height="1" fill="#000000"/><rect x="0" y="9" width="1" height="1" fill="#000000"/><rect x="13" y="9" width="1" height="1" fill="#000000"/><rect x="0" y="10" width="14" height="1" fill="#000000"/></svg><svg class="a" style="left:292px;top:289px" width="14" height="13" shape-rendering="crispEdges"><rect x="8" y="0" width="6" height="1" fill="#000000"/><rect x="11" y="1" width="2" height="1" fill="#000000"/><rect x="10" y="2" width="1" height="1" fill="#000000"/><rect x="12" y="2" width="1" height="1" fill="#000000"/><rect x="9" y="3" width="1" height="1" fill="#000000"/><rect x="12" y="3" width="1" height="1" fill="#000000"/><rect x="8" y="4" width="1" height="1" fill="#000000"/><rect x="12" y="4" width="1" height="1" fill="#000000"/><rect x="6" y="6" width="1" height="1" fill="#000000"/><rect x="5" y="7" width="1" height="1" fill="#000000"/><rect x="3" y="9" width="1" height="1" fill="#000000"/><rect x="2" y="10" width="1" height="1" fill="#000000"/><rect x="0" y="12" width="1" height="1" fill="#000000"/></svg><svg class="a" style="left:292px;top:311px" width="15" height="13" shape-rendering="crispEdges"><rect x="9" y="0" width="1" height="1" fill="#000000"/><rect x="8" y="1" width="1" height="1" fill="#000000"/><rect x="9" y="1" width="1" height="1" fill="#ffffff"/><rect x="10" y="1" width="1" height="1" fill="#000000"/><rect x="8" y="2" width="1" height="1" fill="#000000"/><rect x="9" y="2" width="1" height="1" fill="#ffffff"/><rect x="10" y="2" width="1" height="1" fill="#000000"/><rect x="7" y="3" width="1" height="1" fill="#000000"/><rect x="8" y="3" width="3" height="1" fill="#ffffff"/><rect x="11" y="3" width="1" height="1" fill="#000000"/><rect x="7" y="4" width="1" height="1" fill="#000000"/><rect x="8" y="4" width="3" height="1" fill="#ffffff"/><rect x="11" y="4" width="1" height="1" fill="#000000"/><rect x="6" y="5" width="7" height="1" fill="#000000"/><rect x="9" y="6" width="1" height="1" fill="#000000"/><rect x="9" y="7" width="1" height="1" fill="#000000"/><rect x="9" y="8" width="1" height="1" fill="#000000"/><rect x="9" y="9" width="1" height="1" fill="#000000"/><rect x="9" y="10" width="1" height="1" fill="#000000"/><rect x="10" y="11" width="1" height="1" fill="#000000"/><rect x="0" y="12" width="10" height="1" fill="#000000"/></svg><svg class="a" style="left:295px;top:333px" width="12" height="13" shape-rendering="crispEdges"><rect x="6" y="0" width="1" height="1" fill="#000000"/><rect x="5" y="1" width="1" height="1" fill="#000000"/><rect x="6" y="1" width="1" height="1" fill="#ffffff"/><rect x="7" y="1" width="1" height="1" fill="#000000"/><rect x="5" y="2" width="1" height="1" fill="#000000"/><rect x="6" y="2" width="1" height="1" fill="#ffffff"/><rect x="7" y="2" width="1" height="1" fill="#000000"/><rect x="4" y="3" width="1" height="1" fill="#000000"/><rect x="5" y="3" width="3" height="1" fill="#ffffff"/><rect x="8" y="3" width="1" height="1" fill="#000000"/><rect x="4" y="4" width="1" height="1" fill="#000000"/><rect x="5" y="4" width="3" height="1" fill="#ffffff"/><rect x="8" y="4" width="1" height="1" fill="#000000"/><rect x="3" y="5" width="7" height="1" fill="#000000"/><rect x="6" y="6" width="1" height="1" fill="#000000"/><rect x="6" y="7" width="1" height="1" fill="#000000"/><rect x="6" y="9" width="1" height="1" fill="#000000"/><rect x="6" y="10" width="1" height="1" fill="#000000"/><rect x="0" y="11" width="2" height="1" fill="#000000"/><rect x="3" y="11" width="2" height="1" fill="#000000"/><rect x="0" y="12" width="2" height="1" fill="#000000"/><rect x="3" y="12" width="2" height="1" fill="#000000"/><rect x="6" y="12" width="1" height="1" fill="#000000"/></svg><div class="a" style="left:317px;top:73px;width:1px;height:621px;background:#696969"></div><div class="a" style="left:317px;top:73px;width:755px;height:1px;background:#696969"></div><div class="a" style="left:318px;top:74px;width:736px;height:602px;background:#fff"></div><div class="a" style="left:1071px;top:74px;width:2px;height:620px;background:#f0f0f0"></div><div class="a" style="left:1054px;top:74px;width:17px;height:602px;background-color:#fafafa;background-image:linear-gradient(45deg,#e8e8e8 25%,transparent 25%,transparent 75%,#e8e8e8 75%),linear-gradient(45deg,#e8e8e8 25%,transparent 25%,transparent 75%,#e8e8e8 75%);background-size:2px 2px;background-position:0 0,1px 1px;"></div><div class="a" style="left:1054px;top:74px;width:17px;height:17px;background:#f0f0f0;border-top:1px solid #e3e3e3;border-left:1px solid #e3e3e3;border-right:1px solid #696969;border-bottom:1px solid #696969;"><div style="position:absolute;left:0;top:0;right:0;bottom:0;border-top:1px solid #fff;border-left:1px solid #fff;border-right:1px solid #a0a0a0;border-bottom:1px solid #a0a0a0"></div></div><svg class="a" style="left:1058px;top:80px" width="8" height="4"><polygon points="0,4 8,4 4,0" fill="#000" shape-rendering="crispEdges"/></svg><div class="a" style="left:1054px;top:91px;width:17px;height:509px;background:#f0f0f0;border-top:1px solid #e3e3e3;border-left:1px solid #e3e3e3;border-right:1px solid #696969;border-bottom:1px solid #696969;"><div style="position:absolute;left:0;top:0;right:0;bottom:0;border-top:1px solid #fff;border-left:1px solid #fff;border-right:1px solid #a0a0a0;border-bottom:1px solid #a0a0a0"></div></div><div class="a" style="left:1054px;top:659px;width:17px;height:17px;background:#f0f0f0;border-top:1px solid #e3e3e3;border-left:1px solid #e3e3e3;border-right:1px solid #696969;border-bottom:1px solid #696969;"><div style="position:absolute;left:0;top:0;right:0;bottom:0;border-top:1px solid #fff;border-left:1px solid #fff;border-right:1px solid #a0a0a0;border-bottom:1px solid #a0a0a0"></div></div><svg class="a" style="left:1058px;top:665px" width="8" height="4"><polygon points="0,0 8,0 4,4" fill="#000" shape-rendering="crispEdges"/></svg><div class="a" style="left:318px;top:676px;width:736px;height:17px;background-color:#fafafa;background-image:linear-gradient(45deg,#e8e8e8 25%,transparent 25%,transparent 75%,#e8e8e8 75%),linear-gradient(45deg,#e8e8e8 25%,transparent 25%,transparent 75%,#e8e8e8 75%);background-size:2px 2px;background-position:0 0,1px 1px;"></div><div class="a" style="left:318px;top:676px;width:17px;height:17px;background:#f0f0f0;border-top:1px solid #e3e3e3;border-left:1px solid #e3e3e3;border-right:1px solid #696969;border-bottom:1px solid #696969;"><div style="position:absolute;left:0;top:0;right:0;bottom:0;border-top:1px solid #fff;border-left:1px solid #fff;border-right:1px solid #a0a0a0;border-bottom:1px solid #a0a0a0"></div></div><svg class="a" style="left:323px;top:681px" width="4" height="8"><polygon points="4,0 4,8 0,4" fill="#a0a0a0" shape-rendering="crispEdges"/></svg><div class="a" style="left:1037px;top:676px;width:17px;height:17px;background:#f0f0f0;border-top:1px solid #e3e3e3;border-left:1px solid #e3e3e3;border-right:1px solid #696969;border-bottom:1px solid #696969;"><div style="position:absolute;left:0;top:0;right:0;bottom:0;border-top:1px solid #fff;border-left:1px solid #fff;border-right:1px solid #a0a0a0;border-bottom:1px solid #a0a0a0"></div></div><svg class="a" style="left:1044px;top:681px" width="4" height="8"><polygon points="0,0 0,8 4,4" fill="#a0a0a0" shape-rendering="crispEdges"/></svg><div class="a" style="left:1054px;top:676px;width:17px;height:17px;background:#f0f0f0"></div><div class="a" style="left:1055px;top:676px;width:16px;height:17px;background:#d8d8d8;border-top:1px solid #696969;border-left:1px solid #696969;border-bottom:1px solid #fff;border-right:1px solid #fff"></div><svg class="a" style="left:1056px;top:677px" width="15" height="16"><path d="M5 14.5 C3.5 13 2 11 1.5 9 C1.2 8 2.3 7.5 3 8.3 L4.5 10 V3 C4.5 2 6 2 6 3 V7.5 V1.8 C6 0.8 7.6 0.8 7.6 1.8 V7.5 V2.5 C7.6 1.5 9.2 1.5 9.2 2.5 V7.5 V3.5 C9.2 2.6 10.8 2.6 10.8 3.5 V10 C10.8 12 10 13.5 9.5 14.5 Z" fill="#fff" stroke="#000" stroke-width="1"/></svg><div class="a" style="left:484px;top:191px;width:71px;height:79px;background:#ffffcc;border:1px solid #990033"></div><div class="a" style="left:484px;top:218px;width:71px;height:1px;background:#990033"></div><div class="a" style="left:484px;top:255px;width:71px;height:1px;background:#990033"></div><div class="a" style="left:497px;top:197px;font-family:'Liberation Serif',serif;font-size:18px;line-height:20px;white-space:nowrap;color:#000">Nguoi</div><div class="a" style="left:856px;top:185px;width:57px;height:79px;background:#ffffcc;border:1px solid #990033"></div><div class="a" style="left:856px;top:212px;width:57px;height:1px;background:#990033"></div><div class="a" style="left:856px;top:249px;width:57px;height:1px;background:#990033"></div><div class="a" style="left:874px;top:191px;font-family:'Liberation Serif',serif;font-size:18px;line-height:20px;white-space:nowrap;color:#000">Xe</div><svg class="a" style="left:488px;top:222px" width="15" height="13" shape-rendering="crispEdges"><rect x="1" y="0" width="5" height="1" fill="#000000"/><rect x="0" y="1" width="1" height="1" fill="#000000"/><rect x="1" y="1" width="1" height="1" fill="#ffffff"/><rect x="2" y="1" width="4" height="1" fill="#ffff00"/><rect x="6" y="1" width="1" height="1" fill="#000000"/><rect x="0" y="2" width="1" height="1" fill="#000000"/><rect x="1" y="2" width="1" height="1" fill="#ffffff"/><rect x="2" y="2" width="1" height="1" fill="#ffff00"/><rect x="3" y="2" width="1" height="1" fill="#000000"/><rect x="4" y="2" width="2" height="1" fill="#ffff00"/><rect x="6" y="2" width="1" height="1" fill="#000000"/><rect x="0" y="3" width="1" height="1" fill="#000000"/><rect x="1" y="3" width="1" height="1" fill="#ffffff"/><rect x="2" y="3" width="4" height="1" fill="#ffff00"/><rect x="6" y="3" width="1" height="1" fill="#000000"/><rect x="11" y="3" width="1" height="1" fill="#0000ff"/><rect x="1" y="4" width="1" height="1" fill="#000000"/><rect x="2" y="4" width="3" height="1" fill="#ffff00"/><rect x="5" y="4" width="1" height="1" fill="#000000"/><rect x="10" y="4" width="1" height="1" fill="#0000ff"/><rect x="11" y="4" width="1" height="1" fill="#00ffff"/><rect x="12" y="4" width="1" height="1" fill="#0000ff"/><rect x="2" y="5" width="1" height="1" fill="#000000"/><rect x="3" y="5" width="1" height="1" fill="#ffff00"/><rect x="4" y="5" width="1" height="1" fill="#000000"/><rect x="9" y="5" width="1" height="1" fill="#0000ff"/><rect x="10" y="5" width="3" height="1" fill="#00ffff"/><rect x="13" y="5" width="1" height="1" fill="#0000ff"/><rect x="2" y="6" width="1" height="1" fill="#000000"/><rect x="3" y="6" width="1" height="1" fill="#ffff00"/><rect x="4" y="6" width="2" height="1" fill="#000000"/><rect x="8" y="6" width="1" height="1" fill="#0000ff"/><rect x="9" y="6" width="4" height="1" fill="#00ffff"/><rect x="13" y="6" width="2" height="1" fill="#0000ff"/><rect x="2" y="7" width="1" height="1" fill="#000000"/><rect x="3" y="7" width="2" height="1" fill="#ffff00"/><rect x="5" y="7" width="1" height="1" fill="#000000"/><rect x="7" y="7" width="1" height="1" fill="#0000ff"/><rect x="8" y="7" width="5" height="1" fill="#00ffff"/><rect x="13" y="7" width="1" height="1" fill="#0000ff"/><rect x="2" y="8" width="1" height="1" fill="#000000"/><rect x="3" y="8" width="1" height="1" fill="#ffff00"/><rect x="4" y="8" width="2" height="1" fill="#000000"/><rect x="6" y="8" width="1" height="1" fill="#0000ff"/><rect x="7" y="8" width="5" height="1" fill="#00ffff"/><rect x="12" y="8" width="2" height="1" fill="#0000ff"/><rect x="2" y="9" width="1" height="1" fill="#000000"/><rect x="3" y="9" width="2" height="1" fill="#ffff00"/><rect x="5" y="9" width="1" height="1" fill="#000000"/><rect x="6" y="9" width="2" height="1" fill="#0000ff"/><rect x="8" y="9" width="3" height="1" fill="#00ffff"/><rect x="11" y="9" width="2" height="1" fill="#0000ff"/><rect x="2" y="10" width="1" height="1" fill="#000000"/><rect x="3" y="10" width="1" height="1" fill="#ffff00"/><rect x="4" y="10" width="1" height="1" fill="#000000"/><rect x="7" y="10" width="2" height="1" fill="#0000ff"/><rect x="9" y="10" width="1" height="1" fill="#00ffff"/><rect x="10" y="10" width="2" height="1" fill="#0000ff"/><rect x="3" y="11" width="1" height="1" fill="#000000"/><rect x="8" y="11" width="3" height="1" fill="#0000ff"/><rect x="9" y="12" width="1" height="1" fill="#0000ff"/></svg><div class="a" style="left:503px;top:222px;font-family:'Liberation Serif',serif;font-size:12px;line-height:15px;white-space:nowrap;color:#000;letter-spacing:0.9px">manguoi</div><svg class="a" style="left:494px;top:240px" width="9" height="10" shape-rendering="crispEdges"><rect x="5" y="0" width="1" height="1" fill="#0000ff"/><rect x="4" y="1" width="1" height="1" fill="#0000ff"/><rect x="5" y="1" width="1" height="1" fill="#00ffff"/><rect x="6" y="1" width="1" height="1" fill="#0000ff"/><rect x="3" y="2" width="1" height="1" fill="#0000ff"/><rect x="4" y="2" width="3" height="1" fill="#00ffff"/><rect x="7" y="2" width="1" height="1" fill="#0000ff"/><rect x="2" y="3" width="1" height="1" fill="#0000ff"/><rect x="3" y="3" width="4" height="1" fill="#00ffff"/><rect x="7" y="3" width="2" height="1" fill="#0000ff"/><rect x="1" y="4" width="1" height="1" fill="#0000ff"/><rect x="2" y="4" width="5" height="1" fill="#00ffff"/><rect x="7" y="4" width="1" height="1" fill="#0000ff"/><rect x="0" y="5" width="1" height="1" fill="#0000ff"/><rect x="1" y="5" width="5" height="1" fill="#00ffff"/><rect x="6" y="5" width="2" height="1" fill="#0000ff"/><rect x="0" y="6" width="2" height="1" fill="#0000ff"/><rect x="2" y="6" width="3" height="1" fill="#00ffff"/><rect x="5" y="6" width="2" height="1" fill="#0000ff"/><rect x="1" y="7" width="2" height="1" fill="#0000ff"/><rect x="3" y="7" width="1" height="1" fill="#00ffff"/><rect x="4" y="7" width="2" height="1" fill="#0000ff"/><rect x="2" y="8" width="3" height="1" fill="#0000ff"/><rect x="3" y="9" width="1" height="1" fill="#0000ff"/></svg><div class="a" style="left:503px;top:237px;font-family:'Liberation Serif',serif;font-size:12px;line-height:15px;white-space:nowrap;color:#000;letter-spacing:0.8px">tennguoi</div><svg class="a" style="left:859px;top:216px" width="15" height="13" shape-rendering="crispEdges"><rect x="1" y="0" width="5" height="1" fill="#000000"/><rect x="0" y="1" width="1" height="1" fill="#000000"/><rect x="1" y="1" width="1" height="1" fill="#ffffff"/><rect x="2" y="1" width="4" height="1" fill="#ffff00"/><rect x="6" y="1" width="1" height="1" fill="#000000"/><rect x="0" y="2" width="1" height="1" fill="#000000"/><rect x="1" y="2" width="1" height="1" fill="#ffffff"/><rect x="2" y="2" width="1" height="1" fill="#ffff00"/><rect x="3" y="2" width="1" height="1" fill="#000000"/><rect x="4" y="2" width="2" height="1" fill="#ffff00"/><rect x="6" y="2" width="1" height="1" fill="#000000"/><rect x="0" y="3" width="1" height="1" fill="#000000"/><rect x="1" y="3" width="1" height="1" fill="#ffffff"/><rect x="2" y="3" width="4" height="1" fill="#ffff00"/><rect x="6" y="3" width="1" height="1" fill="#000000"/><rect x="11" y="3" width="1" height="1" fill="#0000ff"/><rect x="1" y="4" width="1" height="1" fill="#000000"/><rect x="2" y="4" width="3" height="1" fill="#ffff00"/><rect x="5" y="4" width="1" height="1" fill="#000000"/><rect x="10" y="4" width="1" height="1" fill="#0000ff"/><rect x="11" y="4" width="1" height="1" fill="#00ffff"/><rect x="12" y="4" width="1" height="1" fill="#0000ff"/><rect x="2" y="5" width="1" height="1" fill="#000000"/><rect x="3" y="5" width="1" height="1" fill="#ffff00"/><rect x="4" y="5" width="1" height="1" fill="#000000"/><rect x="9" y="5" width="1" height="1" fill="#0000ff"/><rect x="10" y="5" width="3" height="1" fill="#00ffff"/><rect x="13" y="5" width="1" height="1" fill="#0000ff"/><rect x="2" y="6" width="1" height="1" fill="#000000"/><rect x="3" y="6" width="1" height="1" fill="#ffff00"/><rect x="4" y="6" width="2" height="1" fill="#000000"/><rect x="8" y="6" width="1" height="1" fill="#0000ff"/><rect x="9" y="6" width="4" height="1" fill="#00ffff"/><rect x="13" y="6" width="2" height="1" fill="#0000ff"/><rect x="2" y="7" width="1" height="1" fill="#000000"/><rect x="3" y="7" width="2" height="1" fill="#ffff00"/><rect x="5" y="7" width="1" height="1" fill="#000000"/><rect x="7" y="7" width="1" height="1" fill="#0000ff"/><rect x="8" y="7" width="5" height="1" fill="#00ffff"/><rect x="13" y="7" width="1" height="1" fill="#0000ff"/><rect x="2" y="8" width="1" height="1" fill="#000000"/><rect x="3" y="8" width="1" height="1" fill="#ffff00"/><rect x="4" y="8" width="2" height="1" fill="#000000"/><rect x="6" y="8" width="1" height="1" fill="#0000ff"/><rect x="7" y="8" width="5" height="1" fill="#00ffff"/><rect x="12" y="8" width="2" height="1" fill="#0000ff"/><rect x="2" y="9" width="1" height="1" fill="#000000"/><rect x="3" y="9" width="2" height="1" fill="#ffff00"/><rect x="5" y="9" width="1" height="1" fill="#000000"/><rect x="6" y="9" width="2" height="1" fill="#0000ff"/><rect x="8" y="9" width="3" height="1" fill="#00ffff"/><rect x="11" y="9" width="2" height="1" fill="#0000ff"/><rect x="2" y="10" width="1" height="1" fill="#000000"/><rect x="3" y="10" width="1" height="1" fill="#ffff00"/><rect x="4" y="10" width="1" height="1" fill="#000000"/><rect x="7" y="10" width="2" height="1" fill="#0000ff"/><rect x="9" y="10" width="1" height="1" fill="#00ffff"/><rect x="10" y="10" width="2" height="1" fill="#0000ff"/><rect x="3" y="11" width="1" height="1" fill="#000000"/><rect x="8" y="11" width="3" height="1" fill="#0000ff"/><rect x="9" y="12" width="1" height="1" fill="#0000ff"/></svg><div class="a" style="left:875px;top:215px;font-family:'Liberation Serif',serif;font-size:12px;line-height:15px;white-space:nowrap;color:#000;letter-spacing:1px">maxe</div><svg class="a" style="left:866px;top:232px" width="9" height="10" shape-rendering="crispEdges"><rect x="5" y="0" width="1" height="1" fill="#0000ff"/><rect x="4" y="1" width="1" height="1" fill="#0000ff"/><rect x="5" y="1" width="1" height="1" fill="#00ffff"/><rect x="6" y="1" width="1" height="1" fill="#0000ff"/><rect x="3" y="2" width="1" height="1" fill="#0000ff"/><rect x="4" y="2" width="3" height="1" fill="#00ffff"/><rect x="7" y="2" width="1" height="1" fill="#0000ff"/><rect x="2" y="3" width="1" height="1" fill="#0000ff"/><rect x="3" y="3" width="4" height="1" fill="#00ffff"/><rect x="7" y="3" width="2" height="1" fill="#0000ff"/><rect x="1" y="4" width="1" height="1" fill="#0000ff"/><rect x="2" y="4" width="5" height="1" fill="#00ffff"/><rect x="7" y="4" width="1" height="1" fill="#0000ff"/><rect x="0" y="5" width="1" height="1" fill="#0000ff"/><rect x="1" y="5" width="5" height="1" fill="#00ffff"/><rect x="6" y="5" width="2" height="1" fill="#0000ff"/><rect x="0" y="6" width="2" height="1" fill="#0000ff"/><rect x="2" y="6" width="3" height="1" fill="#00ffff"/><rect x="5" y="6" width="2" height="1" fill="#0000ff"/><rect x="1" y="7" width="2" height="1" fill="#0000ff"/><rect x="3" y="7" width="1" height="1" fill="#00ffff"/><rect x="4" y="7" width="2" height="1" fill="#0000ff"/><rect x="2" y="8" width="3" height="1" fill="#0000ff"/><rect x="3" y="9" width="1" height="1" fill="#0000ff"/></svg><div class="a" style="left:875px;top:230px;font-family:'Liberation Serif',serif;font-size:12px;line-height:15px;white-space:nowrap;color:#000;letter-spacing:1px">tenxe</div><div class="a" style="left:556px;top:230px;width:24px;height:1px;background:#990033"></div><div class="a" style="left:580px;top:229px;width:50px;height:1px;background:#990033"></div><div class="a" style="left:630px;top:228px;width:50px;height:1px;background:#990033"></div><div class="a" style="left:680px;top:227px;width:63px;height:1px;background:#990033"></div><div class="a" style="left:743px;top:226px;width:75px;height:1px;background:#990033"></div><div class="a" style="left:818px;top:225px;width:37px;height:1px;background:#990033"></div><svg class="a" style="left:835px;top:215px" width="22" height="21"><path d="M10 5.5 L19.5 10.5 L10 16" stroke="#990033" stroke-width="0.9" fill="none"/><circle cx="18.5" cy="10.5" r="1.2" fill="#990033"/></svg><div class="t" style="left:6px;top:697px">For Help, press F1</div><div class="a" style="left:637px;top:697px;width:217px;height:15px;border-top:1px solid #a0a0a0;border-left:1px solid #a0a0a0;border-right:1px solid #fff;border-bottom:1px solid #fff"></div><div class="t" style="left:639px;top:697px">Default Language: Analysis</div><div class="a" style="left:857px;top:697px;width:51px;height:15px;border-top:1px solid #a0a0a0;border-left:1px solid #a0a0a0;border-right:1px solid #fff;border-bottom:1px solid #fff"></div><div class="a" style="left:911px;top:697px;width:54px;height:15px;border-top:1px solid #a0a0a0;border-left:1px solid #a0a0a0;border-right:1px solid #fff;border-bottom:1px solid #fff"></div><div class="a" style="left:968px;top:697px;width:24px;height:15px;border-top:1px solid #a0a0a0;border-left:1px solid #a0a0a0;border-right:1px solid #fff;border-bottom:1px solid #fff"></div><div class="a" style="left:995px;top:697px;width:28px;height:15px;border-top:1px solid #a0a0a0;border-left:1px solid #a0a0a0;border-right:1px solid #fff;border-bottom:1px solid #fff"></div><div class="t" style="left:997px;top:697px">NUM</div><div class="a" style="left:1026px;top:697px;width:31px;height:15px;border-top:1px solid #a0a0a0;border-left:1px solid #a0a0a0;border-right:1px solid #fff;border-bottom:1px solid #fff"></div><svg class="a" style="left:1060px;top:699px" width="13" height="13"><path d="M12 1 L1 12 M12 5 L5 12 M12 9 L9 12" stroke="#a0a0a0" stroke-width="1.2"/><path d="M12 2 L2 12 M12 6 L6 12 M12 10 L10 12" stroke="#fff" stroke-width="1"/></svg>
</body></html>
